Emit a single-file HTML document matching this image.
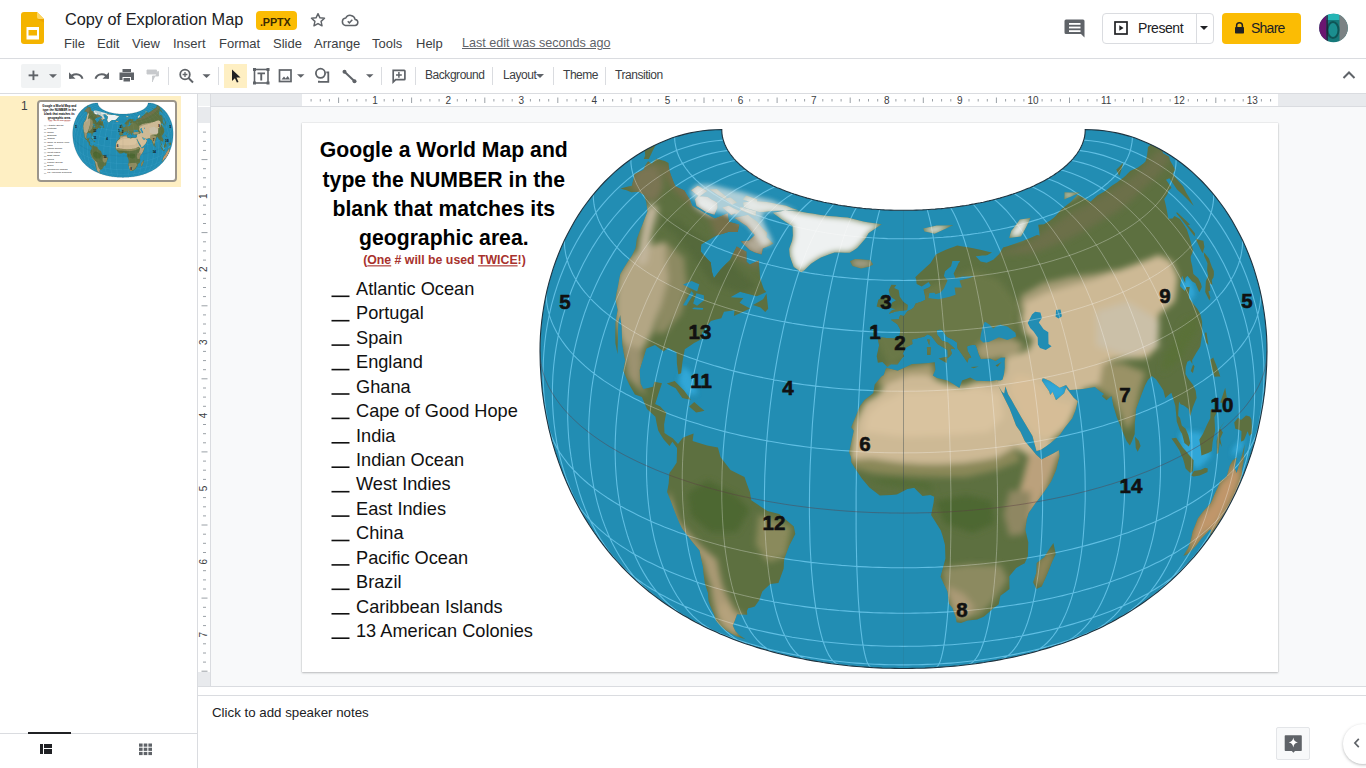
<!DOCTYPE html>
<html><head><meta charset="utf-8">
<style>
*{box-sizing:border-box;margin:0;padding:0}
html,body{width:1366px;height:768px;overflow:hidden;background:#fff;font-family:"Liberation Sans",sans-serif;color:#202124}
.a{position:absolute;white-space:nowrap}
.menu{font-size:13px;color:#3c4043;top:36px}
.tb{font-size:12px;color:#3c4043;top:68px;letter-spacing:-0.45px}
.sep{position:absolute;top:67px;width:1px;height:18px;background:#dadce0}
svg{position:absolute;overflow:visible}
</style></head><body>
<!-- header -->
<svg style="left:0;top:0" width="60" height="58">
 <path d="M21 15 a3 3 0 0 1 3 -3 h13 l7 7 v22 a3 3 0 0 1 -3 3 h-17 a3 3 0 0 1 -3 -3z" fill="#f4b400"/>
 <path d="M37 19h7v3.5z" fill="#e89a00" opacity="0.55"/><path d="M37 12 l7 7 h-5 a2 2 0 0 1 -2 -2z" fill="#fdd663"/>
 <rect x="26.5" y="27" width="12.5" height="12.5" fill="#fff"/>
 <rect x="28.5" y="30" width="8.5" height="5.5" fill="#f4b400"/>
</svg>
<div class="a" style="left:65px;top:10px;font-size:16.3px;color:#202124">Copy of Exploration Map</div>
<div class="a" style="left:256px;top:11px;width:41px;height:19px;background:#fbbc04;border-radius:4px"></div>
<div class="a" style="left:260px;top:15.5px;font-size:10.8px;font-weight:bold;color:#3b2b00;letter-spacing:-0.15px">.PPTX</div>
<svg style="left:308.7px;top:10.5px" width="18" height="18" viewBox="0 0 24 24"><path d="M12 3.5l2.6 5.6 6.1.6-4.6 4.1 1.3 6-5.4-3.1-5.4 3.1 1.3-6-4.6-4.1 6.1-.6z" fill="none" stroke="#5f6368" stroke-width="1.9" stroke-linejoin="round"/></svg>
<svg style="left:340px;top:10px" width="20" height="20" viewBox="0 0 24 24"><path d="M6.5 18.5h11a3.6 3.6 0 0 0 .6-7.2A6 6 0 0 0 6.9 9.6 4.5 4.5 0 0 0 6.5 18.5z" fill="none" stroke="#5f6368" stroke-width="1.8"/><path d="M9.3 13.5l1.9 1.9 3.6-3.6" fill="none" stroke="#5f6368" stroke-width="1.8"/></svg>

<div class="a menu" style="left:64px">File</div>
<div class="a menu" style="left:97px">Edit</div>
<div class="a menu" style="left:132px">View</div>
<div class="a menu" style="left:173px">Insert</div>
<div class="a menu" style="left:219px">Format</div>
<div class="a menu" style="left:273px">Slide</div>
<div class="a menu" style="left:314px">Arrange</div>
<div class="a menu" style="left:372px">Tools</div>
<div class="a menu" style="left:416px">Help</div>
<div class="a" style="left:462px;top:36px;font-size:12.6px;color:#5f6368;text-decoration:underline">Last edit was seconds ago</div>

<!-- right header -->
<svg style="left:1064px;top:18px" width="22" height="20" viewBox="0 0 22 20"><path d="M2 1.5h17a1.5 1.5 0 0 1 1.5 1.5v16.5l-3.5-3.5h-15a1.5 1.5 0 0 1 -1.5 -1.5v-11.5a1.5 1.5 0 0 1 1.5 -1.5z" fill="#5f6368"/><rect x="5" y="5" width="11.5" height="1.8" fill="#fff"/><rect x="5" y="8.6" width="11.5" height="1.8" fill="#fff"/><rect x="5" y="12.2" width="11.5" height="1.8" fill="#fff"/></svg>
<div class="a" style="left:1102px;top:13px;width:112px;height:31px;border:1px solid #dadce0;border-radius:4px"></div>
<div class="a" style="left:1196px;top:14px;width:1px;height:29px;background:#dadce0"></div>
<svg style="left:1114px;top:21px" width="14" height="14" viewBox="0 0 14 14"><rect x="1" y="1" width="12" height="12" fill="none" stroke="#202124" stroke-width="1.7"/><path d="M5.3 4.2v5.6l4.2-2.8z" fill="#202124"/></svg>
<div class="a" style="left:1138px;top:20px;font-size:14px;letter-spacing:-0.45px;color:#202124">Present</div>
<svg style="left:1200px;top:26px" width="9" height="5"><path d="M0 0h8l-4 4z" fill="#202124"/></svg>
<div class="a" style="left:1222px;top:13px;width:79px;height:31px;background:#fbbc04;border-radius:4px"></div>
<svg style="left:1234px;top:22px" width="11" height="12" viewBox="0 0 11 12"><path d="M2.6 5V3.6a2.9 2.9 0 0 1 5.8 0V5" fill="none" stroke="#202124" stroke-width="1.5"/><rect x="1" y="5" width="9" height="6.5" rx="0.8" fill="#202124"/></svg>
<div class="a" style="left:1251px;top:20px;font-size:14px;letter-spacing:-0.75px;color:#202124">Share</div>
<svg style="left:1318px;top:13px" width="31" height="31" viewBox="0 0 31 31">
 <defs><clipPath id="av"><circle cx="15.5" cy="15" r="14.3"/></clipPath></defs>
 <g clip-path="url(#av)"><rect width="31" height="31" fill="#16797a"/><rect x="0" y="0" width="8.5" height="31" fill="#6a1670"/><rect x="8.5" y="0" width="13" height="7" fill="#25b5b5"/><rect x="21.5" y="0" width="10" height="31" fill="#7b8284"/><ellipse cx="15" cy="17" rx="5.5" ry="8" fill="#1b8e8f" stroke="#0f5556" stroke-width="2"/><rect x="8.5" y="0" width="1.2" height="31" fill="#2a1030"/></g>
</svg>
<div class="a" style="left:0;top:58px;width:1366px;height:1px;background:#dadce0"></div>

<!-- toolbar -->
<div class="a" style="left:21px;top:64px;width:40px;height:24px;background:#f1f3f4;border-radius:2px"></div>
<svg style="left:0;top:58px" width="420" height="35">
 <g fill="#5f6368" stroke="none">
  <rect x="28.6" y="16.4" width="9.6" height="1.9"/><rect x="32.5" y="12.6" width="1.9" height="9.5"/>
  <path d="M49 16.3h8l-4 3.8z"/>
  <path d="M202.5 16.3h8l-4 3.8z"/><path d="M297 16.3h7.5l-3.75 3.5z"/><path d="M366 16.3h7.5l-3.75 3.5z"/>
 </g>
 <path d="M70 20.5 a6.5 6 0 0 1 12.5 0.3" fill="none" stroke="#5f6368" stroke-width="2"/><path d="M69 14.3v6.5h6.5z" fill="#5f6368"/>
 <path d="M108 20.5 a6.5 6 0 0 0 -12.5 0.3" fill="none" stroke="#5f6368" stroke-width="2"/><path d="M109 14.3v6.5h-6.5z" fill="#5f6368"/>
 <path d="M122.5 11h8.5v3h-8.5z M119.5 14.5h14.5a0 0 0 0 1 0 0v7.5h-3v-3h-8.5v3h-3z M123.5 20h6.5v3.5h-6.5z" fill="#5f6368"/>
 <path d="M147 12h9.5v4h-9.5z M157.5 13.5h1v4.5h-6v6" fill="#c7c9cc" stroke="#c7c9cc" stroke-width="0.9"/>
 <circle cx="185" cy="16.5" r="4.8" fill="none" stroke="#5f6368" stroke-width="1.8"/><path d="M188.5 20l4.5 4.5" stroke="#5f6368" stroke-width="2"/><path d="M182.6 16.5h4.8M185 14.1v4.8" stroke="#5f6368" stroke-width="1.3"/>
</svg>
<div class="sep" style="left:168px"></div>
<div class="sep" style="left:218px"></div>
<div class="a" style="left:224px;top:64px;width:23px;height:24px;background:#feefc3"></div>
<svg style="left:0;top:58px" width="420" height="35">
 <path d="M232 11.5v11.5l2.9-2.8 2 4.4 1.6-.7-2-4.3h4z" fill="#202124"/>
 <rect x="254.5" y="11.5" width="13.5" height="13.5" fill="none" stroke="#5f6368" stroke-width="1.6"/>
 <g fill="#5f6368"><rect x="253" y="10" width="3" height="3"/><rect x="266.5" y="10" width="3" height="3"/><rect x="253" y="23.5" width="3" height="3"/><rect x="266.5" y="23.5" width="3" height="3"/></g>
 <path d="M257.5 14.5h7.5v1.8h-2.8v6.2h-1.9v-6.2h-2.8z" fill="#5f6368"/>
 <rect x="279.5" y="12" width="11.5" height="11.5" fill="none" stroke="#5f6368" stroke-width="1.7"/><path d="M281.5 21.5l2.5-3 1.7 2 2-2.5 2.3 3.5z" fill="#5f6368"/>
 <circle cx="320.5" cy="15.3" r="4.6" fill="none" stroke="#5f6368" stroke-width="1.8"/><path d="M326.3 14.3h2v9.6h-9.4v-1.2" fill="none" stroke="#5f6368" stroke-width="1.8"/>
 <path d="M344.5 13.8l10 9.4" stroke="#5f6368" stroke-width="2"/><circle cx="344.5" cy="13.8" r="2" fill="#5f6368"/><circle cx="354.5" cy="23.2" r="2" fill="#5f6368"/>
 <path d="M393.2 12.3h11a.7.7 0 0 1 .7.7v8a.7.7 0 0 1 -.7.7h-8.5l-2.5 2.3z" fill="none" stroke="#5f6368" stroke-width="1.7"/><path d="M396 16.9h5.8M398.9 14v5.8" stroke="#5f6368" stroke-width="1.5"/>
</svg>
<div class="sep" style="left:381px"></div>
<div class="sep" style="left:415px"></div>
<div class="a tb" style="left:425px">Background</div>
<div class="sep" style="left:492px"></div>
<div class="a tb" style="left:503px">Layout</div>
<svg style="left:536px;top:74px" width="9" height="5"><path d="M0 0h8l-4 4z" fill="#5f6368"/></svg>
<div class="sep" style="left:553px"></div>
<div class="a tb" style="left:563px">Theme</div>
<div class="sep" style="left:605px"></div>
<div class="a tb" style="left:615px">Transition</div>
<svg style="left:1342px;top:70px" width="14" height="10"><path d="M1.5 8l5.5-5.5 5.5 5.5" fill="none" stroke="#5f6368" stroke-width="2"/></svg>
<div class="a" style="left:0;top:93px;width:1366px;height:1px;background:#dadce0"></div>

<!-- left filmstrip -->
<div class="a" style="left:0;top:96px;width:181px;height:91px;background:#feefc3"></div>
<div class="a" style="left:21px;top:99px;font-size:12px;color:#3c4043">1</div>
<div class="a" style="left:37px;top:100px;width:140px;height:82px;border:2px solid #9b958b;border-radius:4px;background:#fff;overflow:hidden"><svg style="left:-39px;top:-102px" width="1366" height="768"><use href="#slideg" transform="translate(-1.94 85) scale(0.1382)"/></svg></div>
<div class="a" style="left:197px;top:94px;width:1px;height:674px;background:#dadce0"></div>
<div class="a" style="left:0;top:733px;width:197px;height:1px;background:#dadce0"></div>
<div class="a" style="left:28px;top:732px;width:43px;height:2px;background:#202124"></div>
<svg style="left:38px;top:742px" width="16" height="14"><path d="M2 2h3v10h-3z M6 2h8v4h-8z M6 7h8v5h-8z" fill="#202124"/></svg>
<svg style="left:138px;top:742px" width="16" height="14"><g fill="#5f6368"><rect x="1" y="1.5" width="3.6" height="3.2"/><rect x="5.7" y="1.5" width="3.6" height="3.2"/><rect x="10.4" y="1.5" width="3.6" height="3.2"/><rect x="1" y="5.7" width="3.6" height="3.2"/><rect x="5.7" y="5.7" width="3.6" height="3.2"/><rect x="10.4" y="5.7" width="3.6" height="3.2"/><rect x="1" y="9.9" width="3.6" height="3.2"/><rect x="5.7" y="9.9" width="3.6" height="3.2"/><rect x="10.4" y="9.9" width="3.6" height="3.2"/></g></svg>

<!-- canvas -->
<div class="a" style="left:198px;top:94px;width:1168px;height:592px;background:#f8f9fa"></div>
<div class="a" style="left:198px;top:94px;width:1168px;height:13px;background:#fff;border-bottom:1px solid #dadce0"></div>
<div class="a" style="left:211px;top:94px;width:91px;height:12px;background:#e8eaed"></div>
<div class="a" style="left:1278px;top:94px;width:88px;height:12px;background:#e8eaed"></div>
<div class="a" style="left:198px;top:94px;width:13px;height:592px;background:#fff;border-right:1px solid #dadce0"></div>
<div class="a" style="left:198px;top:107px;width:12px;height:16px;background:#e8eaed"></div>
<div class="a" style="left:198px;top:672px;width:12px;height:14px;background:#e8eaed"></div>
<div class="a" style="left:198px;top:94px;width:12px;height:12px;background:#f1f3f4"></div>
<svg id="rulers" style="left:0;top:0" width="1366" height="768"><path d="M311.1 99v2.5M320.3 99v2.5M329.4 99v2.5M338.6 97.5v5.5M347.7 99v2.5M356.8 99v2.5M366.0 99v2.5M384.2 99v2.5M393.4 99v2.5M402.5 99v2.5M411.6 97.5v5.5M420.8 99v2.5M429.9 99v2.5M439.1 99v2.5M457.3 99v2.5M466.5 99v2.5M475.6 99v2.5M484.8 97.5v5.5M493.9 99v2.5M503.0 99v2.5M512.2 99v2.5M530.4 99v2.5M539.6 99v2.5M548.7 99v2.5M557.8 97.5v5.5M567.0 99v2.5M576.1 99v2.5M585.3 99v2.5M603.5 99v2.5M612.7 99v2.5M621.8 99v2.5M631.0 97.5v5.5M640.1 99v2.5M649.2 99v2.5M658.4 99v2.5M676.6 99v2.5M685.8 99v2.5M694.9 99v2.5M704.0 97.5v5.5M713.2 99v2.5M722.3 99v2.5M731.5 99v2.5M749.7 99v2.5M758.9 99v2.5M768.0 99v2.5M777.1 97.5v5.5M786.3 99v2.5M795.4 99v2.5M804.6 99v2.5M822.8 99v2.5M832.0 99v2.5M841.1 99v2.5M850.2 97.5v5.5M859.4 99v2.5M868.5 99v2.5M877.7 99v2.5M895.9 99v2.5M905.1 99v2.5M914.2 99v2.5M923.3 97.5v5.5M932.5 99v2.5M941.6 99v2.5M950.8 99v2.5M969.0 99v2.5M978.2 99v2.5M987.3 99v2.5M996.4 97.5v5.5M1005.6 99v2.5M1014.7 99v2.5M1023.9 99v2.5M1042.1 99v2.5M1051.3 99v2.5M1060.4 99v2.5M1069.5 97.5v5.5M1078.7 99v2.5M1087.8 99v2.5M1097.0 99v2.5M1115.2 99v2.5M1124.4 99v2.5M1133.5 99v2.5M1142.7 97.5v5.5M1151.8 99v2.5M1160.9 99v2.5M1170.1 99v2.5M1188.3 99v2.5M1197.5 99v2.5M1206.6 99v2.5M1215.8 97.5v5.5M1224.9 99v2.5M1234.0 99v2.5M1243.2 99v2.5M1261.4 99v2.5M1270.6 99v2.5M203 132.1h3M203 141.3h3M203 150.4h3M201.5 159.6h6M203 168.7h3M203 177.8h3M203 187.0h3M203 205.2h3M203 214.4h3M203 223.5h3M201.5 232.6h6M203 241.8h3M203 250.9h3M203 260.1h3M203 278.3h3M203 287.5h3M203 296.6h3M201.5 305.8h6M203 314.9h3M203 324.0h3M203 333.2h3M203 351.4h3M203 360.6h3M203 369.7h3M201.5 378.8h6M203 388.0h3M203 397.1h3M203 406.3h3M203 424.5h3M203 433.7h3M203 442.8h3M201.5 451.9h6M203 461.1h3M203 470.2h3M203 479.4h3M203 497.6h3M203 506.8h3M203 515.9h3M201.5 525.0h6M203 534.2h3M203 543.3h3M203 552.5h3M203 570.7h3M203 579.9h3M203 589.0h3M201.5 598.1h6M203 607.3h3M203 616.4h3M203 625.6h3M203 643.8h3M203 653.0h3M203 662.1h3M201.5 671.2h6" stroke="#9aa0a6" stroke-width="1" fill="none"/><g font-family="Liberation Sans" font-size="10" fill="#3c4043" text-anchor="middle"><text x="375.1" y="104">1</text><text x="448.2" y="104">2</text><text x="521.3" y="104">3</text><text x="594.4" y="104">4</text><text x="667.5" y="104">5</text><text x="740.6" y="104">6</text><text x="813.7" y="104">7</text><text x="886.8" y="104">8</text><text x="959.9" y="104">9</text><text x="1033.0" y="104">10</text><text x="1106.1" y="104">11</text><text x="1179.2" y="104">12</text><text x="1252.3" y="104">13</text><text transform="translate(207.3 196.1) rotate(-90)" x="0" y="0">1</text><text transform="translate(207.3 269.2) rotate(-90)" x="0" y="0">2</text><text transform="translate(207.3 342.3) rotate(-90)" x="0" y="0">3</text><text transform="translate(207.3 415.4) rotate(-90)" x="0" y="0">4</text><text transform="translate(207.3 488.5) rotate(-90)" x="0" y="0">5</text><text transform="translate(207.3 561.6) rotate(-90)" x="0" y="0">6</text><text transform="translate(207.3 634.7) rotate(-90)" x="0" y="0">7</text></g></svg>

<div class="a" style="left:302px;top:123px;width:976px;height:549px;background:#fff;box-shadow:0 1px 2px rgba(60,64,67,.3),0 0 1px rgba(60,64,67,.3)"></div>
<svg id="slidesvg" style="left:0;top:0" width="1366" height="768"><defs><path id="landp" d="M677 448L672.4 441.8L669.6 446.1L663.9 439.8L661 435.2L658.2 430.5L656.7 423.7L655.4 416.8L651.1 412.8L647 408.9L644.4 403L641.9 397.1L638.4 395.8L634.9 394.5L632.2 389.8L629.5 385.1L626.3 377.9L623.3 370.7L625.2 360.6L623.6 352.3L622.3 344L621.9 335.3L621.7 326.7L620.9 320.9L620.3 315.1L618.3 322.1L618 330L618 338.1L617.7 346.1L617.6 354.3L616.5 348.8L615.4 343.3L615.3 332.8L615.5 322.5L616.5 316.2L617.7 309.9L616.5 304.4L615.5 298.8L616.7 292L618.1 285.4L619.1 279.7L620.3 274L624 267.7L627.9 261.5L632 255.5L635.6 247.9L636.2 243.3L636.8 238.7L639.6 231.4L642.6 224.3L645 217.8L647.5 211.6L647.1 208.5L646.7 205.4L646.4 202.4L645.6 199.9L644.9 197.5L644.3 195L641.5 193.4L638.8 191.8L635 192L631.3 192.2L628.9 191.3L626.6 190.3L623.6 189.4L620.6 188.5L626.2 187.1L631.9 185.7L632.7 182.2L633.7 178.7L634.1 176.4L634.6 174.1L639 172L643.5 170.1L644.5 167.7L645.4 165.3L648.1 161.3L649.9 162.5L651.8 163.7L656.4 158.8L659.1 159.5L661.9 160.2L664.8 161L666.6 162L668.5 163L668.7 165.4L669 167.8L669.3 170.2L670 172.5L670.8 174.9L671.7 177.3L672.7 179.7L673.5 181.9L674.4 184.1L675.4 186.3L678.3 187.7L681.2 189.1L684.3 190.5L685.5 192.6L686.8 194.8L688.2 197L689.7 199.2L690.9 202.5L692.3 205.8L695.2 207.6L698.3 209.3L701.4 211L704.6 212.9L708 214.8L711.4 216.7L714.9 218.6L721.3 215.9L727.7 213.3L728.2 217.5L728.9 221.9L732.3 222.8L735.8 223.8L739.3 224.7L737.7 232L733.4 231.9L729.1 231.8L722.8 233.7L716.4 235.6L708.9 239.9L701.3 244.3L700.7 251.6L703.9 255.3L707.3 258.9L710.8 262.5L711.3 267.2L712 272.1L713.9 278.2L717.3 273.7L720.8 269.3L725.4 264.5L730 259.9L733.4 253.1L736.8 246.6L740 248.4L743.1 250.1L746.4 251.8L746.4 256.8L746.5 261.8L749.8 264.5L754.3 262.6L758.8 260.6L759.1 265.6L759.6 270.8L760.1 277.9L761.9 283.7L764 289.6L766.3 292L761.5 294.2L756.7 296.3L751.1 294.8L745.5 293.3L740.1 291.8L735.3 294.6L730.6 297.3L734.8 297.6L739 297.8L743.3 298L739.6 302.7L744.8 305.7L750.1 308.6L744.7 311.1L739.3 313.5L733.9 315.9L734.5 310.2L729.3 311L724 311.8L721.3 318.2L716.1 319.6L710.9 320.9L706.6 326.6L702.2 332.4L701.4 339.2L694.1 343L689.4 346.2L684.8 349.3L683.6 355.5L682.5 361.7L681.8 367.5L681.1 373.2L678.3 374.3L676.9 363.4L676.6 352.5L672.4 350.2L668.2 347.8L663.6 351.4L659.3 348.2L655 344.9L650.7 346.7L646.4 348.6L644.7 353.9L643 359.2L641.3 364.6L639.7 369.9L640 376.6L640.5 383.4L643.3 389.1L648.1 387.9L653 386.7L654.4 381.7L658.2 382.5L662 383.3L660 388.9L658.2 394.6L655.2 404L660.3 406.6L663.3 409.7L666.3 412.8L665.1 418.7L664.1 424.6L664.5 433L668.5 435.7L672.7 438.2L678 443.9ZM678 443.9L682.8 437.7L688.2 435.6L693.6 433.4L692.6 441L697.4 442.5L702.3 444L707.2 445.4L712.5 446.5L717.9 447.6L720.6 457.3L725.5 463.6L730.5 469.9L737.4 473.5L744.5 477.1L747.1 484.6L749.9 492.1L751.3 500.2L756.6 503.8L762 507.4L767.4 510.9L773.3 512.5L779.2 514.1L786.5 520.3L793.8 526.4L795.3 534L792.2 539.9L789.2 545.7L786.7 552.2L784.2 558.7L783.9 563.6L783.7 568.4L781 575.9L778.4 583.1L774.3 583.5L770.3 584L766.3 587.8L762.3 591.6L760.7 595.9L759.2 600.2L756.9 603.4L754.8 606.6L751.5 607.5L748.2 608.3L746.9 611.1L747.2 614.8L742.1 614.5L737.1 614.2L736 617.3L735 620.1L733.8 623L732.8 625.5L734.1 628.5L735.5 631.2L739.1 634.9L742.4 637.2L745.6 639.3L741.5 638.1L737.4 636.8L731.6 633.7L725.8 630.3L721 626L716.3 621.3L715.2 618L714.1 614.6L712.2 610.4L710.3 606L708.6 601.3L708.2 597.2L708 592.9L706.4 588.2L704.9 583.4L704.1 578L703.4 572.4L702.9 566.6L701.2 558.8L699.6 550.6L693.7 543.5L688 536.2L682.3 528.7L679.2 522.5L676.3 515.5L673.6 508.4L670.9 501.2L667.1 492.1L668.7 483.3L669 478.2L669.4 473.1L672.8 468.6L676.7 462.4L676.8 457.3L677 452.1L677 448ZM886.6 367.8L892.1 369.3L897.7 370.7L904.9 367.4L912.1 364L919.2 363.7L926.3 363.3L930.6 362.7L934.8 362.2L935.4 369.7L932.8 375.4L937 378L942.4 379.3L947.9 380.7L953.6 384.3L959.4 388L962.1 380.5L966.2 378.9L970.2 377.4L976.3 380.8L983.6 381.1L990.8 381.3L997.3 380.1L998.4 385.7L1000.9 390.9L1003.3 396.1L1006.4 402.3L1009.5 408.4L1012.8 417.1L1016.1 425.7L1020.4 431.7L1024.7 441L1031.1 448.6L1036.2 454.7L1041.5 459.5L1047.3 456.5L1053.2 453.4L1058.9 450.3L1059.6 455.9L1057.8 463.2L1056 470.5L1051.1 481.5L1047.3 487.2L1043.4 492.8L1039.4 498.3L1035.2 503.6L1028.7 512.8L1026.8 518.8L1026.1 524.1L1025.3 529.4L1026.8 535.9L1028.3 542.3L1028.1 549.3L1027.9 556.1L1024.7 563.3L1020.4 565.6L1016.2 567.9L1009.3 576.3L1009.4 582.7L1009.5 589L1005 592.4L1000.4 595.7L999.5 600.2L998.6 604.5L993.8 607.8L988.9 612.2L984.1 616.5L977.2 619.5L972.4 620.1L967.5 620.6L961 623.1L956.6 622.2L955.9 617.8L954.2 613L952.5 607.9L949 603.7L948.3 597.9L947.6 591.8L944.1 584.5L940.6 576.8L942.2 570.8L943.8 564.7L945.4 558.5L945.2 551.8L945 545L943.7 540L942.3 534.9L940.8 530.5L936 522.8L931.1 514.9L932.3 508.9L933.6 502.8L934.2 496.8L930.4 495L922.5 496L918.4 491.9L914.3 487.8L907.3 489L902.1 491.8L896.9 494.6L891.2 494.9L885.5 495.2L879.8 495.5L874.6 491.5L869.4 487.5L861.6 478.3L856.4 470.3L851.3 462.2L851.1 457.3L849.1 452.3L850.7 445.1L852.2 437.9L853.8 430.7L851.2 427.3L854.1 420.2L857.1 413.1L860 406L864.7 399.7L869 396.4L873.3 393.1L874.7 384.6L881.4 376.4L883.8 374.9L885.7 368.9ZM887.4 367L890.9 364.3L897.5 364.4L902.1 358.1L904.1 356.2L902.7 353.4L906 347.6L912.4 344.1L912 339.6L916.6 338.4L920.3 337.5L924 336.7L927.7 334.3L931.3 336L937.5 344.1L943 347.3L947.6 350.1L947.9 357.9L950.3 355.8L951.8 353.8L950.5 348.4L955.1 349.3L953.5 347.4L948.2 342.8L942 340.8L937.2 334.7L936.6 330.2L940.3 329.2L942.6 330.6L946.9 336.8L953.1 339.8L957 342.6L957.5 348.3L961 353.1L962.9 355.7L967.5 362.8L968.5 358.4L971.2 357.3L967.5 351L967 346.4L969.9 345.3L975.3 344.8L976.8 347.7L978.6 353.8L980.9 359.1L985.5 358.8L990.1 358.4L995.5 360.9L1000.8 357.4L1005.3 357.6L1004.7 360.9L1004.8 368.1L1004 374.3L1002.6 379.4L1000.7 380.4L997.3 380.5L998.4 385.7L1002 391.7L1004.2 393.5L1005.4 386.3L1008.1 394.2L1011.6 399.9L1015.2 406.4L1018.2 411.7L1021.2 417.1L1025.7 424.6L1029.1 430.3L1032.5 435.9L1034.6 443.9L1036.5 450.9L1040.9 449.7L1045.8 446.4L1050.6 442.9L1055.3 438.9L1060 434.8L1064.9 427.4L1068.7 422.8L1072.3 418.2L1075.5 410.3L1077.8 401.3L1073.7 397.7L1069.9 392.8L1066.1 387.8L1064.2 393.3L1060.1 396.7L1056 400.2L1052.6 392.1L1050.2 395.1L1049.1 391.2L1045.4 385.9L1041.8 380.6L1042.8 378L1049.6 380.7L1054.7 384.2L1059.7 387.7L1066.1 384.9L1069.7 389.9L1076.2 389.5L1082.7 389.1L1088.8 388L1094.9 386.9L1099.6 391L1104.1 393.9L1101.8 395.9L1106.5 400.3L1111.5 395.8L1113.3 405.7L1115.1 411.5L1116.8 417.3L1119.2 423L1121.5 428.7L1124 434.9L1126.5 441.1L1129.9 445.6L1132.1 441.1L1134.7 434L1134.8 428.5L1134.8 423.1L1135.5 416.1L1136 409.1L1138.9 401.6L1141.7 394.1L1145 385.5L1147.9 379.9L1151.8 376L1156 379.3L1159.7 384.7L1163.3 390.2L1165.3 397.9L1168.3 395.3L1171.4 392.7L1173.4 399.2L1175.3 405.7L1176.1 413.8L1176.8 421.8L1180 430.4L1181.9 433.5L1183.2 438.3L1184.4 443L1188.9 446.5L1190.2 443L1188.4 435.2L1185.6 428.7L1181.8 425.4L1180 418L1178.1 415.7L1178.7 406.1L1179.1 401.6L1180.6 404.2L1183.9 405.4L1188.5 409.1L1190.3 416.1L1192.9 407L1196.6 397.9L1195.7 390.7L1193.1 384.9L1187.8 378L1185.5 374L1185.7 367.3L1187.3 361.8L1190 360.2L1192.4 364.1L1192.1 360.2L1194.2 356.6L1196.2 352.9L1198.3 349.7L1200.3 346.4L1201.3 339.9L1202.2 333.4L1202.1 321.6L1200.1 313.6L1197.3 308.7L1193.6 304.3L1189.1 298.2L1188.8 293.2L1189.8 287.1L1186.4 286.9L1184.8 291L1179.9 286.1L1180.9 281L1182.1 275.8L1185.2 283L1185.3 278.1L1187.5 275.8L1192 281.3L1195.4 283.3L1199.3 292.3L1200.6 289.7L1201.8 287.1L1200.9 283.4L1198.2 278.3L1193.4 274.1L1192.2 266.1L1190.9 260.7L1190.7 256.8L1191.9 253.7L1193.1 250.5L1191.3 243.9L1189.4 237.3L1186.8 229.2L1183.4 224L1179.9 218.9L1174.5 216L1172.5 218.4L1168.4 218.7L1167.3 212.7L1166.1 206.8L1165.2 202.8L1164.2 198.9L1165.9 196.6L1167.4 194.3L1167.9 192.5L1168.4 190.7L1170 189.3L1171.5 187.8L1166 179.8L1167.7 179L1169.3 178.2L1173.2 183.8L1177 189.6L1182.8 194.8L1188.3 200.2L1193.8 205.9L1189.6 198.3L1186.4 193L1183.1 186.2L1178.6 181.2L1174.2 176L1173 173.2L1174.1 171.5L1175.1 169.8L1172.8 165.2L1169.8 160.3L1169.5 158.5L1169.1 156.7L1162.9 153.3L1162.1 150.3L1156.6 147.3L1151 144.6L1149.5 145.8L1147.9 147L1147.8 148.8L1147.6 150.7L1147.4 152.5L1147.1 154.8L1146.7 157.1L1146.2 159.3L1145.5 161.6L1143.7 163.2L1141.7 164.7L1139.7 166.2L1137.6 167.7L1135.1 168.8L1132.7 169.8L1130.2 170.9L1128.7 172.5L1127.2 174.1L1125.6 175.8L1123.6 177.4L1121.5 179.1L1119.2 180.7L1117 182.4L1114.6 184L1112.2 185.5L1110.2 187.1L1108.2 188.7L1106.2 190.2L1104.1 191.7L1101.9 193L1099.6 194.2L1097.3 195.4L1095.2 197.5L1092.9 199.6L1090.6 201.7L1084.1 198.1L1077.6 194.8L1075.8 196.7L1074 198.6L1072.1 200.5L1070.1 202.4L1068 204.1L1065.9 205.8L1063.7 207.6L1061.4 209.3L1059.5 211.5L1057.6 213.7L1055.6 215.9L1053.5 218.1L1050.5 220.2L1047.3 222.3L1044.1 224.3L1041.2 224.5L1038.2 224.8L1039.1 230.2L1039.8 235.8L1037.2 235.1L1033.8 236.5L1030.4 237.9L1026.9 239.3L1023.4 240.7L1019.9 242L1016.3 243.3L1011.9 244.8L1007.6 246.2L1003.1 247.5L1001.2 250.8L999.3 254.1L996.4 256.8L993.5 259.6L989 258L984.6 256.5L988.4 254.5L992 252.4L987.3 251.4L982.5 250.3L977.9 249.3L973.2 248.2L967.8 247.3L962.5 246.4L957.2 245.5L953.4 246.9L949.7 248.3L945.9 249.7L940.9 252.1L935.9 254.4L933.2 258.8L930.4 263.2L926.2 267L921.9 270.9L918.6 274L915.3 277.2L916.1 279.1L916.7 284.1L921.7 286.6L925.2 284.2L928.6 281.9L930.8 285.3L929.3 287.3L923.6 289.8L924.8 294.8L925.6 299.8L921.2 301.7L915.7 303.5L913.8 307.4L911.2 309.5L907.6 311L904 316L900.1 315.2L898.8 319.2L894.8 319.5L890.8 319.8L897.4 324.3L900.3 329.5L899.4 338.1L892.5 338.4L886.8 337.9L881.1 337.4L878 339.5L879.1 345.3L877.9 350.7L876.7 356.1L877.9 362.8L882.4 362.1L885.5 365ZM801.2 272.2L797.4 269.6L793.7 267L791.7 261.4L789.8 256L789.1 248.9L790.6 244.8L792.1 240.8L792.9 235.4L792.7 230.6L792.6 226.1L789.7 224.4L786.8 222.7L784.1 221L781.4 219.2L778.5 217.1L775.6 215L772.9 212.8L779 211.7L785.1 210.6L788.8 210.9L792.5 211.1L796.3 211.2L800 211.4L804.1 212.2L808.2 212.9L812.4 213.6L816.6 214.3L820.9 214.9L825.1 215.5L828.9 215.9L832.6 216.2L836.4 216.6L840.2 216.9L843.9 217.2L847.7 217.4L851.6 218.5L855.5 219.5L859.4 220.5L863.5 221.4L867.5 222.3L871 222.8L874.6 223.3L878.1 223.8L881.7 224.2L877.5 227L873.2 229.9L868.7 233L865.5 238.6L861.4 243.2L857.2 248L853.5 250.4L849.7 252.8L844.7 252.7L839.7 252.6L834.6 252.5L830.1 254.1L825.6 255.8L820.9 257.5L816 260.6L811 263.8L804.1 270.5ZM761.7 254.5L758.3 253.5L754.9 252.5L752.3 251.2L749.7 249.9L746.6 247L743.6 244.2L740.8 241.3L744.8 241.1L748.8 240.8L754.9 235L752 232L749.3 229L746.7 226L743.6 224L740.5 222L737.5 220L734.6 218L741.3 216.6L748 215.1L750.8 217.2L753.8 219.3L756.9 221.4L758.8 223.8L760.7 226.1L762.7 228.5L764.9 230.7L767.1 232.8L766.4 237L769.8 240.3L773.3 243.5L769.9 245.6L762.8 248.4ZM759.4 212L755.4 210.8L751.5 209.6L747.7 208.4L743.9 207.1L743.5 204.7L743.1 202.5L749.2 201.8L755.3 201.1L759.1 201.4L762.9 201.7L766.6 202L770.5 202.8L774.4 203.6L778.3 204.4L782.2 205.1L786.2 205.8L789.3 207L792.4 208.2L795.6 209.3L798.9 210.5L794.5 210.5L790.1 210.6L785.6 210.6L781.2 210.6L776 210.7L770.8 210.9L767.1 211.5L763.4 212.1ZM755.5 216L751.6 214.6L747.9 213.1L744.2 211.6L740.6 210L740 206.8L743.9 208L747.9 209.1L751.9 210.2L756 211.3ZM714.4 214.8L710.4 213.5L706.5 212.2L703.9 210.7L701.3 209.1L698.8 207.5L696.4 205.9L695.6 202.5L695 199.2L698.3 195.8L702.9 196.4L707.6 196.9L709.9 198.4L712.3 199.9L714.7 201.3L717.2 202.8L717.3 205.4L717.4 208ZM699.4 196.6L697.2 195L695.1 193.4L693.1 191.8L691.1 190.2L697.8 185.7L700.1 187.1L702.4 188.5L704.7 189.8L707.1 191.1L703.2 193.8ZM731.3 214.9L728.9 213.1L726.7 211.2L724.5 209.3L722.4 207.4L728.5 205.8L731.2 207.1L733.9 208.4L736.7 209.7L739.6 211ZM724.4 198.8L721.8 197.3L719.3 195.7L716.8 194.2L714.4 192.6L712 191L709.7 189.4L713.3 189.3L716.8 189.1L719.2 191.1L721.6 193.1L724.2 195.1L726.8 197ZM852.5 266L850 261.3L855 258.9L860.1 259.3L865.2 259.7L870.3 260L873.1 264.5L869.5 266.6L865.3 267.6L861.2 268.5L856.8 267.2ZM888.7 313.7L892.2 312.7L895.7 311.6L901.4 310.8L907.1 309.9L907.8 305L903.5 301.9L899.8 296.8L898.6 290.1L894.2 288.1L896.3 284.9L891.4 284.8L888.8 290L889.8 295L891.5 297.4L895.9 300.2L892.1 302.5L889.9 307.7L895.8 309.2L891.9 310.2ZM887.4 306.2L888.3 301.7L889.7 298.4L885.3 295.5L881.9 297.6L878.3 299.7L876.6 306.6L882.9 308.6ZM1209.4 300.6L1205.2 292L1205.5 287.6L1205.9 281L1207.1 278.4L1208.3 275.8L1207.1 270.2L1207.5 263.2L1204.2 256L1203.8 251.9L1202.2 252.8L1199.7 247.4L1195.7 238.7L1200.7 240.2L1203.4 240.7L1204.4 247.1L1203.1 251.6L1205.6 254.2L1208.9 258.6L1211.7 266.4L1213.8 271.1L1213.9 274.8L1213.4 277.6L1211.8 280L1212.3 284.7L1209.6 283.5L1210.3 290.6L1208.4 291.4L1210.4 297.6ZM1194.7 236.4L1194.9 233.2L1191.4 229.1L1187.8 225L1190.2 224.8L1185.8 220.4L1181.3 216.2L1176.7 212.1L1176.5 213.5L1180 217.6L1183.5 221.9L1186.9 226.2L1190.2 230.7ZM1205.9 342.2L1204.8 332.8L1206.5 332.4L1207.5 338.7L1208.4 345ZM1190.7 371L1193.1 364.5L1194.5 366.3L1192.9 373.1ZM1135 436.8L1138.8 440.7L1140.6 446.1L1137.7 451.7L1135.8 447.9L1135.4 442.4ZM1171.5 438.4L1176.2 437.7L1179.4 442.5L1182.5 447.3L1186 451.2L1189.3 455.2L1193.6 460.3L1193.3 465.7L1192.9 471L1190.2 473L1185.6 468.5L1184.4 463.6L1183 458.7L1181.1 454.4L1179.2 450.1L1175.5 444.3ZM1191.3 475.6L1194 471.1L1197.1 470.6L1200.2 470.1L1202.6 468.9L1205 467.7L1207.8 468.6L1207.5 472L1203.7 473.7L1199.7 475.4L1196.7 475.9L1193.5 476.4ZM1199.4 439.5L1200.5 446.6L1201.4 455.5L1204.8 454.2L1208.1 453L1211.8 451.1L1212.6 442.3L1215.1 430.8L1214.8 424.1L1214.4 417.3L1216.4 413L1212.8 408.6L1210.6 410.1L1210.3 418.2L1207.1 424.5L1202.9 434.1ZM1216.8 454L1216.8 447.6L1216.6 441.2L1219.1 429.7L1222.2 425.3L1225.1 420.9L1222.5 424.4L1219.9 428L1222.9 432.5L1220.2 438.4L1221.1 442.8L1221.8 447.1L1219.7 442.6L1219 447.9L1218.3 453.1ZM1234.2 422.4L1236.2 420.1L1238.1 417.7L1241 419.9L1243.6 417.7L1246 415.5L1248.1 416.1L1250.1 416.8L1251.5 419.8L1251.8 426.6L1251.7 433.4L1250.5 434.7L1249.3 436L1248.5 433.7L1247.6 431.3L1245.8 435.8L1244 440.2L1242.5 440.9L1241 441.5L1241.3 436.4L1241.5 431.2L1240 430.3L1238.3 429.4L1235.3 428.8ZM1210.2 359.8L1213.2 357.4L1215.7 363.7L1218.1 370.1L1220.3 376.5L1217.5 376.6L1214.6 376.7L1212.2 369.5ZM1220.2 402.5L1222.8 395.1L1225.2 387.7L1226.2 393.7L1227.1 399.6L1225.1 403.5L1222.7 403ZM1197.8 518.5L1202.7 511.9L1206.8 507.4L1210.8 502.9L1214.4 494.5L1217.6 487.7L1220.7 480.8L1222.7 479.7L1224.6 478.6L1226.7 476.3L1228.3 471L1229.8 465.6L1232.9 460.2L1234.9 458.8L1236.8 457.5L1235.6 463L1234.4 468.4L1235.6 470.6L1236.6 472.9L1239.6 463.5L1242.3 454L1244.7 444.2L1244.2 449.6L1243.6 455L1244.2 458.1L1243.1 463.8L1241.9 469.3L1242.1 471.1L1242.1 472.8L1241.4 476.1L1240.6 479.5L1239.3 484L1237.6 488.2L1235.8 492.4L1233 498.3L1230 504.1L1225.7 511.9L1223.6 515.6L1222.1 518.1L1218.1 524.6L1214 530.8L1212 533.6L1210.7 535.3L1209.4 537L1210.1 535.3L1210.8 533.5L1210.4 533.3L1211.4 529.8L1210.7 529.7L1209.9 529.5L1207 532.7L1204 535.8L1201 538.9L1196.5 545.3L1193.4 548.4L1190.2 551.5L1186.9 554.5L1185.2 555.2L1183.4 555.8L1188 548.3L1189.8 543.2L1191.3 538L1192.7 531.3L1195.3 525ZM1053.4 542.9L1054.6 548.6L1055.7 554.3L1052.2 561.6L1048.8 570.2L1045.3 578.5L1041.7 586.5L1036.4 589L1033.1 582.3L1034.8 577.5L1036.4 572.5L1036.6 567.8L1036.7 562.9L1044.3 557.2L1049.3 548.9ZM666.8 383.5L670.7 382.3L674.7 381.1L679.3 385.8L684.1 390.6L687.5 395.2L691 399.8L686.6 398.9L682.3 398L679 393.2L675.7 388.3L671.2 386ZM689.2 406.4L694.2 402.1L699.3 406.5L704.5 410.8L700.3 411.7L696.1 412.4L692.6 409.4ZM1009.1 237.9L1013.1 237.5L1017.1 237L1021 236.5L1023.3 232.6L1025.3 228.8L1027.2 225L1028.9 221.4L1030.5 217.8L1026.9 218.4L1023.4 219L1019.8 219.6L1017.9 222.3L1015.8 225.1L1013.6 227.9L1011.3 230.7L1010.2 234.2ZM924.5 231.5L929.5 232.6L934.6 233.7L938.5 232L942.3 230.3L946.1 228.5L949.7 226.8L953.3 225.1L949.1 225.3L945 225.4L940.8 225.5L936.6 225.5L932.2 226.5L927.7 227.5L923.2 228.4ZM1064.2 199.5L1067.5 198.1L1070.7 196.7L1073.9 195.3L1077 193.9L1080 192.4L1074.8 192.4L1069.7 192.4L1064.5 192.3L1064.5 195.8ZM1119.2 175.9L1120.1 173.7L1120.8 171.5L1121.5 169.3L1122.1 167.1L1122.6 164.9L1123 162.8L1121.4 164.5L1119.8 166.2L1118.1 167.9L1116.3 169.6L1117.8 172.7ZM938.6 358.5L943.1 357.6L947.5 356.8L946.5 363.1L942.6 360.8ZM926.9 347.3L930.7 347.1L930.5 354.9L927.2 355ZM927.1 339.6L929.6 339.5L929.3 345.6ZM970.7 366.9L974.7 366.7L978.6 366.5L973.7 368.2ZM995.5 365.4L1001.5 362.1L997.6 366.7ZM753 305.1L758 302.2L763.1 299.3L766.5 293.5L767.3 301.1L768.2 308.7L765.2 311.9L760.5 307.4L756.7 306.3ZM732.1 204.5L729.5 202.6L726.9 200.7L724.4 198.8L730.5 197.5L732.6 199.1L734.7 200.7L736.9 202.4ZM736.3 214.1L732.7 212.5L729.2 210.8L731.2 207.1L733.9 208.4L736.7 209.7L739.6 211ZM755.9 204L752.5 202.9L749.2 201.8L746 200.6L742.8 199.5L746.1 195.6L748.9 196.6L751.7 197.6L754.6 198.5L757.5 199.5ZM644.9 150.3L645 152.8L645.2 155.4L643.8 158.9L646.3 158.9L648.9 158.9L650 156.5L651.2 154L652.7 150.8L654.3 147.7L656 144.6L650.4 147.3Z"/><path id="ocp" d="M721.8 129.5L721.8 131L721.9 132.4L722 133.8L722.2 135.2L722.4 136.6L722.7 138L723.1 139.4L723.5 140.8L724 142.2L724.5 143.6L725.1 145L725.7 146.3L726.4 147.7L727.1 149.1L727.9 150.5L728.8 151.8L729.7 153.2L730.6 154.5L731.7 155.8L732.7 157.2L733.8 158.5L735 159.8L736.2 161.1L737.5 162.4L738.8 163.7L740.1 165L741.6 166.2L743 167.5L744.5 168.7L746.1 169.9L747.7 171.2L749.4 172.4L751.1 173.5L752.8 174.7L754.6 175.9L756.5 177L758.3 178.2L760.3 179.3L762.3 180.4L764.3 181.5L766.3 182.5L768.4 183.6L770.6 184.6L772.8 185.7L775 186.7L777.2 187.7L779.5 188.6L781.9 189.6L784.3 190.5L786.7 191.4L789.1 192.3L791.6 193.2L794.1 194.1L796.7 194.9L799.3 195.7L801.9 196.5L804.5 197.3L807.2 198.1L809.9 198.8L812.6 199.5L815.4 200.2L818.2 200.9L821 201.5L823.8 202.2L826.7 202.8L829.6 203.3L832.5 203.9L835.4 204.4L838.4 205L841.3 205.5L844.3 205.9L847.3 206.4L850.4 206.8L853.4 207.2L856.5 207.6L859.5 207.9L862.6 208.3L865.7 208.6L868.8 208.8L871.9 209.1L875.1 209.3L878.2 209.5L881.4 209.7L884.5 209.9L887.7 210L890.8 210.1L894 210.2L897.2 210.3L900.3 210.3L903.5 210.3L906.7 210.3L909.8 210.3L913 210.2L916.2 210.1L919.3 210L922.5 209.9L925.6 209.7L928.8 209.5L931.9 209.3L935.1 209.1L938.2 208.8L941.3 208.6L944.4 208.3L947.5 207.9L950.5 207.6L953.6 207.2L956.6 206.8L959.7 206.4L962.7 205.9L965.7 205.5L968.6 205L971.6 204.4L974.5 203.9L977.4 203.3L980.3 202.8L983.2 202.2L986 201.5L988.8 200.9L991.6 200.2L994.4 199.5L997.1 198.8L999.8 198.1L1002.5 197.3L1005.1 196.5L1007.7 195.7L1010.3 194.9L1012.9 194.1L1015.4 193.2L1017.9 192.3L1020.3 191.4L1022.7 190.5L1025.1 189.6L1027.5 188.6L1029.8 187.7L1032 186.7L1034.2 185.7L1036.4 184.6L1038.6 183.6L1040.7 182.5L1042.7 181.5L1044.7 180.4L1046.7 179.3L1048.7 178.2L1050.5 177L1052.4 175.9L1054.2 174.7L1055.9 173.5L1057.6 172.4L1059.3 171.2L1060.9 169.9L1062.5 168.7L1064 167.5L1065.4 166.2L1066.9 165L1068.2 163.7L1069.5 162.4L1070.8 161.1L1072 159.8L1073.2 158.5L1074.3 157.2L1075.3 155.8L1076.4 154.5L1077.3 153.2L1078.2 151.8L1079.1 150.5L1079.9 149.1L1080.6 147.7L1081.3 146.3L1081.9 145L1082.5 143.6L1083 142.2L1083.5 140.8L1083.9 139.4L1084.3 138L1084.6 136.6L1084.8 135.2L1085 133.8L1085.1 132.4L1085.2 131L1085.2 129.5L1091.6 129.7L1097.9 130.1L1104.2 130.8L1110.5 131.7L1116.8 132.9L1123 134.4L1129.2 136.1L1135.3 138.1L1141.4 140.4L1147.4 142.9L1153.3 145.7L1159.2 148.7L1164.9 152L1170.6 155.5L1176.1 159.3L1181.6 163.3L1186.9 167.5L1192.1 171.9L1197.1 176.6L1202.1 181.5L1206.9 186.6L1211.5 191.8L1216 197.3L1220.3 203L1224.5 208.8L1228.5 214.9L1232.3 221L1235.9 227.4L1239.4 233.9L1242.7 240.5L1245.7 247.3L1248.6 254.2L1251.3 261.2L1253.8 268.4L1256 275.6L1258.1 282.9L1260 290.3L1261.6 297.8L1263 305.4L1264.2 313L1265.2 320.6L1266 328.3L1266.6 336L1266.9 343.8L1267 351.5L1266.7 364.9L1265.9 378.3L1264.7 391.5L1262.9 404.4L1260.6 417.1L1258 429.3L1255 441.2L1251.6 452.5L1247.9 463.4L1244 473.8L1239.9 483.6L1235.6 493L1231.2 501.8L1226.7 510.2L1222.1 518.1L1217.5 525.5L1212.8 532.5L1208.1 539.1L1203.4 545.4L1198.7 551.3L1194.1 556.8L1189.4 562L1184.8 567L1180.3 571.7L1175.7 576.1L1171.2 580.3L1166.7 584.3L1162.3 588.1L1157.9 591.7L1153.5 595.1L1149.2 598.4L1144.9 601.5L1140.6 604.5L1136.4 607.3L1132.2 610.1L1127.9 612.7L1123.8 615.2L1119.6 617.6L1115.5 619.9L1111.3 622.2L1107.2 624.3L1103.1 626.4L1099 628.4L1094.9 630.3L1090.8 632.1L1086.8 633.9L1082.7 635.6L1078.6 637.3L1074.5 638.9L1070.5 640.4L1066.4 641.9L1062.3 643.4L1058.2 644.7L1054.2 646.1L1050.1 647.4L1046 648.6L1041.9 649.8L1037.8 651L1033.7 652.1L1029.6 653.2L1025.5 654.2L1021.3 655.2L1017.2 656.2L1013.1 657.1L1008.9 658L1004.8 658.8L1000.6 659.6L996.5 660.4L992.3 661.1L988.1 661.8L983.9 662.5L979.7 663.1L975.5 663.7L971.3 664.2L967.1 664.7L962.9 665.2L958.7 665.7L954.5 666.1L950.2 666.5L946 666.8L941.8 667.1L937.5 667.4L933.3 667.7L929 667.9L924.8 668.1L920.5 668.2L916.3 668.3L912 668.4L907.8 668.5L903.5 668.5L899.2 668.5L895 668.4L890.7 668.3L886.5 668.2L882.2 668.1L878 667.9L873.7 667.7L869.5 667.4L865.2 667.1L861 666.8L856.8 666.5L852.5 666.1L848.3 665.7L844.1 665.2L839.9 664.7L835.7 664.2L831.5 663.7L827.3 663.1L823.1 662.5L818.9 661.8L814.7 661.1L810.5 660.4L806.4 659.6L802.2 658.8L798.1 658L793.9 657.1L789.8 656.2L785.7 655.2L781.5 654.2L777.4 653.2L773.3 652.1L769.2 651L765.1 649.8L761 648.6L756.9 647.4L752.8 646.1L748.8 644.7L744.7 643.4L740.6 641.9L736.5 640.4L732.5 638.9L728.4 637.3L724.3 635.6L720.2 633.9L716.2 632.1L712.1 630.3L708 628.4L703.9 626.4L699.8 624.3L695.7 622.2L691.5 619.9L687.4 617.6L683.2 615.2L679.1 612.7L674.8 610.1L670.6 607.3L666.4 604.5L662.1 601.5L657.8 598.4L653.5 595.1L649.1 591.7L644.7 588.1L640.3 584.3L635.8 580.3L631.3 576.1L626.7 571.7L622.2 567L617.6 562L612.9 556.8L608.3 551.3L603.6 545.4L598.9 539.1L594.2 532.5L589.5 525.5L584.9 518.1L580.3 510.2L575.8 501.8L571.4 493L567.1 483.6L563 473.8L559.1 463.4L555.4 452.5L552 441.2L549 429.3L546.4 417.1L544.1 404.4L542.3 391.5L541.1 378.3L540.3 364.9L540 351.5L540.1 343.8L540.4 336L541 328.3L541.8 320.6L542.8 313L544 305.4L545.4 297.8L547 290.3L548.9 282.9L551 275.6L553.2 268.4L555.7 261.2L558.4 254.2L561.3 247.3L564.3 240.5L567.6 233.9L571.1 227.4L574.7 221L578.5 214.9L582.5 208.8L586.7 203L591 197.3L595.5 191.8L600.1 186.6L604.9 181.5L609.9 176.6L614.9 171.9L620.1 167.5L625.4 163.3L630.9 159.3L636.4 155.5L642.1 152L647.8 148.7L653.7 145.7L659.6 142.9L665.6 140.4L671.7 138.1L677.8 136.1L684 134.4L690.2 132.9L696.5 131.7L702.8 130.8L709.1 130.1L715.4 129.7L721.8 129.5Z"/><clipPath id="lc"><use href="#landp"/></clipPath><clipPath id="oc"><use href="#ocp"/></clipPath>
<filter id="bl" x="-5%" y="-5%" width="110%" height="110%"><feGaussianBlur stdDeviation="3"/></filter><filter id="bl2" x="-20%" y="-20%" width="140%" height="140%"><feGaussianBlur stdDeviation="2.5"/></filter></defs>
<g id="slideg">
<rect x="302" y="123" width="976" height="549" fill="#fff"/>
<g font-family="Liberation Sans" font-weight="bold" font-size="21.2" fill="#000" text-anchor="middle"><text x="443.8" y="157.2">Google a World Map and</text><text x="443.8" y="186.5">type the NUMBER in the</text><text x="443.8" y="215.8">blank that matches its</text><text x="443.8" y="245.0">geographic area.</text></g><text x="444.5" y="264" font-family="Liberation Sans" font-weight="bold" font-size="12.3" fill="#a8322d" text-anchor="middle">(One # will be used TWICE!)</text><rect x="367.3" y="265.3" width="23.9" height="1.1" fill="#a8322d"/><rect x="478.0" y="265.3" width="39.6" height="1.1" fill="#a8322d"/><g font-family="Liberation Sans" font-size="18.2" fill="#111"><rect x="331.5" y="295.5" width="18" height="1.6"/><text x="356" y="295.0">Atlantic Ocean</text><rect x="331.5" y="319.9" width="18" height="1.6"/><text x="356" y="319.4">Portugal</text><rect x="331.5" y="344.3" width="18" height="1.6"/><text x="356" y="343.8">Spain</text><rect x="331.5" y="368.8" width="18" height="1.6"/><text x="356" y="368.3">England</text><rect x="331.5" y="393.2" width="18" height="1.6"/><text x="356" y="392.7">Ghana</text><rect x="331.5" y="417.6" width="18" height="1.6"/><text x="356" y="417.1">Cape of Good Hope</text><rect x="331.5" y="442.0" width="18" height="1.6"/><text x="356" y="441.5">India</text><rect x="331.5" y="466.4" width="18" height="1.6"/><text x="356" y="465.9">Indian Ocean</text><rect x="331.5" y="490.9" width="18" height="1.6"/><text x="356" y="490.4">West Indies</text><rect x="331.5" y="515.3" width="18" height="1.6"/><text x="356" y="514.8">East Indies</text><rect x="331.5" y="539.7" width="18" height="1.6"/><text x="356" y="539.2">China</text><rect x="331.5" y="564.1" width="18" height="1.6"/><text x="356" y="563.6">Pacific Ocean</text><rect x="331.5" y="588.5" width="18" height="1.6"/><text x="356" y="588.0">Brazil</text><rect x="331.5" y="613.0" width="18" height="1.6"/><text x="356" y="612.5">Caribbean Islands</text><rect x="331.5" y="637.4" width="18" height="1.6"/><text x="356" y="636.9">13 American Colonies</text></g>
<use href="#ocp" fill="#228db3"/>
<g clip-path="url(#oc)">
<path d="M683 365.8L687.2 369.5L691.5 373.1L694.4 383.7L697.6 394.3L691.1 394.3L684.7 394.2L681.5 387.7L678.4 381.2L680.6 373.5ZM1179.2 432.9L1184.3 432.2L1189.4 431.4L1193.4 431.8L1197.3 432.2L1201.1 432.5L1204.8 439.9L1208.3 447.2L1209.8 451.8L1211.2 456.3L1207.7 459.6L1204.2 462.9L1200.5 466.2L1196.8 469.4L1193.4 466L1189.7 462.5L1186 457L1181.9 451.5L1180.7 442.2ZM1232.7 449.1L1235.6 445.7L1238.4 442.3L1241.1 438.9L1243.6 435.5L1243.1 443.3L1242.4 451L1240.2 451.5L1237.7 452L1234.8 454.3L1231.8 456.5ZM1189.9 302.4L1192.8 297.8L1195.4 293.2L1192.8 285.6L1190 278.1L1186.5 278.6L1182.9 279.1L1182.5 284.1L1182.1 289.2L1186.1 295.8ZM1041.4 378.2L1047.3 380.1L1053.2 382L1059 383.8L1064.9 385.6L1066.5 395.7L1059.9 398.3L1053.2 400.7L1048 393.5L1042.7 386.3Z" fill="#35ade0" filter="url(#bl2)" opacity="0.8"/>
<path d="M694.7 621.6L697.7 623.2L700.9 624.8L704.1 626.4L707.4 627.9L710.7 629.4L714.1 630.9L717.6 632.3L721.1 633.8L724.6 635.2L728.3 636.5L731.9 637.9L735.7 639.2L739.4 640.5L743.3 641.8L747.1 643L751.1 644.2L755 645.3L759 646.5L763.1 647.6L767.2 648.7L771.3 649.7L775.5 650.7L779.7 651.7L784 652.6L788.3 653.5L792.6 654.4L797 655.3L801.4 656.1L805.8 656.8L810.3 657.6L814.7 658.3L819.3 659L823.8 659.6L828.4 660.2L832.9 660.8L837.5 661.3L842.2 661.8L846.8 662.2L851.5 662.7L856.2 663.1L860.9 663.4L865.6 663.7L870.3 664L875 664.2L879.7 664.4L884.5 664.6L889.2 664.7L894 664.8L898.7 664.9L903.5 664.9L908.3 664.9L913 664.8L917.8 664.7L922.5 664.6L927.3 664.4L932 664.2L936.7 664L941.4 663.7L946.1 663.4L950.8 663.1L955.5 662.7L960.2 662.2L964.8 661.8L969.5 661.3L974.1 660.8L978.6 660.2L983.2 659.6L987.7 659L992.3 658.3L996.7 657.6L1001.2 656.8L1005.6 656.1L1010 655.3L1014.4 654.4L1018.7 653.5L1023 652.6L1027.3 651.7L1031.5 650.7L1035.7 649.7L1039.8 648.7L1043.9 647.6L1048 646.5L1052 645.3L1055.9 644.2L1059.9 643L1063.7 641.8L1067.6 640.5L1071.3 639.2L1075.1 637.9L1078.7 636.5L1082.4 635.2L1085.9 633.8L1089.4 632.3L1092.9 630.9L1096.3 629.4L1099.6 627.9L1102.9 626.4L1106.1 624.8L1109.3 623.2L1112.3 621.6M615.8 560.1L617.9 562.3L620.1 564.5L622.3 566.7L624.6 568.9L627.1 571.1L629.6 573.2L632.1 575.3L634.8 577.4L637.5 579.5L640.4 581.5L643.3 583.6L646.3 585.6L649.3 587.5L652.5 589.5L655.7 591.4L659 593.4L662.4 595.2L665.8 597.1L669.3 598.9L672.9 600.7L676.6 602.5L680.3 604.2L684.1 606L688 607.6L691.9 609.3L695.9 610.9L699.9 612.5L704.1 614.1L708.2 615.6L712.5 617.1L716.8 618.6L721.1 620L725.5 621.4L730 622.8L734.5 624.1L739.1 625.4L743.7 626.7L748.4 627.9L753.1 629.1L757.8 630.2L762.6 631.3L767.5 632.4L772.4 633.4L777.3 634.4L782.3 635.4L787.3 636.3L792.3 637.2L797.4 638L802.5 638.8L807.6 639.6L812.8 640.3L818 641L823.2 641.7L828.4 642.3L833.7 642.8L839 643.3L844.3 643.8L849.6 644.3L855 644.7L860.3 645L865.7 645.3L871.1 645.6L876.5 645.8L881.9 646L887.3 646.2L892.7 646.3L898.1 646.3L903.5 646.4L908.9 646.3L914.3 646.3L919.7 646.2L925.1 646L930.5 645.8L935.9 645.6L941.3 645.3L946.7 645L952 644.7L957.4 644.3L962.7 643.8L968 643.3L973.3 642.8L978.6 642.3L983.8 641.7L989 641L994.2 640.3L999.4 639.6L1004.5 638.8L1009.6 638L1014.7 637.2L1019.7 636.3L1024.7 635.4L1029.7 634.4L1034.6 633.4L1039.5 632.4L1044.4 631.3L1049.2 630.2L1053.9 629.1L1058.6 627.9L1063.3 626.7L1067.9 625.4L1072.5 624.1L1077 622.8L1081.5 621.4L1085.9 620L1090.2 618.6L1094.5 617.1L1098.8 615.6L1102.9 614.1L1107.1 612.5L1111.1 610.9L1115.1 609.3L1119 607.6L1122.9 606L1126.7 604.2L1130.4 602.5L1134.1 600.7L1137.7 598.9L1141.2 597.1L1144.6 595.2L1148 593.4L1151.3 591.4L1154.5 589.5L1157.7 587.5L1160.7 585.6L1163.7 583.6L1166.6 581.5L1169.5 579.5L1172.2 577.4L1174.9 575.3L1177.4 573.2L1179.9 571.1L1182.4 568.9L1184.7 566.7L1186.9 564.5L1189.1 562.3L1191.2 560.1M573 496.4L574.4 498.9L575.9 501.5L577.5 504L579.2 506.6L580.9 509.1L582.8 511.6L584.8 514L586.9 516.5L589 518.9L591.3 521.4L593.7 523.8L596.1 526.2L598.7 528.6L601.3 530.9L604 533.2L606.9 535.6L609.8 537.9L612.8 540.1L615.9 542.4L619.1 544.6L622.3 546.8L625.7 548.9L629.1 551.1L632.6 553.2L636.2 555.3L639.9 557.3L643.7 559.4L647.5 561.4L651.5 563.3L655.5 565.3L659.5 567.2L663.7 569.1L667.9 570.9L672.2 572.7L676.6 574.5L681 576.2L685.5 578L690.1 579.6L694.7 581.3L699.4 582.9L704.2 584.4L709 586L713.8 587.5L718.8 588.9L723.8 590.3L728.8 591.7L733.9 593L739.1 594.3L744.3 595.6L749.5 596.8L754.8 598L760.2 599.1L765.6 600.2L771 601.2L776.5 602.2L782 603.2L787.5 604.1L793.1 605L798.7 605.8L804.3 606.6L810 607.4L815.7 608.1L821.5 608.7L827.2 609.4L833 609.9L838.8 610.5L844.6 610.9L850.4 611.4L856.3 611.8L862.2 612.1L868 612.4L873.9 612.7L879.8 612.9L885.8 613L891.7 613.1L897.6 613.2L903.5 613.2L909.4 613.2L915.3 613.1L921.2 613L927.2 612.9L933.1 612.7L939 612.4L944.8 612.1L950.7 611.8L956.6 611.4L962.4 610.9L968.2 610.5L974 609.9L979.8 609.4L985.5 608.7L991.3 608.1L997 607.4L1002.7 606.6L1008.3 605.8L1013.9 605L1019.5 604.1L1025 603.2L1030.5 602.2L1036 601.2L1041.4 600.2L1046.8 599.1L1052.2 598L1057.5 596.8L1062.7 595.6L1067.9 594.3L1073.1 593L1078.2 591.7L1083.2 590.3L1088.2 588.9L1093.2 587.5L1098 586L1102.8 584.4L1107.6 582.9L1112.3 581.3L1116.9 579.6L1121.5 578L1126 576.2L1130.4 574.5L1134.8 572.7L1139.1 570.9L1143.3 569.1L1147.5 567.2L1151.5 565.3L1155.5 563.3L1159.5 561.4L1163.3 559.4L1167.1 557.3L1170.8 555.3L1174.4 553.2L1177.9 551.1L1181.3 548.9L1184.7 546.8L1187.9 544.6L1191.1 542.4L1194.2 540.1L1197.2 537.9L1200.1 535.6L1203 533.2L1205.7 530.9L1208.3 528.6L1210.9 526.2L1213.3 523.8L1215.7 521.4L1218 518.9L1220.1 516.5L1222.2 514L1224.2 511.6L1226.1 509.1L1227.8 506.6L1229.5 504L1231.1 501.5L1232.6 498.9L1234 496.4M548.2 425.5L548.9 428.3L549.7 431L550.6 433.8L551.6 436.5L552.8 439.3L554 442L555.4 444.7L556.8 447.4L558.4 450.1L560 452.7L561.8 455.4L563.7 458L565.7 460.7L567.7 463.3L569.9 465.9L572.2 468.4L574.6 471L577.1 473.5L579.7 476.1L582.4 478.6L585.1 481L588 483.5L591 485.9L594.1 488.4L597.2 490.7L600.5 493.1L603.8 495.4L607.3 497.8L610.8 500L614.4 502.3L618.1 504.5L621.9 506.7L625.8 508.9L629.8 511L633.8 513.1L638 515.2L642.2 517.3L646.5 519.3L650.8 521.2L655.3 523.2L659.8 525.1L664.4 527L669.1 528.8L673.8 530.6L678.6 532.4L683.5 534.1L688.5 535.8L693.5 537.4L698.6 539L703.7 540.6L708.9 542.1L714.2 543.6L719.5 545.1L724.8 546.5L730.3 547.9L735.8 549.2L741.3 550.5L746.9 551.7L752.5 552.9L758.2 554L763.9 555.1L769.7 556.2L775.5 557.2L781.3 558.2L787.2 559.1L793.1 560L799 560.8L805 561.6L811 562.4L817.1 563L823.1 563.7L829.2 564.3L835.3 564.8L841.5 565.4L847.6 565.8L853.8 566.2L860 566.6L866.2 566.9L872.4 567.2L878.6 567.4L884.8 567.5L891 567.7L897.3 567.7L903.5 567.8L909.7 567.7L916 567.7L922.2 567.5L928.4 567.4L934.6 567.2L940.8 566.9L947 566.6L953.2 566.2L959.4 565.8L965.5 565.4L971.7 564.8L977.8 564.3L983.9 563.7L989.9 563L996 562.4L1002 561.6L1008 560.8L1013.9 560L1019.8 559.1L1025.7 558.2L1031.5 557.2L1037.3 556.2L1043.1 555.1L1048.8 554L1054.5 552.9L1060.1 551.7L1065.7 550.5L1071.2 549.2L1076.7 547.9L1082.2 546.5L1087.5 545.1L1092.8 543.6L1098.1 542.1L1103.3 540.6L1108.4 539L1113.5 537.4L1118.5 535.8L1123.5 534.1L1128.4 532.4L1133.2 530.6L1137.9 528.8L1142.6 527L1147.2 525.1L1151.7 523.2L1156.2 521.2L1160.5 519.3L1164.8 517.3L1169 515.2L1173.2 513.1L1177.2 511L1181.2 508.9L1185.1 506.7L1188.9 504.5L1192.6 502.3L1196.2 500L1199.7 497.8L1203.2 495.4L1206.5 493.1L1209.8 490.7L1212.9 488.4L1216 485.9L1219 483.5L1221.9 481L1224.6 478.6L1227.3 476.1L1229.9 473.5L1232.4 471L1234.8 468.4L1237.1 465.9L1239.3 463.3L1241.3 460.7L1243.3 458L1245.2 455.4L1247 452.7L1248.6 450.1L1250.2 447.4L1251.6 444.7L1253 442L1254.2 439.3L1255.4 436.5L1256.4 433.8L1257.3 431L1258.1 428.3L1258.8 425.5M546.2 294.1L546.2 296.8L546.4 299.6L546.7 302.4L547.1 305.1L547.6 307.9L548.2 310.7L548.9 313.4L549.7 316.2L550.6 318.9L551.6 321.6L552.8 324.4L554 327.1L555.4 329.8L556.8 332.5L558.4 335.2L560 337.8L561.8 340.5L563.7 343.1L565.7 345.8L567.7 348.4L569.9 351L572.2 353.5L574.6 356.1L577.1 358.7L579.7 361.2L582.4 363.7L585.1 366.2L588 368.6L591 371.1L594.1 373.5L597.2 375.9L600.5 378.2L603.8 380.6L607.3 382.9L610.8 385.1L614.4 387.4L618.1 389.6L621.9 391.8L625.8 394L629.8 396.1L633.8 398.2L638 400.3L642.2 402.4L646.5 404.4L650.8 406.4L655.3 408.3L659.8 410.2L664.4 412.1L669.1 413.9L673.8 415.7L678.6 417.5L683.5 419.2L688.5 420.9L693.5 422.5L698.6 424.1L703.7 425.7L708.9 427.2L714.2 428.7L719.5 430.2L724.8 431.6L730.3 433L735.8 434.3L741.3 435.6L746.9 436.8L752.5 438L758.2 439.1L763.9 440.2L769.7 441.3L775.5 442.3L781.3 443.3L787.2 444.2L793.1 445.1L799 445.9L805 446.7L811 447.5L817.1 448.2L823.1 448.8L829.2 449.4L835.3 450L841.5 450.5L847.6 450.9L853.8 451.3L860 451.7L866.2 452L872.4 452.3L878.6 452.5L884.8 452.7L891 452.8L897.3 452.8L903.5 452.9L909.7 452.8L916 452.8L922.2 452.7L928.4 452.5L934.6 452.3L940.8 452L947 451.7L953.2 451.3L959.4 450.9L965.5 450.5L971.7 450L977.8 449.4L983.9 448.8L989.9 448.2L996 447.5L1002 446.7L1008 445.9L1013.9 445.1L1019.8 444.2L1025.7 443.3L1031.5 442.3L1037.3 441.3L1043.1 440.2L1048.8 439.1L1054.5 438L1060.1 436.8L1065.7 435.6L1071.2 434.3L1076.7 433L1082.2 431.6L1087.5 430.2L1092.8 428.7L1098.1 427.2L1103.3 425.7L1108.4 424.1L1113.5 422.5L1118.5 420.9L1123.5 419.2L1128.4 417.5L1133.2 415.7L1137.9 413.9L1142.6 412.1L1147.2 410.2L1151.7 408.3L1156.2 406.4L1160.5 404.4L1164.8 402.4L1169 400.3L1173.2 398.2L1177.2 396.1L1181.2 394L1185.1 391.8L1188.9 389.6L1192.6 387.4L1196.2 385.1L1199.7 382.9L1203.2 380.6L1206.5 378.2L1209.8 375.9L1212.9 373.5L1216 371.1L1219 368.6L1221.9 366.2L1224.6 363.7L1227.3 361.2L1229.9 358.7L1232.4 356.1L1234.8 353.5L1237.1 351L1239.3 348.4L1241.3 345.8L1243.3 343.1L1245.2 340.5L1247 337.8L1248.6 335.2L1250.2 332.5L1251.6 329.8L1253 327.1L1254.2 324.4L1255.4 321.6L1256.4 318.9L1257.3 316.2L1258.1 313.4L1258.8 310.7L1259.4 307.9L1259.9 305.1L1260.3 302.4L1260.6 299.6L1260.8 296.8L1260.8 294.1M564.3 240.5L564.4 243.2L564.6 245.8L564.8 248.4L565.2 251L565.6 253.7L566.2 256.3L566.9 258.9L567.7 261.5L568.5 264.1L569.5 266.7L570.6 269.3L571.8 271.9L573 274.4L574.4 277L575.9 279.5L577.5 282.1L579.2 284.6L580.9 287.1L582.8 289.6L584.8 292.1L586.9 294.5L589 297L591.3 299.4L593.7 301.8L596.1 304.2L598.7 306.6L601.3 309L604 311.3L606.9 313.6L609.8 315.9L612.8 318.2L615.9 320.4L619.1 322.6L622.3 324.8L625.7 327L629.1 329.1L632.6 331.2L636.2 333.3L639.9 335.4L643.7 337.4L647.5 339.4L651.5 341.4L655.5 343.3L659.5 345.2L663.7 347.1L667.9 349L672.2 350.8L676.6 352.5L681 354.3L685.5 356L690.1 357.7L694.7 359.3L699.4 360.9L704.2 362.5L709 364L713.8 365.5L718.8 366.9L723.8 368.4L728.8 369.7L733.9 371.1L739.1 372.4L744.3 373.6L749.5 374.8L754.8 376L760.2 377.1L765.6 378.2L771 379.3L776.5 380.3L782 381.3L787.5 382.2L793.1 383.1L798.7 383.9L804.3 384.7L810 385.4L815.7 386.1L821.5 386.8L827.2 387.4L833 388L838.8 388.5L844.6 389L850.4 389.4L856.3 389.8L862.2 390.1L868 390.4L873.9 390.7L879.8 390.9L885.8 391.1L891.7 391.2L897.6 391.2L903.5 391.3L909.4 391.2L915.3 391.2L921.2 391.1L927.2 390.9L933.1 390.7L939 390.4L944.8 390.1L950.7 389.8L956.6 389.4L962.4 389L968.2 388.5L974 388L979.8 387.4L985.5 386.8L991.3 386.1L997 385.4L1002.7 384.7L1008.3 383.9L1013.9 383.1L1019.5 382.2L1025 381.3L1030.5 380.3L1036 379.3L1041.4 378.2L1046.8 377.1L1052.2 376L1057.5 374.8L1062.7 373.6L1067.9 372.4L1073.1 371.1L1078.2 369.7L1083.2 368.4L1088.2 366.9L1093.2 365.5L1098 364L1102.8 362.5L1107.6 360.9L1112.3 359.3L1116.9 357.7L1121.5 356L1126 354.3L1130.4 352.5L1134.8 350.8L1139.1 349L1143.3 347.1L1147.5 345.2L1151.5 343.3L1155.5 341.4L1159.5 339.4L1163.3 337.4L1167.1 335.4L1170.8 333.3L1174.4 331.2L1177.9 329.1L1181.3 327L1184.7 324.8L1187.9 322.6L1191.1 320.4L1194.2 318.2L1197.2 315.9L1200.1 313.6L1203 311.3L1205.7 309L1208.3 306.6L1210.9 304.2L1213.3 301.8L1215.7 299.4L1218 297L1220.1 294.5L1222.2 292.1L1224.2 289.6L1226.1 287.1L1227.8 284.6L1229.5 282.1L1231.1 279.5L1232.6 277L1234 274.4L1235.2 271.9L1236.4 269.3L1237.5 266.7L1238.5 264.1L1239.3 261.5L1240.1 258.9L1240.8 256.3L1241.4 253.7L1241.8 251L1242.2 248.4L1242.4 245.8L1242.6 243.2L1242.7 240.5M593.2 194.6L593.3 197L593.4 199.4L593.7 201.8L594 204.2L594.4 206.6L594.9 209L595.5 211.4L596.3 213.7L597.1 216.1L597.9 218.5L598.9 220.9L600 223.2L601.2 225.6L602.4 227.9L603.8 230.2L605.3 232.6L606.8 234.9L608.4 237.2L610.1 239.5L611.9 241.7L613.8 244L615.8 246.2L617.9 248.4L620.1 250.6L622.3 252.8L624.6 255L627.1 257.2L629.6 259.3L632.1 261.4L634.8 263.5L637.5 265.6L640.4 267.6L643.3 269.7L646.3 271.7L649.3 273.7L652.5 275.6L655.7 277.5L659 279.5L662.4 281.3L665.8 283.2L669.3 285L672.9 286.8L676.6 288.6L680.3 290.4L684.1 292.1L688 293.8L691.9 295.4L695.9 297L699.9 298.6L704.1 300.2L708.2 301.7L712.5 303.2L716.8 304.7L721.1 306.1L725.5 307.5L730 308.9L734.5 310.2L739.1 311.5L743.7 312.8L748.4 314L753.1 315.2L757.8 316.3L762.6 317.4L767.5 318.5L772.4 319.5L777.3 320.5L782.3 321.5L787.3 322.4L792.3 323.3L797.4 324.1L802.5 324.9L807.6 325.7L812.8 326.4L818 327.1L823.2 327.8L828.4 328.4L833.7 328.9L839 329.4L844.3 329.9L849.6 330.4L855 330.8L860.3 331.1L865.7 331.4L871.1 331.7L876.5 331.9L881.9 332.1L887.3 332.3L892.7 332.4L898.1 332.4L903.5 332.5L908.9 332.4L914.3 332.4L919.7 332.3L925.1 332.1L930.5 331.9L935.9 331.7L941.3 331.4L946.7 331.1L952 330.8L957.4 330.4L962.7 329.9L968 329.4L973.3 328.9L978.6 328.4L983.8 327.8L989 327.1L994.2 326.4L999.4 325.7L1004.5 324.9L1009.6 324.1L1014.7 323.3L1019.7 322.4L1024.7 321.5L1029.7 320.5L1034.6 319.5L1039.5 318.5L1044.4 317.4L1049.2 316.3L1053.9 315.2L1058.6 314L1063.3 312.8L1067.9 311.5L1072.5 310.2L1077 308.9L1081.5 307.5L1085.9 306.1L1090.2 304.7L1094.5 303.2L1098.8 301.7L1102.9 300.2L1107.1 298.6L1111.1 297L1115.1 295.4L1119 293.8L1122.9 292.1L1126.7 290.4L1130.4 288.6L1134.1 286.8L1137.7 285L1141.2 283.2L1144.6 281.3L1148 279.5L1151.3 277.5L1154.5 275.6L1157.7 273.7L1160.7 271.7L1163.7 269.7L1166.6 267.6L1169.5 265.6L1172.2 263.5L1174.9 261.4L1177.4 259.3L1179.9 257.2L1182.4 255L1184.7 252.8L1186.9 250.6L1189.1 248.4L1191.2 246.2L1193.2 244L1195.1 241.7L1196.9 239.5L1198.6 237.2L1200.2 234.9L1201.7 232.6L1203.2 230.2L1204.6 227.9L1205.8 225.6L1207 223.2L1208.1 220.9L1209.1 218.5L1209.9 216.1L1210.7 213.7L1211.5 211.4L1212.1 209L1212.6 206.6L1213 204.2L1213.3 201.8L1213.6 199.4L1213.7 197L1213.8 194.6M630.9 159.3L630.9 161.4L631 163.5L631.2 165.6L631.5 167.7L631.9 169.8L632.4 171.9L632.9 174L633.5 176.1L634.2 178.2L635 180.3L635.9 182.4L636.8 184.5L637.9 186.5L639 188.6L640.2 190.6L641.4 192.7L642.8 194.7L644.2 196.7L645.7 198.7L647.3 200.7L649 202.7L650.7 204.7L652.5 206.6L654.4 208.6L656.4 210.5L658.5 212.4L660.6 214.3L662.8 216.2L665.1 218L667.4 219.9L669.8 221.7L672.3 223.5L674.9 225.3L677.5 227L680.2 228.8L682.9 230.5L685.8 232.2L688.7 233.9L691.6 235.5L694.7 237.2L697.7 238.8L700.9 240.4L704.1 241.9L707.4 243.5L710.7 245L714.1 246.4L717.6 247.9L721.1 249.3L724.6 250.7L728.3 252.1L731.9 253.5L735.7 254.8L739.4 256.1L743.3 257.3L747.1 258.5L751.1 259.7L755 260.9L759 262L763.1 263.2L767.2 264.2L771.3 265.3L775.5 266.3L779.7 267.3L784 268.2L788.3 269.1L792.6 270L797 270.8L801.4 271.6L805.8 272.4L810.3 273.2L814.7 273.9L819.3 274.5L823.8 275.2L828.4 275.8L832.9 276.3L837.5 276.9L842.2 277.4L846.8 277.8L851.5 278.2L856.2 278.6L860.9 279L865.6 279.3L870.3 279.6L875 279.8L879.7 280L884.5 280.2L889.2 280.3L894 280.4L898.7 280.4L903.5 280.5L908.3 280.4L913 280.4L917.8 280.3L922.5 280.2L927.3 280L932 279.8L936.7 279.6L941.4 279.3L946.1 279L950.8 278.6L955.5 278.2L960.2 277.8L964.8 277.4L969.5 276.9L974.1 276.3L978.6 275.8L983.2 275.2L987.7 274.5L992.3 273.9L996.7 273.2L1001.2 272.4L1005.6 271.6L1010 270.8L1014.4 270L1018.7 269.1L1023 268.2L1027.3 267.3L1031.5 266.3L1035.7 265.3L1039.8 264.2L1043.9 263.2L1048 262L1052 260.9L1055.9 259.7L1059.9 258.5L1063.7 257.3L1067.6 256.1L1071.3 254.8L1075.1 253.5L1078.7 252.1L1082.4 250.7L1085.9 249.3L1089.4 247.9L1092.9 246.4L1096.3 245L1099.6 243.5L1102.9 241.9L1106.1 240.4L1109.3 238.8L1112.3 237.2L1115.4 235.5L1118.3 233.9L1121.2 232.2L1124.1 230.5L1126.8 228.8L1129.5 227L1132.1 225.3L1134.7 223.5L1137.2 221.7L1139.6 219.9L1141.9 218L1144.2 216.2L1146.4 214.3L1148.5 212.4L1150.6 210.5L1152.6 208.6L1154.5 206.6L1156.3 204.7L1158 202.7L1159.7 200.7L1161.3 198.7L1162.8 196.7L1164.2 194.7L1165.6 192.7L1166.8 190.6L1168 188.6L1169.1 186.5L1170.2 184.5L1171.1 182.4L1172 180.3L1172.8 178.2L1173.5 176.1L1174.1 174L1174.6 171.9L1175.1 169.8L1175.5 167.7L1175.8 165.6L1176 163.5L1176.1 161.4L1176.1 159.3M674.7 137.1L674.7 138.9L674.8 140.7L675 142.4L675.3 144.2L675.6 146L676 147.7L676.4 149.5L676.9 151.3L677.5 153L678.2 154.8L678.9 156.5L679.7 158.3L680.6 160L681.5 161.7L682.5 163.4L683.6 165.1L684.7 166.8L685.9 168.5L687.2 170.2L688.5 171.9L689.9 173.6L691.4 175.2L692.9 176.8L694.5 178.5L696.1 180.1L697.9 181.7L699.6 183.3L701.5 184.8L703.4 186.4L705.4 188L707.4 189.5L709.5 191L711.6 192.5L713.8 194L716.1 195.4L718.4 196.9L720.8 198.3L723.2 199.7L725.7 201.1L728.2 202.5L730.8 203.8L733.5 205.2L736.2 206.5L738.9 207.8L741.7 209L744.6 210.3L747.5 211.5L750.4 212.7L753.4 213.9L756.4 215L759.5 216.1L762.6 217.2L765.8 218.3L769 219.4L772.3 220.4L775.6 221.4L778.9 222.4L782.3 223.3L785.7 224.3L789.1 225.2L792.6 226.1L796.1 226.9L799.6 227.7L803.2 228.5L806.8 229.3L810.4 230L814.1 230.7L817.8 231.4L821.5 232L825.2 232.7L829 233.3L832.8 233.8L836.6 234.4L840.4 234.9L844.3 235.3L848.2 235.8L852 236.2L855.9 236.6L859.8 236.9L863.8 237.3L867.7 237.5L871.7 237.8L875.6 238L879.6 238.2L883.6 238.4L887.5 238.6L891.5 238.7L895.5 238.7L899.5 238.8L903.5 238.8L907.5 238.8L911.5 238.7L915.5 238.7L919.5 238.6L923.4 238.4L927.4 238.2L931.4 238L935.3 237.8L939.3 237.5L943.2 237.3L947.2 236.9L951.1 236.6L955 236.2L958.8 235.8L962.7 235.3L966.6 234.9L970.4 234.4L974.2 233.8L978 233.3L981.8 232.7L985.5 232L989.2 231.4L992.9 230.7L996.6 230L1000.2 229.3L1003.8 228.5L1007.4 227.7L1010.9 226.9L1014.4 226.1L1017.9 225.2L1021.3 224.3L1024.7 223.3L1028.1 222.4L1031.4 221.4L1034.7 220.4L1038 219.4L1041.2 218.3L1044.4 217.2L1047.5 216.1L1050.6 215L1053.6 213.9L1056.6 212.7L1059.5 211.5L1062.4 210.3L1065.3 209L1068.1 207.8L1070.8 206.5L1073.5 205.2L1076.2 203.8L1078.8 202.5L1081.3 201.1L1083.8 199.7L1086.2 198.3L1088.6 196.9L1090.9 195.4L1093.2 194L1095.4 192.5L1097.5 191L1099.6 189.5L1101.6 188L1103.6 186.4L1105.5 184.8L1107.4 183.3L1109.1 181.7L1110.9 180.1L1112.5 178.5L1114.1 176.8L1115.6 175.2L1117.1 173.6L1118.5 171.9L1119.8 170.2L1121.1 168.5L1122.3 166.8L1123.4 165.1L1124.5 163.4L1125.5 161.7L1126.4 160L1127.3 158.3L1128.1 156.5L1128.8 154.8L1129.5 153L1130.1 151.3L1130.6 149.5L1131 147.7L1131.4 146L1131.7 144.2L1132 142.4L1132.2 140.7L1132.3 138.9L1132.3 137.1M553.7 446.9L551.2 437.9L549 428.7L547.2 419.4L545.7 409.9L544.5 400.4L543.7 390.9L543.2 381.2L543.1 371.5L543.3 361.8L543.9 352.2L544.8 342.5L546 332.8L547.6 323.3L549.5 313.8L551.7 304.3L554.3 295L557.2 285.9L560.4 276.8L563.9 268L567.7 259.3L571.8 250.8L576.2 242.5L580.9 234.4L585.8 226.6L591 219.1L596.5 211.8L602.2 204.8L608.1 198.1L614.3 191.7L620.6 185.6L627.2 179.9L633.9 174.5L640.9 169.5L647.9 164.9L655.1 160.6L662.5 156.7L669.9 153.2L677.5 150.1L685.1 147.4L692.9 145.1L700.6 143.2L708.4 141.7L716.3 140.7L723.3 140.1M584.9 518.1L580.6 510.6L576.5 502.8L572.8 494.8L569.4 486.6L566.2 478.1L563.4 469.4L560.9 460.6L558.7 451.6L556.8 442.4L555.3 433.1L554.1 423.7L553.2 414.2L552.6 404.6L552.4 394.9L552.5 385.2L552.9 375.5L553.7 365.8L554.8 356.1L556.3 346.4L558 336.8L560.1 327.2L562.5 317.7L565.3 308.3L568.3 299.1L571.6 290L575.3 281L579.2 272.2L583.4 263.6L587.9 255.3L592.6 247.1L597.6 239.2L602.9 231.5L608.4 224.1L614.1 217L620.1 210.2L626.2 203.6L632.5 197.4L639.1 191.6L645.7 186.1L652.6 180.9L659.6 176.1L666.7 171.7L673.9 167.6L681.3 164L688.7 160.7L696.2 157.9L703.8 155.4L711.4 153.4L719 151.8L726.7 150.6L727.9 150.5M619.9 564.6L614.7 558.7L609.7 552.5L605 545.9L600.5 539.1L596.3 532L592.3 524.6L588.6 516.9L585.2 508.9L582.1 500.7L579.3 492.3L576.8 483.7L574.5 474.9L572.6 465.9L571 456.7L569.7 447.4L568.7 438L568.1 428.5L567.7 418.9L567.7 409.2L568 399.5L568.6 389.7L569.5 379.9L570.8 370.2L572.4 360.4L574.2 350.7L576.4 341.1L578.9 331.5L581.7 322L584.7 312.7L588.1 303.4L591.8 294.4L595.7 285.5L599.8 276.7L604.3 268.2L609 259.9L613.9 251.9L619.1 244L624.5 236.5L630.1 229.2L635.9 222.2L641.8 215.5L648 209.2L654.3 203.1L660.8 197.4L667.5 192.1L674.2 187.1L681.1 182.5L688.1 178.3L695.1 174.4L702.3 171L709.5 168L716.8 165.3L724.1 163.1L731.4 161.3L735.6 160.5M653.5 595.1L648 590.6L642.7 585.8L637.6 580.6L632.8 575L628.1 569.1L623.7 562.8L619.5 556.2L615.5 549.3L611.8 542.2L608.4 534.7L605.2 526.9L602.2 518.9L599.6 510.6L597.2 502.2L595.1 493.5L593.3 484.6L591.8 475.5L590.6 466.3L589.7 457L589.1 447.5L588.8 437.9L588.7 428.2L589 418.5L589.6 408.7L590.5 398.8L591.6 389L593.1 379.1L594.8 369.3L596.9 359.6L599.2 349.9L601.8 340.2L604.7 330.7L607.8 321.3L611.3 312L614.9 302.9L618.8 293.9L623 285.2L627.4 276.6L632 268.2L636.9 260.1L641.9 252.3L647.2 244.7L652.6 237.3L658.2 230.3L664 223.6L669.9 217.2L676 211.2L682.2 205.4L688.5 200.1L695 195.1L701.5 190.5L708.2 186.2L714.9 182.4L721.6 178.9L728.4 175.9L735.3 173.2L742.1 171L746.1 169.9M685.3 616.4L680 613.1L674.8 609.3L669.8 605.2L664.9 600.7L660.3 595.8L655.8 590.5L651.5 584.9L647.4 578.9L643.6 572.6L639.9 565.9L636.5 558.9L633.3 551.7L630.4 544.1L627.7 536.3L625.3 528.2L623.1 519.9L621.1 511.3L619.5 502.5L618.1 493.6L616.9 484.4L616.1 475.1L615.5 465.7L615.2 456.1L615.1 446.5L615.4 436.7L615.9 426.9L616.7 417L617.7 407.1L619 397.2L620.6 387.3L622.5 377.4L624.6 367.5L626.9 357.8L629.6 348.1L632.4 338.5L635.5 329L638.9 319.6L642.5 310.5L646.3 301.4L650.3 292.6L654.5 284L658.9 275.6L663.5 267.4L668.3 259.5L673.3 251.9L678.4 244.5L683.7 237.5L689.1 230.7L694.7 224.3L700.4 218.2L706.2 212.5L712.1 207.1L718.1 202.1L724.1 197.4L730.3 193.2L736.4 189.3L742.7 185.9L748.9 182.8L755.2 180.2L759.3 178.7M716.2 632.1L711.2 629.7L706.4 626.8L701.8 623.6L697.2 619.9L692.8 615.8L688.6 611.4L684.5 606.5L680.6 601.3L676.9 595.7L673.4 589.7L670 583.4L666.9 576.8L664 569.8L661.3 562.6L658.8 555L656.5 547.2L654.4 539.1L652.6 530.7L651 522.2L649.6 513.4L648.5 504.4L647.6 495.2L647 485.9L646.6 476.4L646.5 466.8L646.6 457L646.9 447.2L647.5 437.3L648.3 427.4L649.4 417.4L650.7 407.4L652.2 397.4L654 387.4L656 377.5L658.3 367.6L660.7 357.8L663.4 348.1L666.3 338.5L669.4 329.1L672.7 319.8L676.2 310.7L679.8 301.7L683.7 293L687.7 284.5L691.9 276.2L696.3 268.1L700.8 260.4L705.4 252.9L710.2 245.7L715.1 238.8L720.1 232.3L725.3 226.1L730.5 220.2L735.8 214.7L741.1 209.5L746.6 204.8L752.1 200.4L757.6 196.4L763.2 192.8L768.8 189.7L774.4 186.9L775 186.7M746.7 644.1L742.4 642.3L738.1 640.2L734 637.6L730 634.6L726 631.2L722.3 627.4L718.6 623.2L715.1 618.5L711.7 613.5L708.5 608.2L705.5 602.4L702.6 596.3L699.9 589.8L697.4 583.1L695 576L692.9 568.6L690.9 560.9L689.1 552.9L687.5 544.7L686.2 536.2L685 527.5L684 518.5L683.3 509.4L682.7 500.1L682.4 490.7L682.2 481.1L682.3 471.3L682.6 461.5L683.1 451.6L683.8 441.6L684.7 431.6L685.8 421.5L687.1 411.4L688.7 401.3L690.4 391.3L692.3 381.3L694.4 371.4L696.7 361.5L699.2 351.8L701.8 342.1L704.7 332.7L707.7 323.3L710.8 314.2L714.1 305.2L717.6 296.5L721.2 288L725 279.7L728.8 271.7L732.8 263.9L736.9 256.5L741.2 249.3L745.5 242.5L749.9 236L754.4 229.8L758.9 224L763.6 218.5L768.2 213.5L773 208.8L777.7 204.5L782.5 200.6L787.3 197.1L792.2 194L792.9 193.6M777.4 653.2L773.8 652L770.2 650.4L766.8 648.4L763.4 645.9L760.1 643L756.9 639.7L753.9 636L750.9 631.9L748 627.3L745.3 622.4L742.7 617.1L740.2 611.4L737.9 605.3L735.7 598.9L733.7 592.2L731.8 585.2L730.1 577.8L728.5 570.1L727.1 562.2L725.8 553.9L724.7 545.5L723.8 536.8L723.1 527.8L722.5 518.7L722.1 509.4L721.8 499.9L721.8 490.3L721.9 480.5L722.1 470.6L722.6 460.7L723.2 450.6L724 440.5L725 430.4L726.1 420.2L727.4 410.1L728.8 400L730.5 389.9L732.2 379.8L734.2 369.9L736.2 360.1L738.5 350.3L740.8 340.7L743.3 331.3L745.9 322L748.7 312.9L751.6 304L754.6 295.4L757.7 287L760.9 278.8L764.2 270.9L767.6 263.3L771.1 256L774.6 249.1L778.3 242.4L782 236.1L785.7 230.1L789.6 224.5L793.4 219.3L797.3 214.5L801.2 210L805.2 206L809.1 202.4L812.6 199.5M808.5 660L805.7 659.3L802.9 658.1L800.2 656.4L797.6 654.4L795.1 651.9L792.6 648.9L790.2 645.6L787.9 641.8L785.6 637.6L783.5 633.1L781.5 628.1L779.5 622.7L777.7 617L775.9 610.9L774.3 604.4L772.8 597.6L771.4 590.5L770.2 583.1L769 575.3L768 567.3L767.1 559.1L766.3 550.5L765.7 541.7L765.2 532.8L764.8 523.6L764.5 514.2L764.4 504.6L764.4 494.9L764.6 485.1L764.8 475.2L765.3 465.1L765.8 455L766.5 444.8L767.3 434.6L768.2 424.4L769.2 414.2L770.4 404L771.7 393.9L773.1 383.8L774.6 373.8L776.3 363.9L778 354.1L779.9 344.4L781.9 335L783.9 325.6L786.1 316.5L788.3 307.6L790.7 298.9L793.1 290.4L795.6 282.2L798.1 274.3L800.8 266.7L803.5 259.4L806.2 252.3L809 245.7L811.9 239.3L814.8 233.3L817.7 227.7L820.7 222.5L823.7 217.6L826.7 213.2L829.7 209.1L832.7 205.5L833.9 204.2M839.9 664.7L838 664.3L836.1 663.4L834.3 662.1L832.5 660.3L830.7 658L829 655.4L827.4 652.3L825.8 648.8L824.3 644.8L822.8 640.5L821.4 635.7L820.1 630.6L818.8 625.1L817.6 619.2L816.5 612.9L815.5 606.3L814.5 599.4L813.6 592.1L812.8 584.6L812.1 576.7L811.4 568.6L810.9 560.2L810.4 551.5L810 542.6L809.8 533.5L809.6 524.2L809.4 514.7L809.4 505.1L809.5 495.3L809.6 485.3L809.9 475.3L810.2 465.2L810.7 455L811.2 444.8L811.8 434.6L812.4 424.3L813.2 414L814.1 403.8L815 393.6L816 383.5L817.1 373.5L818.2 363.6L819.5 353.8L820.8 344.2L822.1 334.7L823.6 325.4L825.1 316.3L826.6 307.4L828.2 298.7L829.9 290.3L831.6 282.2L833.4 274.3L835.2 266.8L837.1 259.5L838.9 252.6L840.9 246L842.8 239.7L844.8 233.8L846.8 228.3L848.8 223.2L850.8 218.5L852.9 214.1L854.9 210.2L856.5 207.6M871.6 667.6L870.6 667.3L869.7 666.5L868.8 665.4L867.9 663.7L867 661.7L866.1 659.2L865.3 656.2L864.5 652.9L863.7 649.1L863 644.9L862.2 640.3L861.6 635.3L860.9 629.9L860.3 624.1L859.7 618L859.2 611.5L858.7 604.7L858.2 597.5L857.8 590L857.5 582.3L857.1 574.2L856.8 565.9L856.6 557.3L856.4 548.4L856.2 539.4L856.1 530.1L856.1 520.7L856.1 511.1L856.1 501.3L856.1 491.4L856.3 481.4L856.4 471.3L856.6 461.1L856.9 450.9L857.2 440.6L857.5 430.3L857.9 420L858.3 409.7L858.8 399.5L859.3 389.3L859.8 379.3L860.4 369.3L861 359.4L861.6 349.7L862.3 340.1L863 330.7L863.8 321.5L864.6 312.5L865.4 303.7L866.2 295.2L867.1 286.9L868 278.9L868.9 271.2L869.8 263.8L870.8 256.7L871.7 250L872.7 243.6L873.7 237.6L874.7 231.9L875.7 226.6L876.7 221.7L877.8 217.2L878.8 213.1L879.8 209.6M935.4 667.6L936.4 667.3L937.3 666.5L938.2 665.4L939.1 663.7L940 661.7L940.9 659.2L941.7 656.2L942.5 652.9L943.3 649.1L944 644.9L944.8 640.3L945.4 635.3L946.1 629.9L946.7 624.1L947.3 618L947.8 611.5L948.3 604.7L948.8 597.5L949.2 590L949.5 582.3L949.9 574.2L950.2 565.9L950.4 557.3L950.6 548.4L950.8 539.4L950.9 530.1L950.9 520.7L950.9 511.1L950.9 501.3L950.9 491.4L950.7 481.4L950.6 471.3L950.4 461.1L950.1 450.9L949.8 440.6L949.5 430.3L949.1 420L948.7 409.7L948.2 399.5L947.7 389.3L947.2 379.3L946.6 369.3L946 359.4L945.4 349.7L944.7 340.1L944 330.7L943.2 321.5L942.4 312.5L941.6 303.7L940.8 295.2L939.9 286.9L939 278.9L938.1 271.2L937.2 263.8L936.2 256.7L935.3 250L934.3 243.6L933.3 237.6L932.3 231.9L931.3 226.6L930.3 221.7L929.2 217.2L928.2 213.1L927.2 209.6M967.1 664.7L969 664.3L970.9 663.4L972.7 662.1L974.5 660.3L976.3 658L978 655.4L979.6 652.3L981.2 648.8L982.7 644.8L984.2 640.5L985.6 635.7L986.9 630.6L988.2 625.1L989.4 619.2L990.5 612.9L991.5 606.3L992.5 599.4L993.4 592.1L994.2 584.6L994.9 576.7L995.6 568.6L996.1 560.2L996.6 551.5L997 542.6L997.2 533.5L997.4 524.2L997.6 514.7L997.6 505.1L997.5 495.3L997.4 485.3L997.1 475.3L996.8 465.2L996.3 455L995.8 444.8L995.2 434.6L994.6 424.3L993.8 414L992.9 403.8L992 393.6L991 383.5L989.9 373.5L988.8 363.6L987.5 353.8L986.2 344.2L984.9 334.7L983.4 325.4L981.9 316.3L980.4 307.4L978.8 298.7L977.1 290.3L975.4 282.2L973.6 274.3L971.8 266.8L969.9 259.5L968.1 252.6L966.1 246L964.2 239.7L962.2 233.8L960.2 228.3L958.2 223.2L956.2 218.5L954.1 214.1L952.1 210.2L950.5 207.6M998.5 660L1001.3 659.3L1004.1 658.1L1006.8 656.4L1009.4 654.4L1011.9 651.9L1014.4 648.9L1016.8 645.6L1019.1 641.8L1021.4 637.6L1023.5 633.1L1025.5 628.1L1027.5 622.7L1029.3 617L1031.1 610.9L1032.7 604.4L1034.2 597.6L1035.6 590.5L1036.8 583.1L1038 575.3L1039 567.3L1039.9 559.1L1040.7 550.5L1041.3 541.7L1041.8 532.8L1042.2 523.6L1042.5 514.2L1042.6 504.6L1042.6 494.9L1042.4 485.1L1042.2 475.2L1041.7 465.1L1041.2 455L1040.5 444.8L1039.7 434.6L1038.8 424.4L1037.8 414.2L1036.6 404L1035.3 393.9L1033.9 383.8L1032.4 373.8L1030.7 363.9L1029 354.1L1027.1 344.4L1025.1 335L1023.1 325.6L1020.9 316.5L1018.7 307.6L1016.3 298.9L1013.9 290.4L1011.4 282.2L1008.9 274.3L1006.2 266.7L1003.5 259.4L1000.8 252.3L998 245.7L995.1 239.3L992.2 233.3L989.3 227.7L986.3 222.5L983.3 217.6L980.3 213.2L977.3 209.1L974.3 205.5L973.1 204.2M1029.6 653.2L1033.2 652L1036.8 650.4L1040.2 648.4L1043.6 645.9L1046.9 643L1050.1 639.7L1053.1 636L1056.1 631.9L1059 627.3L1061.7 622.4L1064.3 617.1L1066.8 611.4L1069.1 605.3L1071.3 598.9L1073.3 592.2L1075.2 585.2L1076.9 577.8L1078.5 570.1L1079.9 562.2L1081.2 553.9L1082.3 545.5L1083.2 536.8L1083.9 527.8L1084.5 518.7L1084.9 509.4L1085.2 499.9L1085.2 490.3L1085.1 480.5L1084.9 470.6L1084.4 460.7L1083.8 450.6L1083 440.5L1082 430.4L1080.9 420.2L1079.6 410.1L1078.2 400L1076.5 389.9L1074.8 379.8L1072.8 369.9L1070.8 360.1L1068.5 350.3L1066.2 340.7L1063.7 331.3L1061.1 322L1058.3 312.9L1055.4 304L1052.4 295.4L1049.3 287L1046.1 278.8L1042.8 270.9L1039.4 263.3L1035.9 256L1032.4 249.1L1028.7 242.4L1025 236.1L1021.3 230.1L1017.4 224.5L1013.6 219.3L1009.7 214.5L1005.8 210L1001.8 206L997.9 202.4L994.4 199.5M1060.3 644.1L1064.6 642.3L1068.9 640.2L1073 637.6L1077 634.6L1081 631.2L1084.7 627.4L1088.4 623.2L1091.9 618.5L1095.3 613.5L1098.5 608.2L1101.5 602.4L1104.4 596.3L1107.1 589.8L1109.6 583.1L1112 576L1114.1 568.6L1116.1 560.9L1117.9 552.9L1119.5 544.7L1120.8 536.2L1122 527.5L1123 518.5L1123.7 509.4L1124.3 500.1L1124.6 490.7L1124.8 481.1L1124.7 471.3L1124.4 461.5L1123.9 451.6L1123.2 441.6L1122.3 431.6L1121.2 421.5L1119.9 411.4L1118.3 401.3L1116.6 391.3L1114.7 381.3L1112.6 371.4L1110.3 361.5L1107.8 351.8L1105.2 342.1L1102.3 332.7L1099.3 323.3L1096.2 314.2L1092.9 305.2L1089.4 296.5L1085.8 288L1082 279.7L1078.2 271.7L1074.2 263.9L1070.1 256.5L1065.8 249.3L1061.5 242.5L1057.1 236L1052.6 229.8L1048.1 224L1043.4 218.5L1038.8 213.5L1034 208.8L1029.3 204.5L1024.5 200.6L1019.7 197.1L1014.8 194L1014.1 193.6M1090.8 632.1L1095.8 629.7L1100.6 626.8L1105.2 623.6L1109.8 619.9L1114.2 615.8L1118.4 611.4L1122.5 606.5L1126.4 601.3L1130.1 595.7L1133.6 589.7L1137 583.4L1140.1 576.8L1143 569.8L1145.7 562.6L1148.2 555L1150.5 547.2L1152.6 539.1L1154.4 530.7L1156 522.2L1157.4 513.4L1158.5 504.4L1159.4 495.2L1160 485.9L1160.4 476.4L1160.5 466.8L1160.4 457L1160.1 447.2L1159.5 437.3L1158.7 427.4L1157.6 417.4L1156.3 407.4L1154.8 397.4L1153 387.4L1151 377.5L1148.7 367.6L1146.3 357.8L1143.6 348.1L1140.7 338.5L1137.6 329.1L1134.3 319.8L1130.8 310.7L1127.2 301.7L1123.3 293L1119.3 284.5L1115.1 276.2L1110.7 268.1L1106.2 260.4L1101.6 252.9L1096.8 245.7L1091.9 238.8L1086.9 232.3L1081.7 226.1L1076.5 220.2L1071.2 214.7L1065.9 209.5L1060.4 204.8L1054.9 200.4L1049.4 196.4L1043.8 192.8L1038.2 189.7L1032.6 186.9L1032 186.7M1121.7 616.4L1127 613.1L1132.2 609.3L1137.2 605.2L1142.1 600.7L1146.7 595.8L1151.2 590.5L1155.5 584.9L1159.6 578.9L1163.4 572.6L1167.1 565.9L1170.5 558.9L1173.7 551.7L1176.6 544.1L1179.3 536.3L1181.7 528.2L1183.9 519.9L1185.9 511.3L1187.5 502.5L1188.9 493.6L1190.1 484.4L1190.9 475.1L1191.5 465.7L1191.8 456.1L1191.9 446.5L1191.6 436.7L1191.1 426.9L1190.3 417L1189.3 407.1L1188 397.2L1186.4 387.3L1184.5 377.4L1182.4 367.5L1180.1 357.8L1177.4 348.1L1174.6 338.5L1171.5 329L1168.1 319.6L1164.5 310.5L1160.7 301.4L1156.7 292.6L1152.5 284L1148.1 275.6L1143.5 267.4L1138.7 259.5L1133.7 251.9L1128.6 244.5L1123.3 237.5L1117.9 230.7L1112.3 224.3L1106.6 218.2L1100.8 212.5L1094.9 207.1L1088.9 202.1L1082.9 197.4L1076.7 193.2L1070.6 189.3L1064.3 185.9L1058.1 182.8L1051.8 180.2L1047.7 178.7M1153.5 595.1L1159 590.6L1164.3 585.8L1169.4 580.6L1174.2 575L1178.9 569.1L1183.3 562.8L1187.5 556.2L1191.5 549.3L1195.2 542.2L1198.6 534.7L1201.8 526.9L1204.8 518.9L1207.4 510.6L1209.8 502.2L1211.9 493.5L1213.7 484.6L1215.2 475.5L1216.4 466.3L1217.3 457L1217.9 447.5L1218.2 437.9L1218.3 428.2L1218 418.5L1217.4 408.7L1216.5 398.8L1215.4 389L1213.9 379.1L1212.2 369.3L1210.1 359.6L1207.8 349.9L1205.2 340.2L1202.3 330.7L1199.2 321.3L1195.7 312L1192.1 302.9L1188.2 293.9L1184 285.2L1179.6 276.6L1175 268.2L1170.1 260.1L1165.1 252.3L1159.8 244.7L1154.4 237.3L1148.8 230.3L1143 223.6L1137.1 217.2L1131 211.2L1124.8 205.4L1118.5 200.1L1112 195.1L1105.5 190.5L1098.8 186.2L1092.1 182.4L1085.4 178.9L1078.6 175.9L1071.7 173.2L1064.9 171L1060.9 169.9M1187.1 564.6L1192.3 558.7L1197.3 552.5L1202 545.9L1206.5 539.1L1210.7 532L1214.7 524.6L1218.4 516.9L1221.8 508.9L1224.9 500.7L1227.7 492.3L1230.2 483.7L1232.5 474.9L1234.4 465.9L1236 456.7L1237.3 447.4L1238.3 438L1238.9 428.5L1239.3 418.9L1239.3 409.2L1239 399.5L1238.4 389.7L1237.5 379.9L1236.2 370.2L1234.6 360.4L1232.8 350.7L1230.6 341.1L1228.1 331.5L1225.3 322L1222.3 312.7L1218.9 303.4L1215.2 294.4L1211.3 285.5L1207.2 276.7L1202.7 268.2L1198 259.9L1193.1 251.9L1187.9 244L1182.5 236.5L1176.9 229.2L1171.1 222.2L1165.2 215.5L1159 209.2L1152.7 203.1L1146.2 197.4L1139.5 192.1L1132.8 187.1L1125.9 182.5L1118.9 178.3L1111.9 174.4L1104.7 171L1097.5 168L1090.2 165.3L1082.9 163.1L1075.6 161.3L1071.4 160.5M1222.1 518.1L1226.4 510.6L1230.5 502.8L1234.2 494.8L1237.6 486.6L1240.8 478.1L1243.6 469.4L1246.1 460.6L1248.3 451.6L1250.2 442.4L1251.7 433.1L1252.9 423.7L1253.8 414.2L1254.4 404.6L1254.6 394.9L1254.5 385.2L1254.1 375.5L1253.3 365.8L1252.2 356.1L1250.7 346.4L1249 336.8L1246.9 327.2L1244.5 317.7L1241.7 308.3L1238.7 299.1L1235.4 290L1231.7 281L1227.8 272.2L1223.6 263.6L1219.1 255.3L1214.4 247.1L1209.4 239.2L1204.1 231.5L1198.6 224.1L1192.9 217L1186.9 210.2L1180.8 203.6L1174.5 197.4L1167.9 191.6L1161.3 186.1L1154.4 180.9L1147.4 176.1L1140.3 171.7L1133.1 167.6L1125.7 164L1118.3 160.7L1110.8 157.9L1103.2 155.4L1095.6 153.4L1088 151.8L1080.3 150.6L1079.1 150.5M1253.3 446.9L1255.8 437.9L1258 428.7L1259.8 419.4L1261.3 409.9L1262.5 400.4L1263.3 390.9L1263.8 381.2L1263.9 371.5L1263.7 361.8L1263.1 352.2L1262.2 342.5L1261 332.8L1259.4 323.3L1257.5 313.8L1255.3 304.3L1252.7 295L1249.8 285.9L1246.6 276.8L1243.1 268L1239.3 259.3L1235.2 250.8L1230.8 242.5L1226.1 234.4L1221.2 226.6L1216 219.1L1210.5 211.8L1204.8 204.8L1198.9 198.1L1192.7 191.7L1186.4 185.6L1179.8 179.9L1173.1 174.5L1166.1 169.5L1159.1 164.9L1151.9 160.6L1144.5 156.7L1137.1 153.2L1129.5 150.1L1121.9 147.4L1114.1 145.1L1106.4 143.2L1098.6 141.7L1090.7 140.7L1083.7 140.1" fill="none" stroke="#66c3e8" stroke-opacity="0.9" stroke-width="1.1"/>
<use href="#landp" fill="#5d7040"/>
<g clip-path="url(#lc)"><g filter="url(#bl)">
<path d="M687.4 492.9L692.5 489.8L697.6 486.6L702.9 483.3L708.3 480L715 483.8L721.8 487.5L728.7 491.2L735.7 494.8L742.8 502.2L750 509.4L745.4 517.2L741.1 524.9L736.9 532.3L730.1 532.4L723.4 532.5L716.8 532.5L710.3 532.4L703.8 527.1L697.4 521.7L691.2 516.1L689.8 508.5L688.5 500.8Z" fill="#4d6833"/>
<path d="M935.2 500.7L943 499.4L950.9 498L958.7 496.5L966.5 494.9L972.8 496.4L979 497.8L985.2 499.2L991.4 500.5L992.5 508.2L993.5 515.7L994.4 523.2L987.2 526.5L979.9 529.7L972.7 532.9L965.7 530.7L958.7 528.4L951.7 526L944.6 523.5L941.5 516L938.3 508.4Z" fill="#4d6833"/>
<path d="M865.7 480.5L873 482.2L880.3 483.7L887.7 485.3L895.6 486.4L903.5 487.4L911.4 488.4L919.3 489.3L927.2 491.1L935.1 492.8L931.9 486.9L928.7 481L921.9 480.5L915.1 480L908.2 479.4L901.4 478.7L894.6 478L887.7 477.2L880.4 478.4L873 479.5Z" fill="#546d37"/>
<path d="M656.9 220.3L659.7 222.7L662.7 225.1L665.8 227.4L669 229.7L672.3 231.9L675.7 234.2L678.2 237.7L680.8 241.3L683.5 244.9L686.4 248.5L689.5 252L692.6 255.6L695.3 260.1L698.2 264.7L701.3 269.3L704.6 273.9L708 278.5L711.6 283.1L716.6 285L721.7 286.8L726.9 288.5L732.2 290.2L737.6 291.8L743.1 293.4L750.5 289.9L757.9 286.3L753.3 282.7L748.9 279L744.6 275.4L740.5 271.7L736.5 268L732.6 264.4L728.6 261.2L724.8 258L721 254.7L717.5 251.5L714 248.2L710.7 245L707.6 241.7L704.5 238.4L700.9 236.1L697.3 233.8L693.8 231.5L690.5 229.1L687.3 226.7L684.2 224.2L681.1 221.8L678.3 219.3L672.8 219.6L667.4 219.9L662.1 220.1Z" fill="#55693b"/>
<path d="M1161.7 373.5L1166.6 370L1171.4 366.5L1176 362.9L1180.4 359.2L1184 352.6L1187.3 346L1190.2 341.9L1192.9 337.7L1195.6 333.6L1198.1 329.4L1197.7 322.6L1197.2 315.9L1193.9 317.2L1190.4 318.5L1186.9 319.8L1183.3 321.1L1181 326L1178.5 331L1175.9 336L1173.2 340.9L1170.2 345.6L1167.1 350.2L1164 354.8L1163 364.2Z" fill="#5a7139"/>
<path d="M876.1 339.5L880.3 348.5L884.6 357.7L889.2 367L896.4 363.2L903.5 359.3L910.5 355.4L917.5 351.4L924.6 353.1L931.7 354.8L938.8 356.5L945.9 358.1L953.1 359.6L960.3 361L967.5 362.4L974.7 363.7L981.4 360.4L987.9 357L994.4 353.5L1000.8 350L1007.1 346.5L1013.3 342.9L1014.7 332.9L1016 323.1L1017 313.5L1017.8 304.1L1012.9 297.7L1008.1 291.5L1003.3 285.4L998.6 279.4L992 277.1L985.5 274.9L979 272.5L972.6 270.2L967.3 272.4L961.9 274.5L956.4 276.6L950.8 278.6L945.2 280.6L939.4 282.6L933.6 284.5L927.7 286.4L921.9 291.5L916 296.7L909.8 301.9L903.5 307.1L897.1 308.8L890.6 310.5L884.1 312.1L877.5 313.7L877 322.1L876.5 330.7Z" fill="#6b7846"/>
<path d="M990.9 255.5L995.9 254L1000.8 252.4L1005.6 250.7L1010.3 249L1015 247.3L1019.5 245.5L1024 243.7L1028.4 241.9L1032.3 239.4L1036.2 236.8L1039.8 234.3L1043.4 231.7L1046.8 229.2L1050.2 226.6L1053.7 224.4L1057.1 222.2L1060.4 219.9L1063.6 217.6L1066.6 215.4L1069.6 213.1L1073.2 211.4L1076.7 209.8L1080.1 208.1L1083.4 206.4L1086.7 204.6L1089.8 202.8L1092.9 201L1095.9 199.1L1099.1 197.5L1102.2 195.8L1105.3 194.1L1108.2 192.4L1111.1 190.6L1113.9 188.8L1116.5 187L1119.1 185.1L1122 183.4L1124.7 181.7L1127.3 180L1129.9 178.3L1132.3 176.5L1134.7 174.7L1137 172.8L1139.1 171L1141.1 169.1L1143.1 167.2L1144.9 165.3L1146.6 163.3L1148.2 161.4L1149.7 159.4L1151.1 157.4L1152.4 155.4L1154.3 153.7L1156 152.1L1157.7 150.4L1159.2 148.7L1164.9 152L1170.6 155.5L1169.8 157.7L1168.9 159.8L1167.9 161.9L1166.8 164L1165.5 166.1L1164.1 168.1L1162.6 170.2L1161 172.2L1159.2 174.2L1157.3 176.2L1155.3 178.1L1153.3 180.1L1151 182L1148.7 183.9L1146.3 185.8L1143.8 187.6L1141.8 189.9L1139.7 192.2L1137.5 194.5L1135.2 196.8L1132.8 199L1130.3 201.2L1127.7 203.4L1124.9 205.6L1122.1 207.7L1119.1 209.8L1116.1 211.9L1112.9 213.9L1109.7 215.9L1106.3 217.9L1102.9 219.9L1099.4 221.8L1096 224L1092.5 226.1L1089 228.2L1085.3 230.3L1081.6 232.4L1077.7 234.4L1073.7 236.4L1069.7 238.4L1065.6 240.3L1061.3 242.2L1057 244L1052.6 245.8L1048.1 247.6L1043.6 249.3L1038.9 251L1034.2 252.6L1028.9 253.2L1023.6 253.7L1018.2 254.1L1012.8 254.5L1007.3 254.8L1001.9 255.1L996.4 255.3Z" fill="#6c7049"/>
<path d="M877.1 382.7L881.7 375.8L886.2 369L892 368.4L897.8 367.8L903.5 367.2L910.7 366.2L917.8 365.1L924.9 363.9L932 362.7L933.8 370.5L935.5 378.5L931.2 380.7L926.9 382.8L921.1 383L915.2 383.1L909.4 383.2L903.5 383.2L896.1 387.2L888.7 391.1L882.9 386.9Z" fill="#a59a70"/>
<path d="M649.2 160.6L650.9 162.2L652.6 163.7L654.5 165.3L656.4 166.8L658.4 168.3L660.5 169.8L662.7 171.2L665 172.7L666 175.3L667.1 177.9L668.3 180.5L669.7 183.1L671.1 185.6L672.7 188.2L674.8 190.4L677.1 192.6L679.4 194.8L681.9 197L684.5 199.1L687.1 201.2L689.6 203.6L692.2 205.9L694.9 208.2L697.6 210.5L700.5 212.8L703.5 215L706.7 217.2L709.9 219.4L711.3 223.7L712.9 228L714.7 232.4L716.6 236.8L719.3 240.6L722.1 244.4L725.1 248.3L728.3 252.1L732.3 254.8L736.4 257.4L740.7 259.9L745 262.5L749.5 265L754.1 267.5L762.1 262.9L770 258.3L767.1 252.7L764.6 247.3L762.3 241.9L760.2 236.7L757.3 233.1L754.6 229.5L752 226L749.6 222.5L747.4 219.1L745.3 215.7L743.4 212.3L741.7 209L738.4 207.3L735.2 205.5L732.1 203.7L729 201.9L726.1 200L723.2 198.1L720.4 196.2L717.8 194.3L715.2 192.3L712.7 190.3L710.3 188.3L708 186.3L704.7 184.9L701.5 183.5L698.3 182.1L695.2 180.6L692.2 179.1L689.3 177.6L686.5 176L683.7 174.4L681.1 172.8L678.5 171.2L676.1 169.5L673.7 167.8L670.3 166.9L667.1 166.1L663.9 165.2L660.8 164.3L657.7 163.4L654.8 162.5L652 161.5Z" fill="#74704a"/>
<path d="M637.9 167.9L635.6 172L633.5 176.1L631.5 180.4L629.7 184.7L631.4 186.8L633.3 188.9L635.4 190.9L637.5 192.9L639.8 194.9L642.2 196.9L644.7 198.8L647.3 200.7L652 200.8L656.8 201L659.9 194.1L663.2 187.6L662.8 184.3L662.4 181L662.2 177.7L662.2 174.4L660.3 172.5L658.5 170.6L656.9 168.7L655.3 166.7L653.8 164.8L648.4 165.7L643.1 166.8Z" fill="#7a7552"/>

<path d="M619 274.9L623.3 268.1L627.8 261.4L632.4 254.8L640.3 250.3L648.3 245.8L654 244.5L659.7 243.2L665.5 241.9L666.8 245.9L668.3 249.9L669.8 253.9L671.5 257.9L670.3 265.2L669.2 272.7L668.4 280.3L666.1 287.6L664 295.2L662 302.8L659.3 310.1L656.7 317.6L654.2 325.1L651.9 332.8L646.9 341.3L642.2 349.9L637.1 348.4L632.1 346.7L627.3 345L622.5 343.3L620.1 335.6L617.9 328L615.9 320.4L615.6 308.4L615.7 296.6L617.2 285.6Z" fill="#b3a684"/>
<path d="M665.5 241.9L668.4 244.6L671.4 247.3L674.6 250L677.8 252.7L681.1 255.3L684.5 257.9L684.9 265.1L685.6 272.4L686.5 279.9L687.7 287.4L685.3 295.9L683.1 304.6L681.2 313.4L675.6 319.8L670.2 326.3L664.8 332.8L659.9 333L655.1 333L656.7 323.8L658.7 314.8L660.8 305.9L663.1 297.2L665.7 288.6L668.4 280.3L667.2 272.3L666.3 264.5L665.8 256.8L665.5 249.3Z" fill="#8d8a62"/>
<path d="M622.5 342.8L627.2 344.4L632.1 346L637.1 347.6L642.2 349.1L642.5 356.3L643 363.7L642 373L641.1 382.4L643.8 389.2L646.7 395.9L641.8 391.4L637 386.9L632.4 382.3L627.9 377.7L626.2 367.9L624.7 358.1L623.5 350.4Z" fill="#9c9270"/>
<path d="M850.5 459.3L857.7 459.1L865 458.8L872.3 458.4L880 459.7L887.8 460.9L895.7 462.1L903.5 463.1L911.3 463.6L919.2 464L927 464.3L934.8 464.5L942.6 464.2L950.4 463.8L958.2 463.3L965.9 462.7L973.6 461.6L981.3 460.4L988.9 459L996.5 457.7L1002.4 454.2L1008.2 450.7L1014 447.1L1017.4 453.8L1020.8 460.5L1014.9 462.9L1008.9 465.3L1003 467.6L996.9 469.9L989.3 471.7L981.7 473.5L974 475.3L966.3 476.9L958.5 477L950.7 477L942.8 476.9L935 476.7L927.1 476.5L919.3 476.2L911.4 475.8L903.5 475.3L895.6 474.8L887.8 474.2L879.9 473.5L872.1 472.7L865.8 471.1L859.6 469.4L853.4 467.7Z" fill="#8a8858"/>
<path d="M1019.6 311.1L1020.5 303.2L1021.3 295.4L1025.8 293L1030.3 290.6L1034.6 288.1L1038.9 285.6L1043 283.1L1047.8 282.1L1052.6 281L1057.3 279.9L1061.9 278.8L1066.5 277.6L1071.1 276.4L1076.2 275.9L1081.3 275.4L1086.3 274.8L1091.3 274.2L1096.3 273.5L1100.7 272.6L1105.2 271.7L1109.5 270.7L1113.8 269.7L1114.6 275.3L1110.9 276.9L1107.1 278.5L1103.3 280.1L1099.4 281.6L1094.9 283L1090.3 284.2L1085.6 285.5L1080.9 286.7L1076.2 287.8L1071.6 289.3L1066.9 290.7L1062.2 292L1057.4 293.3L1052.6 294.6L1047.7 295.8L1042.2 298.1L1036.7 300.2L1031.1 302.4L1025.4 304.5L1022.5 307.8Z" fill="#a49b74"/>
<path d="M850.5 459.3L857.7 459.1L865 458.8L872.3 458.4L880 459.7L887.8 460.9L895.7 462.1L903.5 463.1L911.3 463.6L919.2 464L927 464.3L934.8 464.5L942.6 464.2L950.4 463.8L958.2 463.3L965.9 462.7L973.6 461.6L981.3 460.4L988.9 459L996.5 457.7L1002.4 454.2L1008.2 450.7L1014 447.1L1018.7 449.5L1023.3 451.9L1027.9 455.3L1032.6 458.6L1039.2 458.5L1045.8 458.3L1052.3 458L1058.8 457.7L1059.8 451.3L1060.8 444.9L1055 444.1L1049.2 443.2L1055.4 437.8L1061.6 432.3L1067.7 426.8L1073.3 415L1078.6 403.2L1080.3 396.4L1081.9 389.7L1088.4 387.9L1094.7 386.1L1100.1 386.6L1105.5 387.1L1106.8 380.3L1107.9 373.5L1109 366.8L1110 360.1L1113.7 359.9L1117.4 359.6L1122.3 358.9L1127 358.2L1131.9 358.2L1136.8 358.2L1141.6 358.1L1146.3 358L1150.7 353.8L1154.9 349.6L1159 345.4L1156.3 336.6L1157.7 325.2L1158.8 314L1162.8 311L1166.8 307.9L1170.6 304.8L1174.3 301.6L1175.4 295.2L1176.3 288.9L1177 282.7L1177.6 276.5L1174.5 268.6L1171.2 260.9L1165 257.9L1158.8 254.9L1155.2 256.4L1151.6 257.9L1148 259.4L1144.2 260.9L1140.4 262.3L1136.3 263.9L1132.2 265.4L1127.9 266.9L1123.6 268.4L1119.2 269.9L1114.7 271.3L1110.6 273.1L1106.4 274.9L1102.1 276.6L1097.8 278.3L1093.3 279.7L1088.7 280.9L1084.1 282.2L1079.5 283.4L1074.7 284.5L1070.2 285.9L1065.5 287.3L1060.9 288.6L1056.1 290L1051.3 291.2L1046.5 292.4L1041.2 295.1L1035.9 297.7L1030.5 300.2L1024.9 302.7L1023.3 310.4L1021.4 318.3L1023.1 325.6L1024.7 333.1L1029.4 336.1L1034.1 339.2L1031.2 344.7L1028.2 350.2L1021.8 352.4L1015.3 354.5L1010.1 356.3L1004.8 358.1L1004.4 365.1L1004 372.3L1000.3 376.8L996.5 381.4L989.8 381.5L983.1 381.6L976.4 381.6L969.4 384.3L962.3 387L954.8 385.5L947.5 383.9L940 381.3L932.6 378.6L926.7 374.8L920.9 374.9L915.1 375.1L909.3 375.1L902.5 377.8L895.7 380.5L888.8 383L882.8 389L876.8 394.9L870.7 398.7L864.6 402.5L859.7 412.5L854.8 422.5L853.6 431.7L852.5 441L851.5 450.2Z" fill="#cdb995"/>
<path d="M863.6 431.3L870.2 432.3L876.8 433.2L883.5 434.1L890.1 434.9L896.8 435.7L903.5 436.4L911.2 436.4L918.9 436.3L926.6 436.1L934.3 435.8L942 435.5L949.7 435.1L956.3 434.6L962.9 434.2L969.5 433.6L976 433.1L982.5 432.4L989 431.7L996.1 424.7L1003 417.6L1002.3 409.4L1001.5 401.3L1000.7 393.1L994.8 391.9L988.8 390.5L982.9 389.1L976.9 387.7L970.6 388.3L964.3 388.8L958 389.3L951.7 389.7L945.3 390.1L939 390.4L931.9 390.7L924.8 391L917.7 391.1L910.6 391.2L903.5 391.3L897.6 394.3L891.6 397.3L885.6 400.2L879.5 403.1L873.4 409.1L867.1 415L865.4 423.1Z" fill="#d9c39f"/>
<path d="M1008.8 387.9L1012.7 397L1016.6 406L1020.4 415.1L1027.1 424.4L1033.8 433.7L1041.3 436.4L1048.8 439.1L1055.1 433.7L1061.2 428.2L1067.2 422.7L1070.4 413.6L1073.3 404.5L1067.6 403.1L1061.8 401.7L1056 400.2L1049.3 393.2L1042.7 386.3L1036.3 381.3L1029.9 376.3L1022.8 375.5L1015.6 374.6L1012.3 381.3Z" fill="#d6bd97"/>
<path d="M1096.3 311.1L1101.7 309.7L1107 308.2L1112.2 306.6L1117.4 305.1L1122.4 303.4L1127.4 301.8L1133.9 305.5L1140.2 309.3L1146.5 313.1L1152.7 316.9L1158.9 320.7L1158.6 329.4L1158.2 338.2L1157.5 347.1L1152.6 348.7L1147.7 350.2L1142.6 351.8L1137.5 353.2L1132.3 354.7L1127 356.1L1120.9 354.1L1114.9 352L1108.7 350L1102.5 347.8L1096.3 345.7L1096.6 336.8L1096.7 328.1L1096.6 319.5Z" fill="#cbc0a8"/>
<path d="M975.7 347.8L980.8 344.4L985.8 340.9L992.5 340.5L999.2 340.1L1005.9 339.6L1012.6 339.1L1018.5 342L1024.5 344.9L1020 349.7L1015.3 354.5L1008.7 356L1001.9 357.5L995.2 358.9L988.4 360.2L984.1 359.7L979.8 359.2L977.8 353.5Z" fill="#a49a72"/>
<path d="M1098 389.4L1105.3 393.5L1112.5 397.5L1116.5 405.8L1120.2 414L1123.8 422.2L1127.3 430.4L1130.5 425.1L1133.7 419.7L1135.8 410.5L1137.7 401.3L1139.4 392L1142.4 382.2L1145.1 372.4L1139.8 370.3L1134.4 368.2L1129 366L1123.5 363.8L1118.4 363.5L1113.3 363.2L1108.1 362.9L1102.8 362.5L1101.4 371.4L1099.8 380.4Z" fill="#9a9266"/>
<path d="M1029.5 451.7L1036.9 452.3L1044.1 452.8L1051.4 453.3L1058.6 453.6L1058.7 455.3L1055.2 465.4L1051.7 475.6L1047.9 485.6L1044.1 495.4L1039.4 504.1L1034.6 512.6L1029.7 520.9L1023.6 518.5L1017.5 516L1011.3 513.5L1014.2 505.5L1017 497.4L1019.8 489.2L1022.4 480.9L1024.9 471.3L1027.3 461.5Z" fill="#bba17c"/>
<path d="M1009.6 490.3L1016.7 490.7L1023.7 490.9L1030.7 491.1L1030.8 500.9L1030.8 510.5L1028.7 518.5L1026.5 526.3L1024.2 534L1016.8 535.1L1009.3 536.1L1007.5 529.1L1005.6 521.8L1003.7 514.5L1005.7 506.5L1007.7 498.5Z" fill="#8f8762"/>
<path d="M942.1 568.2L948.5 567.3L954.9 566.4L961.3 565.5L967.7 564.5L974.3 564.7L980.9 564.8L987.4 564.9L993.8 564.9L1000.3 564.8L1004.1 572.2L1007.8 579.3L1002.9 586.8L998 594.1L993.1 601.1L985.9 608.6L978.6 615.6L973.1 616.6L967.6 617.5L962.1 618.4L956.6 619.3L954 613.4L951.4 607.1L948.6 600.6L945.7 593.7L944.8 587.6L943.9 581.3L943 574.8Z" fill="#8c8a60"/>
<path d="M946.3 586.1L952.2 588.8L958.1 591.5L963.9 594L969.2 600.8L974.3 607.2L970.8 612.8L967.3 618.2L961.5 618.7L955.8 619.1L953.5 612.9L951.1 606.3L949.6 599.9L948 593.1Z" fill="#ab9a76"/>
<path d="M1036.7 562.9L1042.9 556.8L1049.2 550.6L1054.1 556.3L1051.2 564.2L1048.1 571.9L1044.9 579.3L1041.7 586.5L1038 584.3L1034.3 582.1L1035.1 575.9L1036 569.5Z" fill="#8e8558"/>
<path d="M668.9 490.5L671.7 500.7L674.8 510.6L678 520.4L684.8 528.6L691.8 536.5L698.8 544.3L704.8 549.5L710.9 554.5L717 559.5L718.3 566.5L719.7 573.3L721.2 579.9L722.8 586.2L725.7 592.6L728.7 598.7L731.8 604.6L734.9 610.2L739.4 613.2L743.8 616.2L742.2 619.9L740.9 623.4L739.8 626.5L738.9 629.4L738.3 632L738 634.3L737.3 636L736.9 637.4L731.8 634.2L726.8 630.6L721.7 626.8L719.8 623.5L718.1 619.8L716.6 615.9L715.2 611.6L714 607.1L712.9 602.3L712 597.2L711.3 591.9L710.8 586.3L708.4 579.9L706.2 573.3L704 566.4L702 559.3L695.9 552.5L689.9 545.6L684 538.5L677.9 530.7L671.9 522.7L666.1 514.6L666.8 506.7L667.8 498.7Z" fill="#aa9a74"/>
<path d="M733.7 611.3L735.1 616.6L736.7 621.5L736.3 625.4L736.1 628.9L738.3 632.7L740.7 636L735.8 634L730.9 632L727.3 628.1L723.8 623.8L720.5 619L717.3 613.9L717.9 610.6L718.7 607L719.6 603.1L723.9 603.3L728.3 603.4L731 607.4Z" fill="#b5a27c"/>
<path d="M759 514.3L765.5 516.8L772 519.3L778.5 521.8L785.1 524.2L791.7 526.5L790.1 534.2L788.6 541.7L787.1 549L785.8 556.2L779.8 558.4L773.8 560.5L768 562.5L761.9 553.6L755.9 544.4L756.5 537.1L757.2 529.6L758.1 522Z" fill="#8a8a5c"/>
<path d="M1197.8 518.5L1202.7 511.9L1206.8 507.4L1210.8 502.9L1214.4 494.5L1217.6 487.7L1220.7 480.8L1222.7 479.7L1224.6 478.6L1226.7 476.3L1228.3 471L1229.8 465.6L1232.9 460.2L1234.9 458.8L1236.8 457.5L1235.6 463L1234.4 468.4L1235.6 470.6L1236.6 472.9L1239.6 463.5L1242.3 454L1244.7 444.2L1244.2 449.6L1243.6 455L1244.2 458.1L1243.1 463.8L1241.9 469.3L1242.1 471.1L1242.1 472.8L1241.4 476.1L1240.6 479.5L1239.3 484L1237.6 488.2L1235.8 492.4L1233 498.3L1230 504.1L1225.7 511.9L1223.6 515.6L1222.1 518.1L1218.1 524.6L1214 530.8L1212 533.6L1210.7 535.3L1209.4 537L1210.1 535.3L1210.8 533.5L1210.4 533.3L1211.4 529.8L1210.7 529.7L1209.9 529.5L1207 532.7L1204 535.8L1201 538.9L1196.5 545.3L1193.4 548.4L1190.2 551.5L1186.9 554.5L1185.2 555.2L1183.4 555.8L1188 548.3L1189.8 543.2L1191.3 538L1192.7 531.3L1195.3 525Z" fill="#c0966a"/>
<path d="M761.7 254.5L758.3 253.5L754.9 252.5L752.3 251.2L749.7 249.9L746.6 247L743.6 244.2L740.8 241.3L744.8 241.1L748.8 240.8L754.9 235L752 232L749.3 229L746.7 226L743.6 224L740.5 222L737.5 220L734.6 218L741.3 216.6L748 215.1L750.8 217.2L753.8 219.3L756.9 221.4L758.8 223.8L760.7 226.1L762.7 228.5L764.9 230.7L767.1 232.8L766.4 237L769.8 240.3L773.3 243.5L769.9 245.6L762.8 248.4Z" fill="#b3ab98"/>
<path d="M801.2 272.2L797.4 269.6L793.7 267L791.7 261.4L789.8 256L789.1 248.9L790.6 244.8L792.1 240.8L792.9 235.4L792.7 230.6L792.6 226.1L789.7 224.4L786.8 222.7L784.1 221L781.4 219.2L778.5 217.1L775.6 215L772.9 212.8L779 211.7L785.1 210.6L788.8 210.9L792.5 211.1L796.3 211.2L800 211.4L804.1 212.2L808.2 212.9L812.4 213.6L816.6 214.3L820.9 214.9L825.1 215.5L828.9 215.9L832.6 216.2L836.4 216.6L840.2 216.9L843.9 217.2L847.7 217.4L851.6 218.5L855.5 219.5L859.4 220.5L863.5 221.4L867.5 222.3L871 222.8L874.6 223.3L878.1 223.8L881.7 224.2L877.5 227L873.2 229.9L868.7 233L865.5 238.6L861.4 243.2L857.2 248L853.5 250.4L849.7 252.8L844.7 252.7L839.7 252.6L834.6 252.5L830.1 254.1L825.6 255.8L820.9 257.5L816 260.6L811 263.8L804.1 270.5ZM759.4 212L755.4 210.8L751.5 209.6L747.7 208.4L743.9 207.1L743.5 204.7L743.1 202.5L749.2 201.8L755.3 201.1L759.1 201.4L762.9 201.7L766.6 202L770.5 202.8L774.4 203.6L778.3 204.4L782.2 205.1L786.2 205.8L789.3 207L792.4 208.2L795.6 209.3L798.9 210.5L794.5 210.5L790.1 210.6L785.6 210.6L781.2 210.6L776 210.7L770.8 210.9L767.1 211.5L763.4 212.1ZM755.5 216L751.6 214.6L747.9 213.1L744.2 211.6L740.6 210L740 206.8L743.9 208L747.9 209.1L751.9 210.2L756 211.3ZM724.4 198.8L721.8 197.3L719.3 195.7L716.8 194.2L714.4 192.6L712 191L709.7 189.4L713.3 189.3L716.8 189.1L719.2 191.1L721.6 193.1L724.2 195.1L726.8 197ZM699.4 196.6L697.2 195L695.1 193.4L693.1 191.8L691.1 190.2L697.8 185.7L700.1 187.1L702.4 188.5L704.7 189.8L707.1 191.1L703.2 193.8ZM924.5 231.5L929.5 232.6L934.6 233.7L938.5 232L942.3 230.3L946.1 228.5L949.7 226.8L953.3 225.1L949.1 225.3L945 225.4L940.8 225.5L936.6 225.5L932.2 226.5L927.7 227.5L923.2 228.4ZM1064.2 199.5L1067.5 198.1L1070.7 196.7L1073.9 195.3L1077 193.9L1080 192.4L1074.8 192.4L1069.7 192.4L1064.5 192.3L1064.5 195.8ZM714.4 214.8L710.4 213.5L706.5 212.2L703.9 210.7L701.3 209.1L698.8 207.5L696.4 205.9L695.6 202.5L695 199.2L698.3 195.8L702.9 196.4L707.6 196.9L709.9 198.4L712.3 199.9L714.7 201.3L717.2 202.8L717.3 205.4L717.4 208ZM731.3 214.9L728.9 213.1L726.7 211.2L724.5 209.3L722.4 207.4L728.5 205.8L731.2 207.1L733.9 208.4L736.7 209.7L739.6 211ZM1009.1 237.9L1013.1 237.5L1017.1 237L1021 236.5L1023.3 232.6L1025.3 228.8L1027.2 225L1028.9 221.4L1030.5 217.8L1026.9 218.4L1023.4 219L1019.8 219.6L1017.9 222.3L1015.8 225.1L1013.6 227.9L1011.3 230.7L1010.2 234.2ZM732.1 204.5L729.5 202.6L726.9 200.7L724.4 198.8L730.5 197.5L732.6 199.1L734.7 200.7L736.9 202.4ZM736.3 214.1L732.7 212.5L729.2 210.8L731.2 207.1L733.9 208.4L736.7 209.7L739.6 211ZM755.9 204L752.5 202.9L749.2 201.8L746 200.6L742.8 199.5L746.1 195.6L748.9 196.6L751.7 197.6L754.6 198.5L757.5 199.5Z" fill="#eef1f1"/>
<path d="M852.5 266L850 261.3L855 258.9L860.1 259.3L865.2 259.7L870.3 260L873.1 264.5L869.5 266.6L865.3 267.6L861.2 268.5L856.8 267.2Z" fill="#a9a28c"/>
<path d="M649.8 203.7L652.8 205.2L655.8 206.6L658.9 208.1L656.8 214.1L654.9 220.3L653.3 226.6L651.5 234.4L650.1 242.5L648.9 250.8L647.9 256.9L647.1 263.2L642.3 264.4L637.5 265.6L638.1 256.6L639 247.8L640.2 239.3L641.8 231L642.7 225.2L643.8 219.6L645.1 214.1L647.4 208.8Z" fill="#c2b69c"/>
</g></g>
<path d="M928.5 298L933.6 298.8L938.7 299.2L944.2 298.1L949.7 296.8L955.6 294.7L954.6 287.4L958.2 287.4L961.9 287.4L959.5 280.4L964.6 279.3L969.7 278.1L974.1 276.3L968.2 276.5L962.3 276.6L958.9 277.5L955.5 278.2L953.6 273.7L956.1 268.4L958.5 263.2L960.2 261L956.3 260.9L952.4 260.9L951.1 266.3L948.1 268.8L945.1 271.3L943.9 276L947.5 280.5L943.8 288.8L940.5 292.4L935.7 294.3L934.4 292.7L929.4 292.9ZM983.2 342.4L988.7 342.1L993.8 339.7L998.8 337.3L1003 338.6L1007.3 339.9L1011.7 338.2L1016.1 336.6L1015.4 332.8L1007.4 326.4L1001.9 325.3L1000.5 324.4L996.8 326.1L993.2 328.5L990 325.1L985.5 321.9L984.7 322L982.6 326.8L981 333.8L980.1 339.6ZM1027.7 322.9L1032 314.4L1035.1 311.8L1040.4 312.6L1041.9 318L1038.8 322.5L1043.6 329.3L1048.3 332.2L1048.4 338.1L1048.5 344.1L1051.6 346.2L1045.8 350L1040 348L1037.9 344.4L1037.7 337.6L1033.6 331.4L1030.2 328.1ZM683.1 284.6L687.7 286.9L692.4 289.2L697.2 291.5L699.3 284.3L695.5 282.7L691.7 281.1L687.4 282.8ZM683 305.3L686.4 305.6L690 299.8L693.7 294.1L691.5 291.1L687.2 298.2ZM693.2 303.4L697.1 305.7L704.1 300.2L703.8 295.2L700.1 294.2L696.4 293.2L694.8 298.2ZM692.1 309.1L697.4 309.5L702.7 309.8L703.3 308.1L698.6 307.7L694 307.4ZM1055.6 316.7L1056.1 310L1060.5 309.6L1061.9 316.3L1058.8 318.6ZM980.6 261.5L986.6 262.8L990.1 261.2L993.5 259.6L989.9 255.7L986 255.6L982.1 255.4L978.9 255.9L975.7 256.3Z" fill="#228db3"/>
<path d="M689.8 191.1L691 194.1L692.3 197.1L694.8 199.3L697.4 201.5L700.1 203.7L702.9 205.8L705.8 207.9L708.8 210L713 211.1L717.2 212.1L721.5 213.1L725.9 214L729.6 215.2L733.4 216.4L737.2 217.6L739.7 219.4L742.3 221.2L744.9 223L747.7 224.8L749.7 227.6L751.8 230.4L754 233.2L756 236.5L758.1 239.9L760.3 243.3L762.7 246.7L768 245.1L773.3 243.5L771 238.4L768.9 233.3L767 229.9L765.3 226.5L763.8 223.2L762.4 219.9L762.8 215.9L763.4 212.1L767.9 211.8L772.3 211.4L776.7 211L781.2 210.6L785.1 210.6L789 210.6L793 210.6L796.9 210.6L793.6 209.4L790.4 208.2L787.3 207L784.2 205.8L781.2 204.5L778.2 203.3L775.3 202L772.4 200.6L768.5 199.7L764.7 198.8L760.9 197.8L757.1 196.8L753.4 195.7L749.7 194.6L746.1 193.5L742.5 192.3L738.4 191.5L734.3 190.6L730.2 189.7L726.2 188.8L722.3 187.8L718.3 186.8L714.5 185.8L710.7 184.7L706.1 184.8L701.5 184.8L696.9 184.9L693.3 187.9Z" fill="#e4e8e6" opacity="0.72" filter="url(#bl2)"/>
<path d="M694.7 621.6L697.7 623.2L700.9 624.8L704.1 626.4L707.4 627.9L710.7 629.4L714.1 630.9L717.6 632.3L721.1 633.8L724.6 635.2L728.3 636.5L731.9 637.9L735.7 639.2L739.4 640.5L743.3 641.8L747.1 643L751.1 644.2L755 645.3L759 646.5L763.1 647.6L767.2 648.7L771.3 649.7L775.5 650.7L779.7 651.7L784 652.6L788.3 653.5L792.6 654.4L797 655.3L801.4 656.1L805.8 656.8L810.3 657.6L814.7 658.3L819.3 659L823.8 659.6L828.4 660.2L832.9 660.8L837.5 661.3L842.2 661.8L846.8 662.2L851.5 662.7L856.2 663.1L860.9 663.4L865.6 663.7L870.3 664L875 664.2L879.7 664.4L884.5 664.6L889.2 664.7L894 664.8L898.7 664.9L903.5 664.9L908.3 664.9L913 664.8L917.8 664.7L922.5 664.6L927.3 664.4L932 664.2L936.7 664L941.4 663.7L946.1 663.4L950.8 663.1L955.5 662.7L960.2 662.2L964.8 661.8L969.5 661.3L974.1 660.8L978.6 660.2L983.2 659.6L987.7 659L992.3 658.3L996.7 657.6L1001.2 656.8L1005.6 656.1L1010 655.3L1014.4 654.4L1018.7 653.5L1023 652.6L1027.3 651.7L1031.5 650.7L1035.7 649.7L1039.8 648.7L1043.9 647.6L1048 646.5L1052 645.3L1055.9 644.2L1059.9 643L1063.7 641.8L1067.6 640.5L1071.3 639.2L1075.1 637.9L1078.7 636.5L1082.4 635.2L1085.9 633.8L1089.4 632.3L1092.9 630.9L1096.3 629.4L1099.6 627.9L1102.9 626.4L1106.1 624.8L1109.3 623.2L1112.3 621.6M615.8 560.1L617.9 562.3L620.1 564.5L622.3 566.7L624.6 568.9L627.1 571.1L629.6 573.2L632.1 575.3L634.8 577.4L637.5 579.5L640.4 581.5L643.3 583.6L646.3 585.6L649.3 587.5L652.5 589.5L655.7 591.4L659 593.4L662.4 595.2L665.8 597.1L669.3 598.9L672.9 600.7L676.6 602.5L680.3 604.2L684.1 606L688 607.6L691.9 609.3L695.9 610.9L699.9 612.5L704.1 614.1L708.2 615.6L712.5 617.1L716.8 618.6L721.1 620L725.5 621.4L730 622.8L734.5 624.1L739.1 625.4L743.7 626.7L748.4 627.9L753.1 629.1L757.8 630.2L762.6 631.3L767.5 632.4L772.4 633.4L777.3 634.4L782.3 635.4L787.3 636.3L792.3 637.2L797.4 638L802.5 638.8L807.6 639.6L812.8 640.3L818 641L823.2 641.7L828.4 642.3L833.7 642.8L839 643.3L844.3 643.8L849.6 644.3L855 644.7L860.3 645L865.7 645.3L871.1 645.6L876.5 645.8L881.9 646L887.3 646.2L892.7 646.3L898.1 646.3L903.5 646.4L908.9 646.3L914.3 646.3L919.7 646.2L925.1 646L930.5 645.8L935.9 645.6L941.3 645.3L946.7 645L952 644.7L957.4 644.3L962.7 643.8L968 643.3L973.3 642.8L978.6 642.3L983.8 641.7L989 641L994.2 640.3L999.4 639.6L1004.5 638.8L1009.6 638L1014.7 637.2L1019.7 636.3L1024.7 635.4L1029.7 634.4L1034.6 633.4L1039.5 632.4L1044.4 631.3L1049.2 630.2L1053.9 629.1L1058.6 627.9L1063.3 626.7L1067.9 625.4L1072.5 624.1L1077 622.8L1081.5 621.4L1085.9 620L1090.2 618.6L1094.5 617.1L1098.8 615.6L1102.9 614.1L1107.1 612.5L1111.1 610.9L1115.1 609.3L1119 607.6L1122.9 606L1126.7 604.2L1130.4 602.5L1134.1 600.7L1137.7 598.9L1141.2 597.1L1144.6 595.2L1148 593.4L1151.3 591.4L1154.5 589.5L1157.7 587.5L1160.7 585.6L1163.7 583.6L1166.6 581.5L1169.5 579.5L1172.2 577.4L1174.9 575.3L1177.4 573.2L1179.9 571.1L1182.4 568.9L1184.7 566.7L1186.9 564.5L1189.1 562.3L1191.2 560.1M573 496.4L574.4 498.9L575.9 501.5L577.5 504L579.2 506.6L580.9 509.1L582.8 511.6L584.8 514L586.9 516.5L589 518.9L591.3 521.4L593.7 523.8L596.1 526.2L598.7 528.6L601.3 530.9L604 533.2L606.9 535.6L609.8 537.9L612.8 540.1L615.9 542.4L619.1 544.6L622.3 546.8L625.7 548.9L629.1 551.1L632.6 553.2L636.2 555.3L639.9 557.3L643.7 559.4L647.5 561.4L651.5 563.3L655.5 565.3L659.5 567.2L663.7 569.1L667.9 570.9L672.2 572.7L676.6 574.5L681 576.2L685.5 578L690.1 579.6L694.7 581.3L699.4 582.9L704.2 584.4L709 586L713.8 587.5L718.8 588.9L723.8 590.3L728.8 591.7L733.9 593L739.1 594.3L744.3 595.6L749.5 596.8L754.8 598L760.2 599.1L765.6 600.2L771 601.2L776.5 602.2L782 603.2L787.5 604.1L793.1 605L798.7 605.8L804.3 606.6L810 607.4L815.7 608.1L821.5 608.7L827.2 609.4L833 609.9L838.8 610.5L844.6 610.9L850.4 611.4L856.3 611.8L862.2 612.1L868 612.4L873.9 612.7L879.8 612.9L885.8 613L891.7 613.1L897.6 613.2L903.5 613.2L909.4 613.2L915.3 613.1L921.2 613L927.2 612.9L933.1 612.7L939 612.4L944.8 612.1L950.7 611.8L956.6 611.4L962.4 610.9L968.2 610.5L974 609.9L979.8 609.4L985.5 608.7L991.3 608.1L997 607.4L1002.7 606.6L1008.3 605.8L1013.9 605L1019.5 604.1L1025 603.2L1030.5 602.2L1036 601.2L1041.4 600.2L1046.8 599.1L1052.2 598L1057.5 596.8L1062.7 595.6L1067.9 594.3L1073.1 593L1078.2 591.7L1083.2 590.3L1088.2 588.9L1093.2 587.5L1098 586L1102.8 584.4L1107.6 582.9L1112.3 581.3L1116.9 579.6L1121.5 578L1126 576.2L1130.4 574.5L1134.8 572.7L1139.1 570.9L1143.3 569.1L1147.5 567.2L1151.5 565.3L1155.5 563.3L1159.5 561.4L1163.3 559.4L1167.1 557.3L1170.8 555.3L1174.4 553.2L1177.9 551.1L1181.3 548.9L1184.7 546.8L1187.9 544.6L1191.1 542.4L1194.2 540.1L1197.2 537.9L1200.1 535.6L1203 533.2L1205.7 530.9L1208.3 528.6L1210.9 526.2L1213.3 523.8L1215.7 521.4L1218 518.9L1220.1 516.5L1222.2 514L1224.2 511.6L1226.1 509.1L1227.8 506.6L1229.5 504L1231.1 501.5L1232.6 498.9L1234 496.4M548.2 425.5L548.9 428.3L549.7 431L550.6 433.8L551.6 436.5L552.8 439.3L554 442L555.4 444.7L556.8 447.4L558.4 450.1L560 452.7L561.8 455.4L563.7 458L565.7 460.7L567.7 463.3L569.9 465.9L572.2 468.4L574.6 471L577.1 473.5L579.7 476.1L582.4 478.6L585.1 481L588 483.5L591 485.9L594.1 488.4L597.2 490.7L600.5 493.1L603.8 495.4L607.3 497.8L610.8 500L614.4 502.3L618.1 504.5L621.9 506.7L625.8 508.9L629.8 511L633.8 513.1L638 515.2L642.2 517.3L646.5 519.3L650.8 521.2L655.3 523.2L659.8 525.1L664.4 527L669.1 528.8L673.8 530.6L678.6 532.4L683.5 534.1L688.5 535.8L693.5 537.4L698.6 539L703.7 540.6L708.9 542.1L714.2 543.6L719.5 545.1L724.8 546.5L730.3 547.9L735.8 549.2L741.3 550.5L746.9 551.7L752.5 552.9L758.2 554L763.9 555.1L769.7 556.2L775.5 557.2L781.3 558.2L787.2 559.1L793.1 560L799 560.8L805 561.6L811 562.4L817.1 563L823.1 563.7L829.2 564.3L835.3 564.8L841.5 565.4L847.6 565.8L853.8 566.2L860 566.6L866.2 566.9L872.4 567.2L878.6 567.4L884.8 567.5L891 567.7L897.3 567.7L903.5 567.8L909.7 567.7L916 567.7L922.2 567.5L928.4 567.4L934.6 567.2L940.8 566.9L947 566.6L953.2 566.2L959.4 565.8L965.5 565.4L971.7 564.8L977.8 564.3L983.9 563.7L989.9 563L996 562.4L1002 561.6L1008 560.8L1013.9 560L1019.8 559.1L1025.7 558.2L1031.5 557.2L1037.3 556.2L1043.1 555.1L1048.8 554L1054.5 552.9L1060.1 551.7L1065.7 550.5L1071.2 549.2L1076.7 547.9L1082.2 546.5L1087.5 545.1L1092.8 543.6L1098.1 542.1L1103.3 540.6L1108.4 539L1113.5 537.4L1118.5 535.8L1123.5 534.1L1128.4 532.4L1133.2 530.6L1137.9 528.8L1142.6 527L1147.2 525.1L1151.7 523.2L1156.2 521.2L1160.5 519.3L1164.8 517.3L1169 515.2L1173.2 513.1L1177.2 511L1181.2 508.9L1185.1 506.7L1188.9 504.5L1192.6 502.3L1196.2 500L1199.7 497.8L1203.2 495.4L1206.5 493.1L1209.8 490.7L1212.9 488.4L1216 485.9L1219 483.5L1221.9 481L1224.6 478.6L1227.3 476.1L1229.9 473.5L1232.4 471L1234.8 468.4L1237.1 465.9L1239.3 463.3L1241.3 460.7L1243.3 458L1245.2 455.4L1247 452.7L1248.6 450.1L1250.2 447.4L1251.6 444.7L1253 442L1254.2 439.3L1255.4 436.5L1256.4 433.8L1257.3 431L1258.1 428.3L1258.8 425.5M546.2 294.1L546.2 296.8L546.4 299.6L546.7 302.4L547.1 305.1L547.6 307.9L548.2 310.7L548.9 313.4L549.7 316.2L550.6 318.9L551.6 321.6L552.8 324.4L554 327.1L555.4 329.8L556.8 332.5L558.4 335.2L560 337.8L561.8 340.5L563.7 343.1L565.7 345.8L567.7 348.4L569.9 351L572.2 353.5L574.6 356.1L577.1 358.7L579.7 361.2L582.4 363.7L585.1 366.2L588 368.6L591 371.1L594.1 373.5L597.2 375.9L600.5 378.2L603.8 380.6L607.3 382.9L610.8 385.1L614.4 387.4L618.1 389.6L621.9 391.8L625.8 394L629.8 396.1L633.8 398.2L638 400.3L642.2 402.4L646.5 404.4L650.8 406.4L655.3 408.3L659.8 410.2L664.4 412.1L669.1 413.9L673.8 415.7L678.6 417.5L683.5 419.2L688.5 420.9L693.5 422.5L698.6 424.1L703.7 425.7L708.9 427.2L714.2 428.7L719.5 430.2L724.8 431.6L730.3 433L735.8 434.3L741.3 435.6L746.9 436.8L752.5 438L758.2 439.1L763.9 440.2L769.7 441.3L775.5 442.3L781.3 443.3L787.2 444.2L793.1 445.1L799 445.9L805 446.7L811 447.5L817.1 448.2L823.1 448.8L829.2 449.4L835.3 450L841.5 450.5L847.6 450.9L853.8 451.3L860 451.7L866.2 452L872.4 452.3L878.6 452.5L884.8 452.7L891 452.8L897.3 452.8L903.5 452.9L909.7 452.8L916 452.8L922.2 452.7L928.4 452.5L934.6 452.3L940.8 452L947 451.7L953.2 451.3L959.4 450.9L965.5 450.5L971.7 450L977.8 449.4L983.9 448.8L989.9 448.2L996 447.5L1002 446.7L1008 445.9L1013.9 445.1L1019.8 444.2L1025.7 443.3L1031.5 442.3L1037.3 441.3L1043.1 440.2L1048.8 439.1L1054.5 438L1060.1 436.8L1065.7 435.6L1071.2 434.3L1076.7 433L1082.2 431.6L1087.5 430.2L1092.8 428.7L1098.1 427.2L1103.3 425.7L1108.4 424.1L1113.5 422.5L1118.5 420.9L1123.5 419.2L1128.4 417.5L1133.2 415.7L1137.9 413.9L1142.6 412.1L1147.2 410.2L1151.7 408.3L1156.2 406.4L1160.5 404.4L1164.8 402.4L1169 400.3L1173.2 398.2L1177.2 396.1L1181.2 394L1185.1 391.8L1188.9 389.6L1192.6 387.4L1196.2 385.1L1199.7 382.9L1203.2 380.6L1206.5 378.2L1209.8 375.9L1212.9 373.5L1216 371.1L1219 368.6L1221.9 366.2L1224.6 363.7L1227.3 361.2L1229.9 358.7L1232.4 356.1L1234.8 353.5L1237.1 351L1239.3 348.4L1241.3 345.8L1243.3 343.1L1245.2 340.5L1247 337.8L1248.6 335.2L1250.2 332.5L1251.6 329.8L1253 327.1L1254.2 324.4L1255.4 321.6L1256.4 318.9L1257.3 316.2L1258.1 313.4L1258.8 310.7L1259.4 307.9L1259.9 305.1L1260.3 302.4L1260.6 299.6L1260.8 296.8L1260.8 294.1M564.3 240.5L564.4 243.2L564.6 245.8L564.8 248.4L565.2 251L565.6 253.7L566.2 256.3L566.9 258.9L567.7 261.5L568.5 264.1L569.5 266.7L570.6 269.3L571.8 271.9L573 274.4L574.4 277L575.9 279.5L577.5 282.1L579.2 284.6L580.9 287.1L582.8 289.6L584.8 292.1L586.9 294.5L589 297L591.3 299.4L593.7 301.8L596.1 304.2L598.7 306.6L601.3 309L604 311.3L606.9 313.6L609.8 315.9L612.8 318.2L615.9 320.4L619.1 322.6L622.3 324.8L625.7 327L629.1 329.1L632.6 331.2L636.2 333.3L639.9 335.4L643.7 337.4L647.5 339.4L651.5 341.4L655.5 343.3L659.5 345.2L663.7 347.1L667.9 349L672.2 350.8L676.6 352.5L681 354.3L685.5 356L690.1 357.7L694.7 359.3L699.4 360.9L704.2 362.5L709 364L713.8 365.5L718.8 366.9L723.8 368.4L728.8 369.7L733.9 371.1L739.1 372.4L744.3 373.6L749.5 374.8L754.8 376L760.2 377.1L765.6 378.2L771 379.3L776.5 380.3L782 381.3L787.5 382.2L793.1 383.1L798.7 383.9L804.3 384.7L810 385.4L815.7 386.1L821.5 386.8L827.2 387.4L833 388L838.8 388.5L844.6 389L850.4 389.4L856.3 389.8L862.2 390.1L868 390.4L873.9 390.7L879.8 390.9L885.8 391.1L891.7 391.2L897.6 391.2L903.5 391.3L909.4 391.2L915.3 391.2L921.2 391.1L927.2 390.9L933.1 390.7L939 390.4L944.8 390.1L950.7 389.8L956.6 389.4L962.4 389L968.2 388.5L974 388L979.8 387.4L985.5 386.8L991.3 386.1L997 385.4L1002.7 384.7L1008.3 383.9L1013.9 383.1L1019.5 382.2L1025 381.3L1030.5 380.3L1036 379.3L1041.4 378.2L1046.8 377.1L1052.2 376L1057.5 374.8L1062.7 373.6L1067.9 372.4L1073.1 371.1L1078.2 369.7L1083.2 368.4L1088.2 366.9L1093.2 365.5L1098 364L1102.8 362.5L1107.6 360.9L1112.3 359.3L1116.9 357.7L1121.5 356L1126 354.3L1130.4 352.5L1134.8 350.8L1139.1 349L1143.3 347.1L1147.5 345.2L1151.5 343.3L1155.5 341.4L1159.5 339.4L1163.3 337.4L1167.1 335.4L1170.8 333.3L1174.4 331.2L1177.9 329.1L1181.3 327L1184.7 324.8L1187.9 322.6L1191.1 320.4L1194.2 318.2L1197.2 315.9L1200.1 313.6L1203 311.3L1205.7 309L1208.3 306.6L1210.9 304.2L1213.3 301.8L1215.7 299.4L1218 297L1220.1 294.5L1222.2 292.1L1224.2 289.6L1226.1 287.1L1227.8 284.6L1229.5 282.1L1231.1 279.5L1232.6 277L1234 274.4L1235.2 271.9L1236.4 269.3L1237.5 266.7L1238.5 264.1L1239.3 261.5L1240.1 258.9L1240.8 256.3L1241.4 253.7L1241.8 251L1242.2 248.4L1242.4 245.8L1242.6 243.2L1242.7 240.5M593.2 194.6L593.3 197L593.4 199.4L593.7 201.8L594 204.2L594.4 206.6L594.9 209L595.5 211.4L596.3 213.7L597.1 216.1L597.9 218.5L598.9 220.9L600 223.2L601.2 225.6L602.4 227.9L603.8 230.2L605.3 232.6L606.8 234.9L608.4 237.2L610.1 239.5L611.9 241.7L613.8 244L615.8 246.2L617.9 248.4L620.1 250.6L622.3 252.8L624.6 255L627.1 257.2L629.6 259.3L632.1 261.4L634.8 263.5L637.5 265.6L640.4 267.6L643.3 269.7L646.3 271.7L649.3 273.7L652.5 275.6L655.7 277.5L659 279.5L662.4 281.3L665.8 283.2L669.3 285L672.9 286.8L676.6 288.6L680.3 290.4L684.1 292.1L688 293.8L691.9 295.4L695.9 297L699.9 298.6L704.1 300.2L708.2 301.7L712.5 303.2L716.8 304.7L721.1 306.1L725.5 307.5L730 308.9L734.5 310.2L739.1 311.5L743.7 312.8L748.4 314L753.1 315.2L757.8 316.3L762.6 317.4L767.5 318.5L772.4 319.5L777.3 320.5L782.3 321.5L787.3 322.4L792.3 323.3L797.4 324.1L802.5 324.9L807.6 325.7L812.8 326.4L818 327.1L823.2 327.8L828.4 328.4L833.7 328.9L839 329.4L844.3 329.9L849.6 330.4L855 330.8L860.3 331.1L865.7 331.4L871.1 331.7L876.5 331.9L881.9 332.1L887.3 332.3L892.7 332.4L898.1 332.4L903.5 332.5L908.9 332.4L914.3 332.4L919.7 332.3L925.1 332.1L930.5 331.9L935.9 331.7L941.3 331.4L946.7 331.1L952 330.8L957.4 330.4L962.7 329.9L968 329.4L973.3 328.9L978.6 328.4L983.8 327.8L989 327.1L994.2 326.4L999.4 325.7L1004.5 324.9L1009.6 324.1L1014.7 323.3L1019.7 322.4L1024.7 321.5L1029.7 320.5L1034.6 319.5L1039.5 318.5L1044.4 317.4L1049.2 316.3L1053.9 315.2L1058.6 314L1063.3 312.8L1067.9 311.5L1072.5 310.2L1077 308.9L1081.5 307.5L1085.9 306.1L1090.2 304.7L1094.5 303.2L1098.8 301.7L1102.9 300.2L1107.1 298.6L1111.1 297L1115.1 295.4L1119 293.8L1122.9 292.1L1126.7 290.4L1130.4 288.6L1134.1 286.8L1137.7 285L1141.2 283.2L1144.6 281.3L1148 279.5L1151.3 277.5L1154.5 275.6L1157.7 273.7L1160.7 271.7L1163.7 269.7L1166.6 267.6L1169.5 265.6L1172.2 263.5L1174.9 261.4L1177.4 259.3L1179.9 257.2L1182.4 255L1184.7 252.8L1186.9 250.6L1189.1 248.4L1191.2 246.2L1193.2 244L1195.1 241.7L1196.9 239.5L1198.6 237.2L1200.2 234.9L1201.7 232.6L1203.2 230.2L1204.6 227.9L1205.8 225.6L1207 223.2L1208.1 220.9L1209.1 218.5L1209.9 216.1L1210.7 213.7L1211.5 211.4L1212.1 209L1212.6 206.6L1213 204.2L1213.3 201.8L1213.6 199.4L1213.7 197L1213.8 194.6M630.9 159.3L630.9 161.4L631 163.5L631.2 165.6L631.5 167.7L631.9 169.8L632.4 171.9L632.9 174L633.5 176.1L634.2 178.2L635 180.3L635.9 182.4L636.8 184.5L637.9 186.5L639 188.6L640.2 190.6L641.4 192.7L642.8 194.7L644.2 196.7L645.7 198.7L647.3 200.7L649 202.7L650.7 204.7L652.5 206.6L654.4 208.6L656.4 210.5L658.5 212.4L660.6 214.3L662.8 216.2L665.1 218L667.4 219.9L669.8 221.7L672.3 223.5L674.9 225.3L677.5 227L680.2 228.8L682.9 230.5L685.8 232.2L688.7 233.9L691.6 235.5L694.7 237.2L697.7 238.8L700.9 240.4L704.1 241.9L707.4 243.5L710.7 245L714.1 246.4L717.6 247.9L721.1 249.3L724.6 250.7L728.3 252.1L731.9 253.5L735.7 254.8L739.4 256.1L743.3 257.3L747.1 258.5L751.1 259.7L755 260.9L759 262L763.1 263.2L767.2 264.2L771.3 265.3L775.5 266.3L779.7 267.3L784 268.2L788.3 269.1L792.6 270L797 270.8L801.4 271.6L805.8 272.4L810.3 273.2L814.7 273.9L819.3 274.5L823.8 275.2L828.4 275.8L832.9 276.3L837.5 276.9L842.2 277.4L846.8 277.8L851.5 278.2L856.2 278.6L860.9 279L865.6 279.3L870.3 279.6L875 279.8L879.7 280L884.5 280.2L889.2 280.3L894 280.4L898.7 280.4L903.5 280.5L908.3 280.4L913 280.4L917.8 280.3L922.5 280.2L927.3 280L932 279.8L936.7 279.6L941.4 279.3L946.1 279L950.8 278.6L955.5 278.2L960.2 277.8L964.8 277.4L969.5 276.9L974.1 276.3L978.6 275.8L983.2 275.2L987.7 274.5L992.3 273.9L996.7 273.2L1001.2 272.4L1005.6 271.6L1010 270.8L1014.4 270L1018.7 269.1L1023 268.2L1027.3 267.3L1031.5 266.3L1035.7 265.3L1039.8 264.2L1043.9 263.2L1048 262L1052 260.9L1055.9 259.7L1059.9 258.5L1063.7 257.3L1067.6 256.1L1071.3 254.8L1075.1 253.5L1078.7 252.1L1082.4 250.7L1085.9 249.3L1089.4 247.9L1092.9 246.4L1096.3 245L1099.6 243.5L1102.9 241.9L1106.1 240.4L1109.3 238.8L1112.3 237.2L1115.4 235.5L1118.3 233.9L1121.2 232.2L1124.1 230.5L1126.8 228.8L1129.5 227L1132.1 225.3L1134.7 223.5L1137.2 221.7L1139.6 219.9L1141.9 218L1144.2 216.2L1146.4 214.3L1148.5 212.4L1150.6 210.5L1152.6 208.6L1154.5 206.6L1156.3 204.7L1158 202.7L1159.7 200.7L1161.3 198.7L1162.8 196.7L1164.2 194.7L1165.6 192.7L1166.8 190.6L1168 188.6L1169.1 186.5L1170.2 184.5L1171.1 182.4L1172 180.3L1172.8 178.2L1173.5 176.1L1174.1 174L1174.6 171.9L1175.1 169.8L1175.5 167.7L1175.8 165.6L1176 163.5L1176.1 161.4L1176.1 159.3M674.7 137.1L674.7 138.9L674.8 140.7L675 142.4L675.3 144.2L675.6 146L676 147.7L676.4 149.5L676.9 151.3L677.5 153L678.2 154.8L678.9 156.5L679.7 158.3L680.6 160L681.5 161.7L682.5 163.4L683.6 165.1L684.7 166.8L685.9 168.5L687.2 170.2L688.5 171.9L689.9 173.6L691.4 175.2L692.9 176.8L694.5 178.5L696.1 180.1L697.9 181.7L699.6 183.3L701.5 184.8L703.4 186.4L705.4 188L707.4 189.5L709.5 191L711.6 192.5L713.8 194L716.1 195.4L718.4 196.9L720.8 198.3L723.2 199.7L725.7 201.1L728.2 202.5L730.8 203.8L733.5 205.2L736.2 206.5L738.9 207.8L741.7 209L744.6 210.3L747.5 211.5L750.4 212.7L753.4 213.9L756.4 215L759.5 216.1L762.6 217.2L765.8 218.3L769 219.4L772.3 220.4L775.6 221.4L778.9 222.4L782.3 223.3L785.7 224.3L789.1 225.2L792.6 226.1L796.1 226.9L799.6 227.7L803.2 228.5L806.8 229.3L810.4 230L814.1 230.7L817.8 231.4L821.5 232L825.2 232.7L829 233.3L832.8 233.8L836.6 234.4L840.4 234.9L844.3 235.3L848.2 235.8L852 236.2L855.9 236.6L859.8 236.9L863.8 237.3L867.7 237.5L871.7 237.8L875.6 238L879.6 238.2L883.6 238.4L887.5 238.6L891.5 238.7L895.5 238.7L899.5 238.8L903.5 238.8L907.5 238.8L911.5 238.7L915.5 238.7L919.5 238.6L923.4 238.4L927.4 238.2L931.4 238L935.3 237.8L939.3 237.5L943.2 237.3L947.2 236.9L951.1 236.6L955 236.2L958.8 235.8L962.7 235.3L966.6 234.9L970.4 234.4L974.2 233.8L978 233.3L981.8 232.7L985.5 232L989.2 231.4L992.9 230.7L996.6 230L1000.2 229.3L1003.8 228.5L1007.4 227.7L1010.9 226.9L1014.4 226.1L1017.9 225.2L1021.3 224.3L1024.7 223.3L1028.1 222.4L1031.4 221.4L1034.7 220.4L1038 219.4L1041.2 218.3L1044.4 217.2L1047.5 216.1L1050.6 215L1053.6 213.9L1056.6 212.7L1059.5 211.5L1062.4 210.3L1065.3 209L1068.1 207.8L1070.8 206.5L1073.5 205.2L1076.2 203.8L1078.8 202.5L1081.3 201.1L1083.8 199.7L1086.2 198.3L1088.6 196.9L1090.9 195.4L1093.2 194L1095.4 192.5L1097.5 191L1099.6 189.5L1101.6 188L1103.6 186.4L1105.5 184.8L1107.4 183.3L1109.1 181.7L1110.9 180.1L1112.5 178.5L1114.1 176.8L1115.6 175.2L1117.1 173.6L1118.5 171.9L1119.8 170.2L1121.1 168.5L1122.3 166.8L1123.4 165.1L1124.5 163.4L1125.5 161.7L1126.4 160L1127.3 158.3L1128.1 156.5L1128.8 154.8L1129.5 153L1130.1 151.3L1130.6 149.5L1131 147.7L1131.4 146L1131.7 144.2L1132 142.4L1132.2 140.7L1132.3 138.9L1132.3 137.1M553.7 446.9L551.2 437.9L549 428.7L547.2 419.4L545.7 409.9L544.5 400.4L543.7 390.9L543.2 381.2L543.1 371.5L543.3 361.8L543.9 352.2L544.8 342.5L546 332.8L547.6 323.3L549.5 313.8L551.7 304.3L554.3 295L557.2 285.9L560.4 276.8L563.9 268L567.7 259.3L571.8 250.8L576.2 242.5L580.9 234.4L585.8 226.6L591 219.1L596.5 211.8L602.2 204.8L608.1 198.1L614.3 191.7L620.6 185.6L627.2 179.9L633.9 174.5L640.9 169.5L647.9 164.9L655.1 160.6L662.5 156.7L669.9 153.2L677.5 150.1L685.1 147.4L692.9 145.1L700.6 143.2L708.4 141.7L716.3 140.7L723.3 140.1M584.9 518.1L580.6 510.6L576.5 502.8L572.8 494.8L569.4 486.6L566.2 478.1L563.4 469.4L560.9 460.6L558.7 451.6L556.8 442.4L555.3 433.1L554.1 423.7L553.2 414.2L552.6 404.6L552.4 394.9L552.5 385.2L552.9 375.5L553.7 365.8L554.8 356.1L556.3 346.4L558 336.8L560.1 327.2L562.5 317.7L565.3 308.3L568.3 299.1L571.6 290L575.3 281L579.2 272.2L583.4 263.6L587.9 255.3L592.6 247.1L597.6 239.2L602.9 231.5L608.4 224.1L614.1 217L620.1 210.2L626.2 203.6L632.5 197.4L639.1 191.6L645.7 186.1L652.6 180.9L659.6 176.1L666.7 171.7L673.9 167.6L681.3 164L688.7 160.7L696.2 157.9L703.8 155.4L711.4 153.4L719 151.8L726.7 150.6L727.9 150.5M619.9 564.6L614.7 558.7L609.7 552.5L605 545.9L600.5 539.1L596.3 532L592.3 524.6L588.6 516.9L585.2 508.9L582.1 500.7L579.3 492.3L576.8 483.7L574.5 474.9L572.6 465.9L571 456.7L569.7 447.4L568.7 438L568.1 428.5L567.7 418.9L567.7 409.2L568 399.5L568.6 389.7L569.5 379.9L570.8 370.2L572.4 360.4L574.2 350.7L576.4 341.1L578.9 331.5L581.7 322L584.7 312.7L588.1 303.4L591.8 294.4L595.7 285.5L599.8 276.7L604.3 268.2L609 259.9L613.9 251.9L619.1 244L624.5 236.5L630.1 229.2L635.9 222.2L641.8 215.5L648 209.2L654.3 203.1L660.8 197.4L667.5 192.1L674.2 187.1L681.1 182.5L688.1 178.3L695.1 174.4L702.3 171L709.5 168L716.8 165.3L724.1 163.1L731.4 161.3L735.6 160.5M653.5 595.1L648 590.6L642.7 585.8L637.6 580.6L632.8 575L628.1 569.1L623.7 562.8L619.5 556.2L615.5 549.3L611.8 542.2L608.4 534.7L605.2 526.9L602.2 518.9L599.6 510.6L597.2 502.2L595.1 493.5L593.3 484.6L591.8 475.5L590.6 466.3L589.7 457L589.1 447.5L588.8 437.9L588.7 428.2L589 418.5L589.6 408.7L590.5 398.8L591.6 389L593.1 379.1L594.8 369.3L596.9 359.6L599.2 349.9L601.8 340.2L604.7 330.7L607.8 321.3L611.3 312L614.9 302.9L618.8 293.9L623 285.2L627.4 276.6L632 268.2L636.9 260.1L641.9 252.3L647.2 244.7L652.6 237.3L658.2 230.3L664 223.6L669.9 217.2L676 211.2L682.2 205.4L688.5 200.1L695 195.1L701.5 190.5L708.2 186.2L714.9 182.4L721.6 178.9L728.4 175.9L735.3 173.2L742.1 171L746.1 169.9M685.3 616.4L680 613.1L674.8 609.3L669.8 605.2L664.9 600.7L660.3 595.8L655.8 590.5L651.5 584.9L647.4 578.9L643.6 572.6L639.9 565.9L636.5 558.9L633.3 551.7L630.4 544.1L627.7 536.3L625.3 528.2L623.1 519.9L621.1 511.3L619.5 502.5L618.1 493.6L616.9 484.4L616.1 475.1L615.5 465.7L615.2 456.1L615.1 446.5L615.4 436.7L615.9 426.9L616.7 417L617.7 407.1L619 397.2L620.6 387.3L622.5 377.4L624.6 367.5L626.9 357.8L629.6 348.1L632.4 338.5L635.5 329L638.9 319.6L642.5 310.5L646.3 301.4L650.3 292.6L654.5 284L658.9 275.6L663.5 267.4L668.3 259.5L673.3 251.9L678.4 244.5L683.7 237.5L689.1 230.7L694.7 224.3L700.4 218.2L706.2 212.5L712.1 207.1L718.1 202.1L724.1 197.4L730.3 193.2L736.4 189.3L742.7 185.9L748.9 182.8L755.2 180.2L759.3 178.7M716.2 632.1L711.2 629.7L706.4 626.8L701.8 623.6L697.2 619.9L692.8 615.8L688.6 611.4L684.5 606.5L680.6 601.3L676.9 595.7L673.4 589.7L670 583.4L666.9 576.8L664 569.8L661.3 562.6L658.8 555L656.5 547.2L654.4 539.1L652.6 530.7L651 522.2L649.6 513.4L648.5 504.4L647.6 495.2L647 485.9L646.6 476.4L646.5 466.8L646.6 457L646.9 447.2L647.5 437.3L648.3 427.4L649.4 417.4L650.7 407.4L652.2 397.4L654 387.4L656 377.5L658.3 367.6L660.7 357.8L663.4 348.1L666.3 338.5L669.4 329.1L672.7 319.8L676.2 310.7L679.8 301.7L683.7 293L687.7 284.5L691.9 276.2L696.3 268.1L700.8 260.4L705.4 252.9L710.2 245.7L715.1 238.8L720.1 232.3L725.3 226.1L730.5 220.2L735.8 214.7L741.1 209.5L746.6 204.8L752.1 200.4L757.6 196.4L763.2 192.8L768.8 189.7L774.4 186.9L775 186.7M746.7 644.1L742.4 642.3L738.1 640.2L734 637.6L730 634.6L726 631.2L722.3 627.4L718.6 623.2L715.1 618.5L711.7 613.5L708.5 608.2L705.5 602.4L702.6 596.3L699.9 589.8L697.4 583.1L695 576L692.9 568.6L690.9 560.9L689.1 552.9L687.5 544.7L686.2 536.2L685 527.5L684 518.5L683.3 509.4L682.7 500.1L682.4 490.7L682.2 481.1L682.3 471.3L682.6 461.5L683.1 451.6L683.8 441.6L684.7 431.6L685.8 421.5L687.1 411.4L688.7 401.3L690.4 391.3L692.3 381.3L694.4 371.4L696.7 361.5L699.2 351.8L701.8 342.1L704.7 332.7L707.7 323.3L710.8 314.2L714.1 305.2L717.6 296.5L721.2 288L725 279.7L728.8 271.7L732.8 263.9L736.9 256.5L741.2 249.3L745.5 242.5L749.9 236L754.4 229.8L758.9 224L763.6 218.5L768.2 213.5L773 208.8L777.7 204.5L782.5 200.6L787.3 197.1L792.2 194L792.9 193.6M777.4 653.2L773.8 652L770.2 650.4L766.8 648.4L763.4 645.9L760.1 643L756.9 639.7L753.9 636L750.9 631.9L748 627.3L745.3 622.4L742.7 617.1L740.2 611.4L737.9 605.3L735.7 598.9L733.7 592.2L731.8 585.2L730.1 577.8L728.5 570.1L727.1 562.2L725.8 553.9L724.7 545.5L723.8 536.8L723.1 527.8L722.5 518.7L722.1 509.4L721.8 499.9L721.8 490.3L721.9 480.5L722.1 470.6L722.6 460.7L723.2 450.6L724 440.5L725 430.4L726.1 420.2L727.4 410.1L728.8 400L730.5 389.9L732.2 379.8L734.2 369.9L736.2 360.1L738.5 350.3L740.8 340.7L743.3 331.3L745.9 322L748.7 312.9L751.6 304L754.6 295.4L757.7 287L760.9 278.8L764.2 270.9L767.6 263.3L771.1 256L774.6 249.1L778.3 242.4L782 236.1L785.7 230.1L789.6 224.5L793.4 219.3L797.3 214.5L801.2 210L805.2 206L809.1 202.4L812.6 199.5M808.5 660L805.7 659.3L802.9 658.1L800.2 656.4L797.6 654.4L795.1 651.9L792.6 648.9L790.2 645.6L787.9 641.8L785.6 637.6L783.5 633.1L781.5 628.1L779.5 622.7L777.7 617L775.9 610.9L774.3 604.4L772.8 597.6L771.4 590.5L770.2 583.1L769 575.3L768 567.3L767.1 559.1L766.3 550.5L765.7 541.7L765.2 532.8L764.8 523.6L764.5 514.2L764.4 504.6L764.4 494.9L764.6 485.1L764.8 475.2L765.3 465.1L765.8 455L766.5 444.8L767.3 434.6L768.2 424.4L769.2 414.2L770.4 404L771.7 393.9L773.1 383.8L774.6 373.8L776.3 363.9L778 354.1L779.9 344.4L781.9 335L783.9 325.6L786.1 316.5L788.3 307.6L790.7 298.9L793.1 290.4L795.6 282.2L798.1 274.3L800.8 266.7L803.5 259.4L806.2 252.3L809 245.7L811.9 239.3L814.8 233.3L817.7 227.7L820.7 222.5L823.7 217.6L826.7 213.2L829.7 209.1L832.7 205.5L833.9 204.2M839.9 664.7L838 664.3L836.1 663.4L834.3 662.1L832.5 660.3L830.7 658L829 655.4L827.4 652.3L825.8 648.8L824.3 644.8L822.8 640.5L821.4 635.7L820.1 630.6L818.8 625.1L817.6 619.2L816.5 612.9L815.5 606.3L814.5 599.4L813.6 592.1L812.8 584.6L812.1 576.7L811.4 568.6L810.9 560.2L810.4 551.5L810 542.6L809.8 533.5L809.6 524.2L809.4 514.7L809.4 505.1L809.5 495.3L809.6 485.3L809.9 475.3L810.2 465.2L810.7 455L811.2 444.8L811.8 434.6L812.4 424.3L813.2 414L814.1 403.8L815 393.6L816 383.5L817.1 373.5L818.2 363.6L819.5 353.8L820.8 344.2L822.1 334.7L823.6 325.4L825.1 316.3L826.6 307.4L828.2 298.7L829.9 290.3L831.6 282.2L833.4 274.3L835.2 266.8L837.1 259.5L838.9 252.6L840.9 246L842.8 239.7L844.8 233.8L846.8 228.3L848.8 223.2L850.8 218.5L852.9 214.1L854.9 210.2L856.5 207.6M871.6 667.6L870.6 667.3L869.7 666.5L868.8 665.4L867.9 663.7L867 661.7L866.1 659.2L865.3 656.2L864.5 652.9L863.7 649.1L863 644.9L862.2 640.3L861.6 635.3L860.9 629.9L860.3 624.1L859.7 618L859.2 611.5L858.7 604.7L858.2 597.5L857.8 590L857.5 582.3L857.1 574.2L856.8 565.9L856.6 557.3L856.4 548.4L856.2 539.4L856.1 530.1L856.1 520.7L856.1 511.1L856.1 501.3L856.1 491.4L856.3 481.4L856.4 471.3L856.6 461.1L856.9 450.9L857.2 440.6L857.5 430.3L857.9 420L858.3 409.7L858.8 399.5L859.3 389.3L859.8 379.3L860.4 369.3L861 359.4L861.6 349.7L862.3 340.1L863 330.7L863.8 321.5L864.6 312.5L865.4 303.7L866.2 295.2L867.1 286.9L868 278.9L868.9 271.2L869.8 263.8L870.8 256.7L871.7 250L872.7 243.6L873.7 237.6L874.7 231.9L875.7 226.6L876.7 221.7L877.8 217.2L878.8 213.1L879.8 209.6M935.4 667.6L936.4 667.3L937.3 666.5L938.2 665.4L939.1 663.7L940 661.7L940.9 659.2L941.7 656.2L942.5 652.9L943.3 649.1L944 644.9L944.8 640.3L945.4 635.3L946.1 629.9L946.7 624.1L947.3 618L947.8 611.5L948.3 604.7L948.8 597.5L949.2 590L949.5 582.3L949.9 574.2L950.2 565.9L950.4 557.3L950.6 548.4L950.8 539.4L950.9 530.1L950.9 520.7L950.9 511.1L950.9 501.3L950.9 491.4L950.7 481.4L950.6 471.3L950.4 461.1L950.1 450.9L949.8 440.6L949.5 430.3L949.1 420L948.7 409.7L948.2 399.5L947.7 389.3L947.2 379.3L946.6 369.3L946 359.4L945.4 349.7L944.7 340.1L944 330.7L943.2 321.5L942.4 312.5L941.6 303.7L940.8 295.2L939.9 286.9L939 278.9L938.1 271.2L937.2 263.8L936.2 256.7L935.3 250L934.3 243.6L933.3 237.6L932.3 231.9L931.3 226.6L930.3 221.7L929.2 217.2L928.2 213.1L927.2 209.6M967.1 664.7L969 664.3L970.9 663.4L972.7 662.1L974.5 660.3L976.3 658L978 655.4L979.6 652.3L981.2 648.8L982.7 644.8L984.2 640.5L985.6 635.7L986.9 630.6L988.2 625.1L989.4 619.2L990.5 612.9L991.5 606.3L992.5 599.4L993.4 592.1L994.2 584.6L994.9 576.7L995.6 568.6L996.1 560.2L996.6 551.5L997 542.6L997.2 533.5L997.4 524.2L997.6 514.7L997.6 505.1L997.5 495.3L997.4 485.3L997.1 475.3L996.8 465.2L996.3 455L995.8 444.8L995.2 434.6L994.6 424.3L993.8 414L992.9 403.8L992 393.6L991 383.5L989.9 373.5L988.8 363.6L987.5 353.8L986.2 344.2L984.9 334.7L983.4 325.4L981.9 316.3L980.4 307.4L978.8 298.7L977.1 290.3L975.4 282.2L973.6 274.3L971.8 266.8L969.9 259.5L968.1 252.6L966.1 246L964.2 239.7L962.2 233.8L960.2 228.3L958.2 223.2L956.2 218.5L954.1 214.1L952.1 210.2L950.5 207.6M998.5 660L1001.3 659.3L1004.1 658.1L1006.8 656.4L1009.4 654.4L1011.9 651.9L1014.4 648.9L1016.8 645.6L1019.1 641.8L1021.4 637.6L1023.5 633.1L1025.5 628.1L1027.5 622.7L1029.3 617L1031.1 610.9L1032.7 604.4L1034.2 597.6L1035.6 590.5L1036.8 583.1L1038 575.3L1039 567.3L1039.9 559.1L1040.7 550.5L1041.3 541.7L1041.8 532.8L1042.2 523.6L1042.5 514.2L1042.6 504.6L1042.6 494.9L1042.4 485.1L1042.2 475.2L1041.7 465.1L1041.2 455L1040.5 444.8L1039.7 434.6L1038.8 424.4L1037.8 414.2L1036.6 404L1035.3 393.9L1033.9 383.8L1032.4 373.8L1030.7 363.9L1029 354.1L1027.1 344.4L1025.1 335L1023.1 325.6L1020.9 316.5L1018.7 307.6L1016.3 298.9L1013.9 290.4L1011.4 282.2L1008.9 274.3L1006.2 266.7L1003.5 259.4L1000.8 252.3L998 245.7L995.1 239.3L992.2 233.3L989.3 227.7L986.3 222.5L983.3 217.6L980.3 213.2L977.3 209.1L974.3 205.5L973.1 204.2M1029.6 653.2L1033.2 652L1036.8 650.4L1040.2 648.4L1043.6 645.9L1046.9 643L1050.1 639.7L1053.1 636L1056.1 631.9L1059 627.3L1061.7 622.4L1064.3 617.1L1066.8 611.4L1069.1 605.3L1071.3 598.9L1073.3 592.2L1075.2 585.2L1076.9 577.8L1078.5 570.1L1079.9 562.2L1081.2 553.9L1082.3 545.5L1083.2 536.8L1083.9 527.8L1084.5 518.7L1084.9 509.4L1085.2 499.9L1085.2 490.3L1085.1 480.5L1084.9 470.6L1084.4 460.7L1083.8 450.6L1083 440.5L1082 430.4L1080.9 420.2L1079.6 410.1L1078.2 400L1076.5 389.9L1074.8 379.8L1072.8 369.9L1070.8 360.1L1068.5 350.3L1066.2 340.7L1063.7 331.3L1061.1 322L1058.3 312.9L1055.4 304L1052.4 295.4L1049.3 287L1046.1 278.8L1042.8 270.9L1039.4 263.3L1035.9 256L1032.4 249.1L1028.7 242.4L1025 236.1L1021.3 230.1L1017.4 224.5L1013.6 219.3L1009.7 214.5L1005.8 210L1001.8 206L997.9 202.4L994.4 199.5M1060.3 644.1L1064.6 642.3L1068.9 640.2L1073 637.6L1077 634.6L1081 631.2L1084.7 627.4L1088.4 623.2L1091.9 618.5L1095.3 613.5L1098.5 608.2L1101.5 602.4L1104.4 596.3L1107.1 589.8L1109.6 583.1L1112 576L1114.1 568.6L1116.1 560.9L1117.9 552.9L1119.5 544.7L1120.8 536.2L1122 527.5L1123 518.5L1123.7 509.4L1124.3 500.1L1124.6 490.7L1124.8 481.1L1124.7 471.3L1124.4 461.5L1123.9 451.6L1123.2 441.6L1122.3 431.6L1121.2 421.5L1119.9 411.4L1118.3 401.3L1116.6 391.3L1114.7 381.3L1112.6 371.4L1110.3 361.5L1107.8 351.8L1105.2 342.1L1102.3 332.7L1099.3 323.3L1096.2 314.2L1092.9 305.2L1089.4 296.5L1085.8 288L1082 279.7L1078.2 271.7L1074.2 263.9L1070.1 256.5L1065.8 249.3L1061.5 242.5L1057.1 236L1052.6 229.8L1048.1 224L1043.4 218.5L1038.8 213.5L1034 208.8L1029.3 204.5L1024.5 200.6L1019.7 197.1L1014.8 194L1014.1 193.6M1090.8 632.1L1095.8 629.7L1100.6 626.8L1105.2 623.6L1109.8 619.9L1114.2 615.8L1118.4 611.4L1122.5 606.5L1126.4 601.3L1130.1 595.7L1133.6 589.7L1137 583.4L1140.1 576.8L1143 569.8L1145.7 562.6L1148.2 555L1150.5 547.2L1152.6 539.1L1154.4 530.7L1156 522.2L1157.4 513.4L1158.5 504.4L1159.4 495.2L1160 485.9L1160.4 476.4L1160.5 466.8L1160.4 457L1160.1 447.2L1159.5 437.3L1158.7 427.4L1157.6 417.4L1156.3 407.4L1154.8 397.4L1153 387.4L1151 377.5L1148.7 367.6L1146.3 357.8L1143.6 348.1L1140.7 338.5L1137.6 329.1L1134.3 319.8L1130.8 310.7L1127.2 301.7L1123.3 293L1119.3 284.5L1115.1 276.2L1110.7 268.1L1106.2 260.4L1101.6 252.9L1096.8 245.7L1091.9 238.8L1086.9 232.3L1081.7 226.1L1076.5 220.2L1071.2 214.7L1065.9 209.5L1060.4 204.8L1054.9 200.4L1049.4 196.4L1043.8 192.8L1038.2 189.7L1032.6 186.9L1032 186.7M1121.7 616.4L1127 613.1L1132.2 609.3L1137.2 605.2L1142.1 600.7L1146.7 595.8L1151.2 590.5L1155.5 584.9L1159.6 578.9L1163.4 572.6L1167.1 565.9L1170.5 558.9L1173.7 551.7L1176.6 544.1L1179.3 536.3L1181.7 528.2L1183.9 519.9L1185.9 511.3L1187.5 502.5L1188.9 493.6L1190.1 484.4L1190.9 475.1L1191.5 465.7L1191.8 456.1L1191.9 446.5L1191.6 436.7L1191.1 426.9L1190.3 417L1189.3 407.1L1188 397.2L1186.4 387.3L1184.5 377.4L1182.4 367.5L1180.1 357.8L1177.4 348.1L1174.6 338.5L1171.5 329L1168.1 319.6L1164.5 310.5L1160.7 301.4L1156.7 292.6L1152.5 284L1148.1 275.6L1143.5 267.4L1138.7 259.5L1133.7 251.9L1128.6 244.5L1123.3 237.5L1117.9 230.7L1112.3 224.3L1106.6 218.2L1100.8 212.5L1094.9 207.1L1088.9 202.1L1082.9 197.4L1076.7 193.2L1070.6 189.3L1064.3 185.9L1058.1 182.8L1051.8 180.2L1047.7 178.7M1153.5 595.1L1159 590.6L1164.3 585.8L1169.4 580.6L1174.2 575L1178.9 569.1L1183.3 562.8L1187.5 556.2L1191.5 549.3L1195.2 542.2L1198.6 534.7L1201.8 526.9L1204.8 518.9L1207.4 510.6L1209.8 502.2L1211.9 493.5L1213.7 484.6L1215.2 475.5L1216.4 466.3L1217.3 457L1217.9 447.5L1218.2 437.9L1218.3 428.2L1218 418.5L1217.4 408.7L1216.5 398.8L1215.4 389L1213.9 379.1L1212.2 369.3L1210.1 359.6L1207.8 349.9L1205.2 340.2L1202.3 330.7L1199.2 321.3L1195.7 312L1192.1 302.9L1188.2 293.9L1184 285.2L1179.6 276.6L1175 268.2L1170.1 260.1L1165.1 252.3L1159.8 244.7L1154.4 237.3L1148.8 230.3L1143 223.6L1137.1 217.2L1131 211.2L1124.8 205.4L1118.5 200.1L1112 195.1L1105.5 190.5L1098.8 186.2L1092.1 182.4L1085.4 178.9L1078.6 175.9L1071.7 173.2L1064.9 171L1060.9 169.9M1187.1 564.6L1192.3 558.7L1197.3 552.5L1202 545.9L1206.5 539.1L1210.7 532L1214.7 524.6L1218.4 516.9L1221.8 508.9L1224.9 500.7L1227.7 492.3L1230.2 483.7L1232.5 474.9L1234.4 465.9L1236 456.7L1237.3 447.4L1238.3 438L1238.9 428.5L1239.3 418.9L1239.3 409.2L1239 399.5L1238.4 389.7L1237.5 379.9L1236.2 370.2L1234.6 360.4L1232.8 350.7L1230.6 341.1L1228.1 331.5L1225.3 322L1222.3 312.7L1218.9 303.4L1215.2 294.4L1211.3 285.5L1207.2 276.7L1202.7 268.2L1198 259.9L1193.1 251.9L1187.9 244L1182.5 236.5L1176.9 229.2L1171.1 222.2L1165.2 215.5L1159 209.2L1152.7 203.1L1146.2 197.4L1139.5 192.1L1132.8 187.1L1125.9 182.5L1118.9 178.3L1111.9 174.4L1104.7 171L1097.5 168L1090.2 165.3L1082.9 163.1L1075.6 161.3L1071.4 160.5M1222.1 518.1L1226.4 510.6L1230.5 502.8L1234.2 494.8L1237.6 486.6L1240.8 478.1L1243.6 469.4L1246.1 460.6L1248.3 451.6L1250.2 442.4L1251.7 433.1L1252.9 423.7L1253.8 414.2L1254.4 404.6L1254.6 394.9L1254.5 385.2L1254.1 375.5L1253.3 365.8L1252.2 356.1L1250.7 346.4L1249 336.8L1246.9 327.2L1244.5 317.7L1241.7 308.3L1238.7 299.1L1235.4 290L1231.7 281L1227.8 272.2L1223.6 263.6L1219.1 255.3L1214.4 247.1L1209.4 239.2L1204.1 231.5L1198.6 224.1L1192.9 217L1186.9 210.2L1180.8 203.6L1174.5 197.4L1167.9 191.6L1161.3 186.1L1154.4 180.9L1147.4 176.1L1140.3 171.7L1133.1 167.6L1125.7 164L1118.3 160.7L1110.8 157.9L1103.2 155.4L1095.6 153.4L1088 151.8L1080.3 150.6L1079.1 150.5M1253.3 446.9L1255.8 437.9L1258 428.7L1259.8 419.4L1261.3 409.9L1262.5 400.4L1263.3 390.9L1263.8 381.2L1263.9 371.5L1263.7 361.8L1263.1 352.2L1262.2 342.5L1261 332.8L1259.4 323.3L1257.5 313.8L1255.3 304.3L1252.7 295L1249.8 285.9L1246.6 276.8L1243.1 268L1239.3 259.3L1235.2 250.8L1230.8 242.5L1226.1 234.4L1221.2 226.6L1216 219.1L1210.5 211.8L1204.8 204.8L1198.9 198.1L1192.7 191.7L1186.4 185.6L1179.8 179.9L1173.1 174.5L1166.1 169.5L1159.1 164.9L1151.9 160.6L1144.5 156.7L1137.1 153.2L1129.5 150.1L1121.9 147.4L1114.1 145.1L1106.4 143.2L1098.6 141.7L1090.7 140.7L1083.7 140.1" fill="none" stroke="#fff" stroke-opacity="0.3" stroke-width="1" clip-path="url(#lc)"/>
<path d="M540 351.5L540.1 354.3L540.2 357.1L540.5 360L540.9 362.8L541.4 365.6L542 368.4L542.7 371.2L543.5 374L544.5 376.8L545.5 379.6L546.7 382.3L547.9 385.1L549.3 387.8L550.8 390.6L552.4 393.3L554.1 396L555.9 398.7L557.8 401.4L559.8 404.1L561.9 406.8L564.1 409.4L566.5 412L568.9 414.6L571.4 417.2L574.1 419.8L576.8 422.3L579.6 424.9L582.5 427.4L585.6 429.8L588.7 432.3L591.9 434.7L595.2 437.1L598.6 439.5L602.1 441.8L605.7 444.2L609.4 446.5L613.2 448.7L617.1 451L621 453.2L625 455.4L629.2 457.5L633.4 459.6L637.7 461.7L642 463.7L646.5 465.7L651 467.7L655.6 469.7L660.3 471.6L665 473.4L669.8 475.3L674.7 477.1L679.7 478.8L684.7 480.5L689.8 482.2L695 483.9L700.2 485.4L705.5 487L710.9 488.5L716.3 490L721.8 491.4L727.3 492.8L732.8 494.2L738.5 495.5L744.2 496.7L749.9 497.9L755.7 499.1L761.5 500.2L767.3 501.3L773.2 502.3L779.2 503.3L785.2 504.3L791.2 505.2L797.2 506L803.3 506.8L809.4 507.6L815.6 508.3L821.7 508.9L827.9 509.5L834.1 510.1L840.4 510.6L846.6 511.1L852.9 511.5L859.2 511.9L865.5 512.2L871.8 512.5L878.1 512.7L884.5 512.8L890.8 513L897.2 513L903.5 513.1L909.8 513L916.2 513L922.5 512.8L928.9 512.7L935.2 512.5L941.5 512.2L947.8 511.9L954.1 511.5L960.4 511.1L966.6 510.6L972.9 510.1L979.1 509.5L985.3 508.9L991.4 508.3L997.6 507.6L1003.7 506.8L1009.8 506L1015.8 505.2L1021.8 504.3L1027.8 503.3L1033.8 502.3L1039.7 501.3L1045.5 500.2L1051.3 499.1L1057.1 497.9L1062.8 496.7L1068.5 495.5L1074.2 494.2L1079.7 492.8L1085.2 491.4L1090.7 490L1096.1 488.5L1101.5 487L1106.8 485.4L1112 483.9L1117.2 482.2L1122.3 480.5L1127.3 478.8L1132.3 477.1L1137.2 475.3L1142 473.4L1146.7 471.6L1151.4 469.7L1156 467.7L1160.5 465.7L1165 463.7L1169.3 461.7L1173.6 459.6L1177.8 457.5L1182 455.4L1186 453.2L1189.9 451L1193.8 448.7L1197.6 446.5L1201.3 444.2L1204.9 441.8L1208.4 439.5L1211.8 437.1L1215.1 434.7L1218.3 432.3L1221.4 429.8L1224.5 427.4L1227.4 424.9L1230.2 422.3L1232.9 419.8L1235.6 417.2L1238.1 414.6L1240.5 412L1242.9 409.4L1245.1 406.8L1247.2 404.1L1249.2 401.4L1251.1 398.7L1252.9 396L1254.6 393.3L1256.2 390.6L1257.7 387.8L1259.1 385.1L1260.3 382.3L1261.5 379.6L1262.5 376.8L1263.5 374L1264.3 371.2L1265 368.4L1265.6 365.6L1266.1 362.8L1266.5 360L1266.8 357.1L1266.9 354.3L1267 351.5" fill="none" stroke="#5a3f45" stroke-opacity="0.45" stroke-width="1"/>
<path d="M903.5 668.5L903.5 210.3" fill="none" stroke="#3a4a50" stroke-opacity="0.12" stroke-width="0.9"/>
<path d="M903.5 668.5L903.5 210.3" fill="none" stroke="#3a4a50" stroke-opacity="0.4" stroke-width="0.9" clip-path="url(#lc)"/>
</g>
<use href="#ocp" fill="none" stroke="#1f3440" stroke-width="1.1"/>
<g font-family="Liberation Sans" font-weight="bold" font-size="20.5" fill="#111" stroke="#111" stroke-width="0.6" text-anchor="middle"><text x="565" y="309">5</text><text x="700" y="339">13</text><text x="886" y="309">3</text><text x="875" y="339">1</text><text x="900" y="350">2</text><text x="1165" y="303">9</text><text x="1247" y="308">5</text><text x="701" y="388">11</text><text x="788" y="395">4</text><text x="1125" y="402">7</text><text x="1222" y="412">10</text><text x="865" y="451">6</text><text x="1131" y="493">14</text><text x="774" y="530">12</text><text x="962" y="617">8</text></g>
</g></svg>

<!-- notes -->
<div class="a" style="left:198px;top:686px;width:1168px;height:1px;background:#dadce0"></div>
<div class="a" style="left:198px;top:695px;width:1168px;height:1px;background:#dadce0"></div>
<div class="a" style="left:212px;top:705px;font-size:13.3px;color:#202124">Click to add speaker notes</div>
<div class="a" style="left:1276px;top:727px;width:34px;height:33px;border:1px solid #e3e5e8;border-radius:2px;background:#f8f9fa"></div>
<svg style="left:1283px;top:734px" width="20" height="20" viewBox="0 0 20 20"><path d="M2.5 1.2h15.5a.8.8 0 0 1 .8.8v14.2a.8.8 0 0 1 -.8.8h-6l-1.6 1.8-1.6-1.8h-6.3a.8.8 0 0 1 -.8-.8v-14.2a.8.8 0 0 1 .8-.8z" fill="#5f6368"/><path d="M10.3 3.6c.5 3 1.6 4.3 4.6 4.9-3 .6-4.1 1.8-4.6 4.9-.5-3.1-1.6-4.3-4.6-4.9 3-.6 4.1-1.9 4.6-4.9z" fill="#fff"/></svg>
<div class="a" style="left:1343px;top:724px;width:40px;height:40px;border-radius:20px;background:#fff;box-shadow:0 1px 3px rgba(60,64,67,.35)"></div>
<svg style="left:1351px;top:736px" width="10" height="14"><path d="M7.8 2.8l-3.9 4.2 3.9 4.2" fill="none" stroke="#5f6368" stroke-width="1.7"/></svg>
</body></html>
